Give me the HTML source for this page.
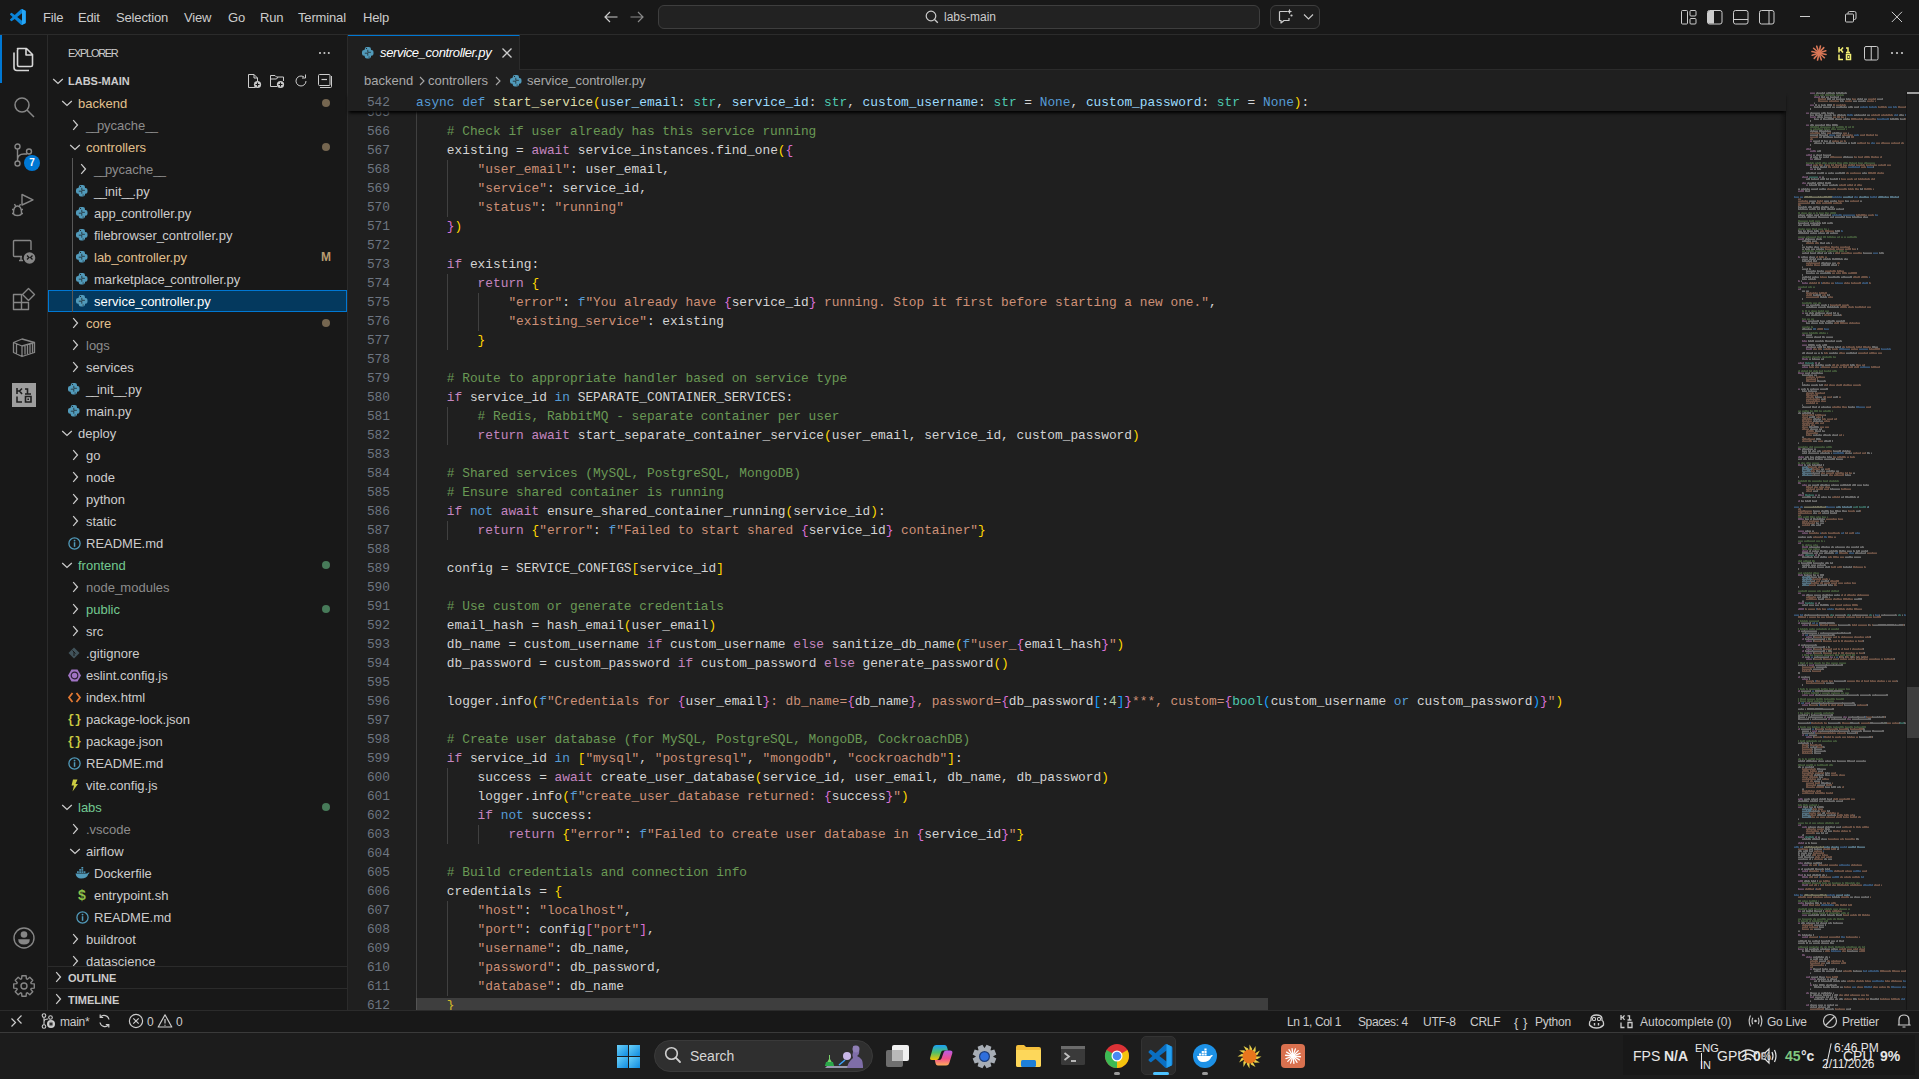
<!DOCTYPE html><html><head><meta charset="utf-8"><style>
*{margin:0;padding:0;box-sizing:border-box}
html,body{width:1919px;height:1079px;overflow:hidden;background:#181818}
body{position:relative;font-family:"Liberation Sans",sans-serif;font-size:13px;color:#cccccc}
.a{position:absolute}
.mono{font-family:"Liberation Mono",monospace}
svg{position:absolute;overflow:visible}
#code{position:absolute;left:416px;top:0;font-family:"Liberation Mono",monospace;font-size:12.83px;white-space:pre;color:#d4d4d4}
.ln{position:absolute;height:19px;line-height:19px}
.lnum{position:absolute;left:348px;width:42px;text-align:right;font-family:"Liberation Mono",monospace;font-size:12.83px;color:#6e7681;height:19px;line-height:19px}
i{font-style:normal}
b{font-weight:normal}
.kw{color:#c586c0}.st{color:#569cd6}.fn{color:#dcdcaa}.par{color:#9cdcfe}.ty{color:#4ec9b0}.s{color:#ce9178}.c{color:#6a9955}.n{color:#b5cea8}
.guide{position:absolute;width:1px;background:#404040}
.row{position:absolute;left:48px;width:299px;height:22px;line-height:22px;white-space:nowrap}
.row .t{position:absolute;top:0}
.us{letter-spacing:-1.8px}
</style></head><body>
<div class="a" style="left:0;top:0;width:1919px;height:34px;background:#181818"></div>
<div class="a" style="left:0;top:34px;width:1919px;height:1px;background:#2b2b2b"></div>
<div class="a" style="left:0;top:35px;width:47px;height:975px;background:#181818"></div>
<div class="a" style="left:47px;top:35px;width:1px;height:975px;background:#2b2b2b"></div>
<div class="a" style="left:0;top:35px;width:2px;height:48px;background:#0078d4"></div>
<div class="a" style="left:48px;top:35px;width:299px;height:975px;background:#181818"></div>
<div class="a" style="left:347px;top:35px;width:1px;height:975px;background:#2b2b2b"></div>
<div class="a" style="left:348px;top:35px;width:1571px;height:35px;background:#181818"></div>
<div class="a" style="left:348px;top:69px;width:1571px;height:1px;background:#2b2b2b"></div>
<div class="a" style="left:348px;top:70px;width:1571px;height:940px;background:#1f1f1f"></div>
<div class="a" style="left:348px;top:35px;width:172px;height:35px;background:#1f1f1f;border-top:1px solid #0078d4;border-right:1px solid #2b2b2b"></div>
<div class="a" style="left:380px;top:35px;height:35px;line-height:35px;font-style:italic;color:#ffffff;letter-spacing:-0.35px">service_controller.py</div>
<svg style="left:362px;top:47px" width="12" height="12" viewBox="0 0 12 12"><rect x="2.7" y="0" width="6.3" height="11.5" rx="2.2" fill="#519aba"/><rect x="0" y="2.9" width="11.5" height="5.8" rx="2" fill="#519aba"/><path d="M2.8 6.2H5.8V8.7M8.9 5.3H5.8V2.8" fill="none" stroke="#181818" stroke-width="0.7"/><circle cx="4.5" cy="1.5" r="0.6" fill="#181818"/><circle cx="7.1" cy="10" r="0.6" fill="#181818"/></svg>
<svg style="left:510px;top:75px" width="12" height="12" viewBox="0 0 12 12"><rect x="2.7" y="0" width="6.3" height="11.5" rx="2.2" fill="#519aba"/><rect x="0" y="2.9" width="11.5" height="5.8" rx="2" fill="#519aba"/><path d="M2.8 6.2H5.8V8.7M8.9 5.3H5.8V2.8" fill="none" stroke="#181818" stroke-width="0.7"/><circle cx="4.5" cy="1.5" r="0.6" fill="#181818"/><circle cx="7.1" cy="10" r="0.6" fill="#181818"/></svg>
<svg style="left:500px;top:46px" width="14" height="14" viewBox="0 0 14 14"><path d="M2.5 2.5L11.5 11.5M11.5 2.5L2.5 11.5" stroke="#cccccc" stroke-width="1.3"/></svg>
<div class="a" style="left:364px;top:70px;height:22px;line-height:22px;color:#a9a9a9;white-space:pre">backend</div>
<div class="a" style="left:428px;top:70px;height:22px;line-height:22px;color:#a9a9a9;white-space:pre">controllers</div>
<div class="a" style="left:527px;top:70px;height:22px;line-height:22px;color:#a9a9a9;white-space:pre">service_controller.py</div>
<svg style="left:417px;top:75px" width="10" height="12" viewBox="0 0 10 12"><path d="M3 2L7 6L3 10" fill="none" stroke="#a9a9a9" stroke-width="1.1"/></svg>
<svg style="left:493px;top:75px" width="10" height="12" viewBox="0 0 10 12"><path d="M3 2L7 6L3 10" fill="none" stroke="#a9a9a9" stroke-width="1.1"/></svg>
<div class="lnum" style="top:103px">565</div>
<div class="lnum" style="top:122px">566</div>
<div class="ln" style="left:416px;top:122px;font-family:'Liberation Mono',monospace;font-size:12.83px;white-space:pre;color:#d4d4d4">    <i class="c"># Check if user already has this service running</i></div>
<div class="lnum" style="top:141px">567</div>
<div class="ln" style="left:416px;top:141px;font-family:'Liberation Mono',monospace;font-size:12.83px;white-space:pre;color:#d4d4d4">    existing = <i class="kw">await</i> service_instances.find_one<b style="color:#ffd700">(</b><b style="color:#da70d6">{</b></div>
<div class="lnum" style="top:160px">568</div>
<div class="ln" style="left:416px;top:160px;font-family:'Liberation Mono',monospace;font-size:12.83px;white-space:pre;color:#d4d4d4">        <i class="s">&quot;user_email&quot;</i>: user_email,</div>
<div class="lnum" style="top:179px">569</div>
<div class="ln" style="left:416px;top:179px;font-family:'Liberation Mono',monospace;font-size:12.83px;white-space:pre;color:#d4d4d4">        <i class="s">&quot;service&quot;</i>: service_id,</div>
<div class="lnum" style="top:198px">570</div>
<div class="ln" style="left:416px;top:198px;font-family:'Liberation Mono',monospace;font-size:12.83px;white-space:pre;color:#d4d4d4">        <i class="s">&quot;status&quot;</i>: <i class="s">&quot;running&quot;</i></div>
<div class="lnum" style="top:217px">571</div>
<div class="ln" style="left:416px;top:217px;font-family:'Liberation Mono',monospace;font-size:12.83px;white-space:pre;color:#d4d4d4">    <b style="color:#da70d6">}</b><b style="color:#ffd700">)</b></div>
<div class="lnum" style="top:236px">572</div>
<div class="ln" style="left:416px;top:236px;font-family:'Liberation Mono',monospace;font-size:12.83px;white-space:pre;color:#d4d4d4"></div>
<div class="lnum" style="top:255px">573</div>
<div class="ln" style="left:416px;top:255px;font-family:'Liberation Mono',monospace;font-size:12.83px;white-space:pre;color:#d4d4d4">    <i class="kw">if</i> existing:</div>
<div class="lnum" style="top:274px">574</div>
<div class="ln" style="left:416px;top:274px;font-family:'Liberation Mono',monospace;font-size:12.83px;white-space:pre;color:#d4d4d4">        <i class="kw">return</i> <b style="color:#ffd700">{</b></div>
<div class="lnum" style="top:293px">575</div>
<div class="ln" style="left:416px;top:293px;font-family:'Liberation Mono',monospace;font-size:12.83px;white-space:pre;color:#d4d4d4">            <i class="s">&quot;error&quot;</i>: <i class="st">f</i><i class="s">&quot;You already have </i><b style="color:#da70d6">{</b>service_id<b style="color:#da70d6">}</b><i class="s"> running. Stop it first before starting a new one.&quot;</i>,</div>
<div class="lnum" style="top:312px">576</div>
<div class="ln" style="left:416px;top:312px;font-family:'Liberation Mono',monospace;font-size:12.83px;white-space:pre;color:#d4d4d4">            <i class="s">&quot;existing_service&quot;</i>: existing</div>
<div class="lnum" style="top:331px">577</div>
<div class="ln" style="left:416px;top:331px;font-family:'Liberation Mono',monospace;font-size:12.83px;white-space:pre;color:#d4d4d4">        <b style="color:#ffd700">}</b></div>
<div class="lnum" style="top:350px">578</div>
<div class="ln" style="left:416px;top:350px;font-family:'Liberation Mono',monospace;font-size:12.83px;white-space:pre;color:#d4d4d4"></div>
<div class="lnum" style="top:369px">579</div>
<div class="ln" style="left:416px;top:369px;font-family:'Liberation Mono',monospace;font-size:12.83px;white-space:pre;color:#d4d4d4">    <i class="c"># Route to appropriate handler based on service type</i></div>
<div class="lnum" style="top:388px">580</div>
<div class="ln" style="left:416px;top:388px;font-family:'Liberation Mono',monospace;font-size:12.83px;white-space:pre;color:#d4d4d4">    <i class="kw">if</i> service_id <i class="st">in</i> SEPARATE_CONTAINER_SERVICES:</div>
<div class="lnum" style="top:407px">581</div>
<div class="ln" style="left:416px;top:407px;font-family:'Liberation Mono',monospace;font-size:12.83px;white-space:pre;color:#d4d4d4">        <i class="c"># Redis, RabbitMQ - separate container per user</i></div>
<div class="lnum" style="top:426px">582</div>
<div class="ln" style="left:416px;top:426px;font-family:'Liberation Mono',monospace;font-size:12.83px;white-space:pre;color:#d4d4d4">        <i class="kw">return</i> <i class="kw">await</i> start_separate_container_service<b style="color:#ffd700">(</b>user_email, service_id, custom_password<b style="color:#ffd700">)</b></div>
<div class="lnum" style="top:445px">583</div>
<div class="ln" style="left:416px;top:445px;font-family:'Liberation Mono',monospace;font-size:12.83px;white-space:pre;color:#d4d4d4"></div>
<div class="lnum" style="top:464px">584</div>
<div class="ln" style="left:416px;top:464px;font-family:'Liberation Mono',monospace;font-size:12.83px;white-space:pre;color:#d4d4d4">    <i class="c"># Shared services (MySQL, PostgreSQL, MongoDB)</i></div>
<div class="lnum" style="top:483px">585</div>
<div class="ln" style="left:416px;top:483px;font-family:'Liberation Mono',monospace;font-size:12.83px;white-space:pre;color:#d4d4d4">    <i class="c"># Ensure shared container is running</i></div>
<div class="lnum" style="top:502px">586</div>
<div class="ln" style="left:416px;top:502px;font-family:'Liberation Mono',monospace;font-size:12.83px;white-space:pre;color:#d4d4d4">    <i class="kw">if</i> <i class="st">not</i> <i class="kw">await</i> ensure_shared_container_running<b style="color:#ffd700">(</b>service_id<b style="color:#ffd700">)</b>:</div>
<div class="lnum" style="top:521px">587</div>
<div class="ln" style="left:416px;top:521px;font-family:'Liberation Mono',monospace;font-size:12.83px;white-space:pre;color:#d4d4d4">        <i class="kw">return</i> <b style="color:#ffd700">{</b><i class="s">&quot;error&quot;</i>: <i class="st">f</i><i class="s">&quot;Failed to start shared </i><b style="color:#da70d6">{</b>service_id<b style="color:#da70d6">}</b><i class="s"> container&quot;</i><b style="color:#ffd700">}</b></div>
<div class="lnum" style="top:540px">588</div>
<div class="ln" style="left:416px;top:540px;font-family:'Liberation Mono',monospace;font-size:12.83px;white-space:pre;color:#d4d4d4"></div>
<div class="lnum" style="top:559px">589</div>
<div class="ln" style="left:416px;top:559px;font-family:'Liberation Mono',monospace;font-size:12.83px;white-space:pre;color:#d4d4d4">    config = SERVICE_CONFIGS<b style="color:#ffd700">[</b>service_id<b style="color:#ffd700">]</b></div>
<div class="lnum" style="top:578px">590</div>
<div class="ln" style="left:416px;top:578px;font-family:'Liberation Mono',monospace;font-size:12.83px;white-space:pre;color:#d4d4d4"></div>
<div class="lnum" style="top:597px">591</div>
<div class="ln" style="left:416px;top:597px;font-family:'Liberation Mono',monospace;font-size:12.83px;white-space:pre;color:#d4d4d4">    <i class="c"># Use custom or generate credentials</i></div>
<div class="lnum" style="top:616px">592</div>
<div class="ln" style="left:416px;top:616px;font-family:'Liberation Mono',monospace;font-size:12.83px;white-space:pre;color:#d4d4d4">    email_hash = hash_email<b style="color:#ffd700">(</b>user_email<b style="color:#ffd700">)</b></div>
<div class="lnum" style="top:635px">593</div>
<div class="ln" style="left:416px;top:635px;font-family:'Liberation Mono',monospace;font-size:12.83px;white-space:pre;color:#d4d4d4">    db_name = custom_username <i class="kw">if</i> custom_username <i class="kw">else</i> sanitize_db_name<b style="color:#ffd700">(</b><i class="st">f</i><i class="s">&quot;user_</i><b style="color:#da70d6">{</b>email_hash<b style="color:#da70d6">}</b><i class="s">&quot;</i><b style="color:#ffd700">)</b></div>
<div class="lnum" style="top:654px">594</div>
<div class="ln" style="left:416px;top:654px;font-family:'Liberation Mono',monospace;font-size:12.83px;white-space:pre;color:#d4d4d4">    db_password = custom_password <i class="kw">if</i> custom_password <i class="kw">else</i> generate_password<b style="color:#ffd700">(</b><b style="color:#ffd700">)</b></div>
<div class="lnum" style="top:673px">595</div>
<div class="ln" style="left:416px;top:673px;font-family:'Liberation Mono',monospace;font-size:12.83px;white-space:pre;color:#d4d4d4"></div>
<div class="lnum" style="top:692px">596</div>
<div class="ln" style="left:416px;top:692px;font-family:'Liberation Mono',monospace;font-size:12.83px;white-space:pre;color:#d4d4d4">    logger.info<b style="color:#ffd700">(</b><i class="st">f</i><i class="s">&quot;Credentials for </i><b style="color:#da70d6">{</b>user_email<b style="color:#da70d6">}</b><i class="s">: db_name=</i><b style="color:#da70d6">{</b>db_name<b style="color:#da70d6">}</b><i class="s">, password=</i><b style="color:#da70d6">{</b>db_password<b style="color:#179fff">[</b>:<i class="n">4</i><b style="color:#179fff">]</b><b style="color:#da70d6">}</b><i class="s">***, custom=</i><b style="color:#da70d6">{</b><i class="ty">bool</i><b style="color:#179fff">(</b>custom_username <i class="st">or</i> custom_password<b style="color:#179fff">)</b><b style="color:#da70d6">}</b><i class="s">&quot;</i><b style="color:#ffd700">)</b></div>
<div class="lnum" style="top:711px">597</div>
<div class="ln" style="left:416px;top:711px;font-family:'Liberation Mono',monospace;font-size:12.83px;white-space:pre;color:#d4d4d4"></div>
<div class="lnum" style="top:730px">598</div>
<div class="ln" style="left:416px;top:730px;font-family:'Liberation Mono',monospace;font-size:12.83px;white-space:pre;color:#d4d4d4">    <i class="c"># Create user database (for MySQL, PostgreSQL, MongoDB, CockroachDB)</i></div>
<div class="lnum" style="top:749px">599</div>
<div class="ln" style="left:416px;top:749px;font-family:'Liberation Mono',monospace;font-size:12.83px;white-space:pre;color:#d4d4d4">    <i class="kw">if</i> service_id <i class="st">in</i> <b style="color:#ffd700">[</b><i class="s">&quot;mysql&quot;</i>, <i class="s">&quot;postgresql&quot;</i>, <i class="s">&quot;mongodb&quot;</i>, <i class="s">&quot;cockroachdb&quot;</i><b style="color:#ffd700">]</b>:</div>
<div class="lnum" style="top:768px">600</div>
<div class="ln" style="left:416px;top:768px;font-family:'Liberation Mono',monospace;font-size:12.83px;white-space:pre;color:#d4d4d4">        success = <i class="kw">await</i> create_user_database<b style="color:#ffd700">(</b>service_id, user_email, db_name, db_password<b style="color:#ffd700">)</b></div>
<div class="lnum" style="top:787px">601</div>
<div class="ln" style="left:416px;top:787px;font-family:'Liberation Mono',monospace;font-size:12.83px;white-space:pre;color:#d4d4d4">        logger.info<b style="color:#ffd700">(</b><i class="st">f</i><i class="s">&quot;create_user_database returned: </i><b style="color:#da70d6">{</b>success<b style="color:#da70d6">}</b><i class="s">&quot;</i><b style="color:#ffd700">)</b></div>
<div class="lnum" style="top:806px">602</div>
<div class="ln" style="left:416px;top:806px;font-family:'Liberation Mono',monospace;font-size:12.83px;white-space:pre;color:#d4d4d4">        <i class="kw">if</i> <i class="st">not</i> success:</div>
<div class="lnum" style="top:825px">603</div>
<div class="ln" style="left:416px;top:825px;font-family:'Liberation Mono',monospace;font-size:12.83px;white-space:pre;color:#d4d4d4">            <i class="kw">return</i> <b style="color:#ffd700">{</b><i class="s">&quot;error&quot;</i>: <i class="st">f</i><i class="s">&quot;Failed to create user database in </i><b style="color:#da70d6">{</b>service_id<b style="color:#da70d6">}</b><i class="s">&quot;</i><b style="color:#ffd700">}</b></div>
<div class="lnum" style="top:844px">604</div>
<div class="ln" style="left:416px;top:844px;font-family:'Liberation Mono',monospace;font-size:12.83px;white-space:pre;color:#d4d4d4"></div>
<div class="lnum" style="top:863px">605</div>
<div class="ln" style="left:416px;top:863px;font-family:'Liberation Mono',monospace;font-size:12.83px;white-space:pre;color:#d4d4d4">    <i class="c"># Build credentials and connection info</i></div>
<div class="lnum" style="top:882px">606</div>
<div class="ln" style="left:416px;top:882px;font-family:'Liberation Mono',monospace;font-size:12.83px;white-space:pre;color:#d4d4d4">    credentials = <b style="color:#ffd700">{</b></div>
<div class="lnum" style="top:901px">607</div>
<div class="ln" style="left:416px;top:901px;font-family:'Liberation Mono',monospace;font-size:12.83px;white-space:pre;color:#d4d4d4">        <i class="s">&quot;host&quot;</i>: <i class="s">&quot;localhost&quot;</i>,</div>
<div class="lnum" style="top:920px">608</div>
<div class="ln" style="left:416px;top:920px;font-family:'Liberation Mono',monospace;font-size:12.83px;white-space:pre;color:#d4d4d4">        <i class="s">&quot;port&quot;</i>: config<b style="color:#da70d6">[</b><i class="s">&quot;port&quot;</i><b style="color:#da70d6">]</b>,</div>
<div class="lnum" style="top:939px">609</div>
<div class="ln" style="left:416px;top:939px;font-family:'Liberation Mono',monospace;font-size:12.83px;white-space:pre;color:#d4d4d4">        <i class="s">&quot;username&quot;</i>: db_name,</div>
<div class="lnum" style="top:958px">610</div>
<div class="ln" style="left:416px;top:958px;font-family:'Liberation Mono',monospace;font-size:12.83px;white-space:pre;color:#d4d4d4">        <i class="s">&quot;password&quot;</i>: db_password,</div>
<div class="lnum" style="top:977px">611</div>
<div class="ln" style="left:416px;top:977px;font-family:'Liberation Mono',monospace;font-size:12.83px;white-space:pre;color:#d4d4d4">        <i class="s">&quot;database&quot;</i>: db_name</div>
<div class="lnum" style="top:996px">612</div>
<div class="ln" style="left:416px;top:996px;font-family:'Liberation Mono',monospace;font-size:12.83px;white-space:pre;color:#d4d4d4">    <b style="color:#ffd700">}</b></div>
<div class="guide" style="left:416px;top:103px;height:912px"></div>
<div class="guide" style="left:447px;top:160px;height:57px"></div>
<div class="guide" style="left:447px;top:274px;height:76px"></div>
<div class="guide" style="left:447px;top:407px;height:38px"></div>
<div class="guide" style="left:447px;top:521px;height:19px"></div>
<div class="guide" style="left:447px;top:768px;height:76px"></div>
<div class="guide" style="left:447px;top:901px;height:95px"></div>
<div class="guide" style="left:478px;top:293px;height:38px"></div>
<div class="guide" style="left:478px;top:825px;height:19px"></div>
<div class="a" style="left:416px;top:998px;width:852px;height:12px;background:rgba(121,121,121,0.345)"></div>
<svg style="left:0;top:0" width="1919" height="1079" viewBox="0 0 1919 1079"><path fill="#b27aae" fill-opacity="0.3" d="M1810 93h5v1h-5zM1814 97h6v1h-6zM1815 96h1v1h-1zM1819 96h1v1h-1zM1810 105h4v1h-4zM1806 113h3v1h-3zM1810 117h6v1h-6zM1810 116h1v1h-1zM1814 116h1v1h-1zM1806 125h3v1h-3zM1810 141h2v1h-2zM1806 149h5v1h-5zM1807 148h2v1h-2zM1810 148h1v1h-1zM1810 151h6v1h-6zM1813 150h2v1h-2zM1806 155h6v1h-6zM1808 154h2v1h-2zM1811 154h1v1h-1zM1810 159h3v1h-3zM1810 158h1v1h-1zM1806 165h6v1h-6zM1806 164h3v1h-3zM1811 164h1v1h-1zM1810 169h3v1h-3zM1802 177h6v1h-6zM1803 176h1v1h-1zM1807 176h1v1h-1zM1819 177h2v1h-2zM1802 183h4v1h-4zM1803 182h1v1h-1zM1806 185h2v1h-2zM1798 191h6v1h-6zM1801 190h3v1h-3zM1798 239h6v1h-6zM1802 238h2v1h-2zM1798 257h2v1h-2zM1798 256h1v1h-1zM1798 281h2v1h-2zM1798 280h1v1h-1zM1802 283h6v1h-6zM1802 282h1v1h-1zM1805 282h1v1h-1zM1798 289h3v1h-3zM1800 288h1v1h-1zM1802 305h3v1h-3zM1802 313h2v1h-2zM1802 321h5v1h-5zM1802 320h2v1h-2zM1802 335h3v1h-3zM1803 334h1v1h-1zM1802 341h5v1h-5zM1802 340h1v1h-1zM1804 340h1v1h-1zM1802 345h5v1h-5zM1806 349h6v1h-6zM1806 348h1v1h-1zM1810 348h2v1h-2zM1802 359h6v1h-6zM1802 358h2v1h-2zM1806 358h1v1h-1zM1798 363h6v1h-6zM1800 362h1v1h-1zM1803 362h1v1h-1zM1815 363h2v1h-2zM1815 362h2v1h-2zM1802 367h6v1h-6zM1804 366h1v1h-1zM1798 373h6v1h-6zM1798 372h2v1h-2zM1798 389h2v1h-2zM1798 449h3v1h-3zM1798 448h2v1h-2zM1798 457h6v1h-6zM1799 456h1v1h-1zM1801 456h1v1h-1zM1798 465h5v1h-5zM1798 464h2v1h-2zM1802 464h1v1h-1zM1798 483h3v1h-3zM1798 482h2v1h-2zM1802 485h5v1h-5zM1804 484h1v1h-1zM1798 495h6v1h-6zM1799 494h2v1h-2zM1803 494h1v1h-1zM1815 495h2v1h-2zM1798 501h2v1h-2zM1799 500h1v1h-1zM1798 519h6v1h-6zM1798 518h4v1h-4zM1798 531h6v1h-6zM1802 533h6v1h-6zM1804 532h1v1h-1zM1798 543h3v1h-3zM1800 542h1v1h-1zM1802 547h6v1h-6zM1802 546h2v1h-2zM1806 546h2v1h-2zM1802 551h6v1h-6zM1803 550h1v1h-1zM1807 550h1v1h-1zM1798 555h6v1h-6zM1799 554h1v1h-1zM1801 554h2v1h-2zM1815 555h2v1h-2zM1816 554h1v1h-1zM1798 563h2v1h-2zM1798 575h5v1h-5zM1798 574h2v1h-2zM1801 574h1v1h-1zM1798 593h3v1h-3zM1802 595h3v1h-3zM1798 603h6v1h-6zM1799 602h1v1h-1zM1802 602h2v1h-2zM1815 603h2v1h-2zM1798 609h6v1h-6zM1799 608h5v1h-5zM1798 623h2v1h-2zM1799 622h1v1h-1zM1802 625h6v1h-6zM1804 624h1v1h-1zM1798 631h2v1h-2zM1799 630h1v1h-1zM1802 635h2v1h-2zM1803 634h1v1h-1zM1806 637h6v1h-6zM1808 636h1v1h-1zM1802 639h2v1h-2zM1803 638h1v1h-1zM1806 641h6v1h-6zM1808 640h1v1h-1zM1798 645h2v1h-2zM1799 644h1v1h-1zM1802 647h2v1h-2zM1803 646h1v1h-1zM1806 649h6v1h-6zM1808 648h1v1h-1zM1802 651h2v1h-2zM1803 650h1v1h-1zM1806 653h6v1h-6zM1808 652h1v1h-1zM1802 657h2v1h-2zM1803 656h1v1h-1zM1830 657h3v1h-3zM1830 656h1v1h-1zM1806 659h6v1h-6zM1808 658h1v1h-1zM1809 665h5v1h-5zM1813 664h1v1h-1zM1798 677h2v1h-2zM1799 676h1v1h-1zM1802 679h6v1h-6zM1804 678h1v1h-1zM1798 691h2v1h-2zM1799 690h1v1h-1zM1802 695h6v1h-6zM1804 694h1v1h-1zM1809 695h5v1h-5zM1813 694h1v1h-1zM1798 703h2v1h-2zM1799 702h1v1h-1zM1805 703h5v1h-5zM1809 702h1v1h-1zM1802 705h6v1h-6zM1804 704h1v1h-1zM1824 717h2v1h-2zM1825 716h1v1h-1zM1843 717h4v1h-4zM1844 716h1v1h-1zM1828 719h2v1h-2zM1829 718h1v1h-1zM1847 719h4v1h-4zM1848 718h1v1h-1zM1798 729h2v1h-2zM1799 728h1v1h-1zM1812 731h5v1h-5zM1816 730h1v1h-1zM1802 735h2v1h-2zM1803 734h1v1h-1zM1806 737h6v1h-6zM1808 736h1v1h-1zM1798 799h5v1h-5zM1800 798h2v1h-2zM1798 807h4v1h-4zM1801 806h1v1h-1zM1798 825h3v1h-3zM1800 824h1v1h-1zM1802 827h5v1h-5zM1805 826h1v1h-1zM1798 837h6v1h-6zM1798 836h1v1h-1zM1801 836h1v1h-1zM1815 837h2v1h-2zM1816 836h1v1h-1zM1798 843h6v1h-6zM1799 842h1v1h-1zM1801 842h1v1h-1zM1803 842h1v1h-1zM1798 863h5v1h-5zM1800 862h1v1h-1zM1802 865h6v1h-6zM1798 869h2v1h-2zM1802 871h6v1h-6zM1805 870h1v1h-1zM1807 870h1v1h-1zM1798 875h5v1h-5zM1798 874h2v1h-2zM1802 874h1v1h-1zM1802 877h6v1h-6zM1802 876h3v1h-3zM1806 876h1v1h-1zM1798 881h5v1h-5zM1800 880h3v1h-3zM1802 885h6v1h-6zM1802 884h2v1h-2zM1806 884h2v1h-2zM1798 889h6v1h-6zM1798 888h1v1h-1zM1798 903h6v1h-6zM1801 902h1v1h-1zM1802 905h6v1h-6zM1803 904h1v1h-1zM1805 904h1v1h-1zM1807 904h1v1h-1zM1798 911h3v1h-3zM1798 910h1v1h-1zM1802 915h5v1h-5zM1798 923h2v1h-2zM1798 935h3v1h-3zM1798 934h2v1h-2zM1802 937h6v1h-6zM1805 936h1v1h-1zM1807 936h1v1h-1zM1798 949h6v1h-6zM1798 948h1v1h-1zM1802 955h3v1h-3zM1802 954h2v1h-2zM1806 957h6v1h-6zM1807 956h1v1h-1zM1809 956h1v1h-1zM1810 969h2v1h-2zM1806 977h4v1h-4zM1809 976h1v1h-1zM1810 979h6v1h-6zM1812 978h1v1h-1zM1814 978h1v1h-1zM1810 985h2v1h-2zM1810 984h1v1h-1zM1806 993h3v1h-3zM1807 992h1v1h-1zM1810 997h4v1h-4zM1810 996h1v1h-1zM1813 996h1v1h-1zM1806 1005h3v1h-3zM1808 1004h1v1h-1z"/><path fill="#b27aae" fill-opacity="0.26" d="M1810 92h5v2h-5zM1814 96h6v2h-6zM1810 104h4v2h-4zM1806 112h3v2h-3zM1810 116h6v2h-6zM1806 124h3v2h-3zM1810 140h2v2h-2zM1806 148h5v2h-5zM1810 150h6v2h-6zM1806 154h6v2h-6zM1810 158h3v2h-3zM1806 164h6v2h-6zM1810 168h3v2h-3zM1802 176h6v2h-6zM1819 176h2v2h-2zM1802 182h4v2h-4zM1806 184h2v2h-2zM1798 190h6v2h-6zM1798 238h6v2h-6zM1798 256h2v2h-2zM1798 280h2v2h-2zM1802 282h6v2h-6zM1798 288h3v2h-3zM1802 304h3v2h-3zM1802 312h2v2h-2zM1802 320h5v2h-5zM1802 334h3v2h-3zM1802 340h5v2h-5zM1802 344h5v2h-5zM1806 348h6v2h-6zM1802 358h6v2h-6zM1798 362h6v2h-6zM1815 362h2v2h-2zM1802 366h6v2h-6zM1798 372h6v2h-6zM1798 388h2v2h-2zM1798 448h3v2h-3zM1798 456h6v2h-6zM1798 464h5v2h-5zM1798 482h3v2h-3zM1802 484h5v2h-5zM1798 494h6v2h-6zM1815 494h2v2h-2zM1798 500h2v2h-2zM1798 518h6v2h-6zM1798 530h6v2h-6zM1802 532h6v2h-6zM1798 542h3v2h-3zM1802 546h6v2h-6zM1802 550h6v2h-6zM1798 554h6v2h-6zM1815 554h2v2h-2zM1798 562h2v2h-2zM1798 574h5v2h-5zM1798 592h3v2h-3zM1802 594h3v2h-3zM1798 602h6v2h-6zM1815 602h2v2h-2zM1798 608h6v2h-6zM1798 622h2v2h-2zM1802 624h6v2h-6zM1798 630h2v2h-2zM1802 634h2v2h-2zM1806 636h6v2h-6zM1802 638h2v2h-2zM1806 640h6v2h-6zM1798 644h2v2h-2zM1802 646h2v2h-2zM1806 648h6v2h-6zM1802 650h2v2h-2zM1806 652h6v2h-6zM1802 656h2v2h-2zM1830 656h3v2h-3zM1806 658h6v2h-6zM1809 664h5v2h-5zM1798 676h2v2h-2zM1802 678h6v2h-6zM1798 690h2v2h-2zM1802 694h6v2h-6zM1809 694h5v2h-5zM1798 702h2v2h-2zM1805 702h5v2h-5zM1802 704h6v2h-6zM1824 716h2v2h-2zM1843 716h4v2h-4zM1828 718h2v2h-2zM1847 718h4v2h-4zM1798 728h2v2h-2zM1812 730h5v2h-5zM1802 734h2v2h-2zM1806 736h6v2h-6zM1798 798h5v2h-5zM1798 806h4v2h-4zM1798 824h3v2h-3zM1802 826h5v2h-5zM1798 836h6v2h-6zM1815 836h2v2h-2zM1798 842h6v2h-6zM1798 862h5v2h-5zM1802 864h6v2h-6zM1798 868h2v2h-2zM1802 870h6v2h-6zM1798 874h5v2h-5zM1802 876h6v2h-6zM1798 880h5v2h-5zM1802 884h6v2h-6zM1798 888h6v2h-6zM1798 902h6v2h-6zM1802 904h6v2h-6zM1798 910h3v2h-3zM1802 914h5v2h-5zM1798 922h2v2h-2zM1798 934h3v2h-3zM1802 936h6v2h-6zM1798 948h6v2h-6zM1802 954h3v2h-3zM1806 956h6v2h-6zM1810 968h2v2h-2zM1806 976h4v2h-4zM1810 978h6v2h-6zM1810 984h2v2h-2zM1806 992h3v2h-3zM1810 996h4v2h-4zM1806 1004h3v2h-3z"/><path fill="#b4b4b4" fill-opacity="0.3" d="M1816 93h9v1h-9zM1817 92h1v1h-1zM1822 92h1v1h-1zM1824 92h1v1h-1zM1826 93h9v1h-9zM1828 92h3v1h-3zM1833 92h1v1h-1zM1836 93h10v1h-10zM1836 92h1v1h-1zM1838 92h2v1h-2zM1841 92h2v1h-2zM1845 92h1v1h-1zM1846 93h1v1h-1zM1821 97h4v1h-4zM1821 96h2v1h-2zM1824 96h1v1h-1zM1826 97h3v1h-3zM1830 97h9v1h-9zM1830 96h1v1h-1zM1834 96h1v1h-1zM1838 96h1v1h-1zM1840 97h1v1h-1zM1827 99h4v1h-4zM1827 98h4v1h-4zM1832 99h3v1h-3zM1834 98h1v1h-1zM1836 99h9v1h-9zM1836 98h1v1h-1zM1840 98h1v1h-1zM1846 99h5v1h-5zM1846 98h1v1h-1zM1848 98h1v1h-1zM1857 99h6v1h-6zM1858 98h1v1h-1zM1860 98h1v1h-1zM1862 98h1v1h-1zM1864 99h3v1h-3zM1877 99h6v1h-6zM1882 98h1v1h-1zM1840 101h4v1h-4zM1840 100h1v1h-1zM1842 100h1v1h-1zM1853 101h4v1h-4zM1858 101h8v1h-8zM1863 100h1v1h-1zM1814 103h1v1h-1zM1815 105h2v1h-2zM1815 104h2v1h-2zM1818 105h2v1h-2zM1821 105h5v1h-5zM1821 104h1v1h-1zM1824 104h1v1h-1zM1827 105h5v1h-5zM1827 104h5v1h-5zM1814 107h8v1h-8zM1814 106h1v1h-1zM1817 106h1v1h-1zM1819 106h1v1h-1zM1821 106h1v1h-1zM1823 107h8v1h-8zM1830 106h1v1h-1zM1832 107h3v1h-3zM1836 107h11v1h-11zM1840 106h2v1h-2zM1844 106h1v1h-1zM1848 107h5v1h-5zM1850 106h2v1h-2zM1854 107h5v1h-5zM1858 106h1v1h-1zM1810 109h1v1h-1zM1810 108h1v1h-1zM1810 113h10v1h-10zM1811 112h1v1h-1zM1821 113h5v1h-5zM1823 112h2v1h-2zM1827 113h7v1h-7zM1827 112h1v1h-1zM1831 112h1v1h-1zM1810 115h4v1h-4zM1810 114h1v1h-1zM1815 115h8v1h-8zM1815 114h2v1h-2zM1819 114h2v1h-2zM1824 115h8v1h-8zM1825 114h1v1h-1zM1830 114h1v1h-1zM1833 115h3v1h-3zM1833 114h1v1h-1zM1837 115h8v1h-8zM1838 114h2v1h-2zM1841 114h1v1h-1zM1844 114h1v1h-1zM1845 115h1v1h-1zM1854 115h12v1h-12zM1856 114h1v1h-1zM1858 114h1v1h-1zM1863 114h1v1h-1zM1865 114h1v1h-1zM1867 115h3v1h-3zM1899 115h5v1h-5zM1900 114h2v1h-2zM1817 117h6v1h-6zM1818 116h2v1h-2zM1821 116h1v1h-1zM1824 117h8v1h-8zM1824 116h1v1h-1zM1814 119h5v1h-5zM1814 118h1v1h-1zM1820 119h2v1h-2zM1821 118h1v1h-1zM1823 119h11v1h-11zM1823 118h2v1h-2zM1828 118h6v1h-6zM1835 119h7v1h-7zM1836 118h1v1h-1zM1843 119h7v1h-7zM1845 118h1v1h-1zM1847 118h1v1h-1zM1890 119h9v1h-9zM1890 118h1v1h-1zM1892 118h2v1h-2zM1895 118h3v1h-3zM1900 119h5v1h-5zM1900 118h1v1h-1zM1904 118h1v1h-1zM1810 121h1v1h-1zM1810 120h1v1h-1zM1810 125h4v1h-4zM1811 124h2v1h-2zM1815 125h10v1h-10zM1821 124h1v1h-1zM1824 124h1v1h-1zM1826 125h5v1h-5zM1826 124h3v1h-3zM1832 125h6v1h-6zM1832 124h5v1h-5zM1810 131h8v1h-8zM1811 130h1v1h-1zM1813 130h1v1h-1zM1819 131h11v1h-11zM1819 130h3v1h-3zM1825 130h1v1h-1zM1827 130h1v1h-1zM1830 131h1v1h-1zM1821 133h5v1h-5zM1821 132h1v1h-1zM1823 132h1v1h-1zM1832 133h10v1h-10zM1834 132h1v1h-1zM1836 132h3v1h-3zM1848 133h1v1h-1zM1810 135h8v1h-8zM1817 134h1v1h-1zM1819 135h9v1h-9zM1819 134h2v1h-2zM1825 134h1v1h-1zM1827 134h1v1h-1zM1836 135h5v1h-5zM1840 134h1v1h-1zM1819 137h3v1h-3zM1821 136h1v1h-1zM1823 137h10v1h-10zM1823 136h2v1h-2zM1827 136h2v1h-2zM1834 137h7v1h-7zM1834 136h1v1h-1zM1838 136h1v1h-1zM1842 137h3v1h-3zM1843 136h1v1h-1zM1846 137h4v1h-4zM1848 136h2v1h-2zM1813 141h7v1h-7zM1819 140h1v1h-1zM1821 141h2v1h-2zM1821 140h2v1h-2zM1824 141h4v1h-4zM1824 140h1v1h-1zM1829 141h2v1h-2zM1830 140h1v1h-1zM1814 143h8v1h-8zM1815 142h2v1h-2zM1823 143h2v1h-2zM1823 142h1v1h-1zM1826 143h9v1h-9zM1829 142h2v1h-2zM1833 142h1v1h-1zM1836 143h11v1h-11zM1836 142h1v1h-1zM1838 142h3v1h-3zM1846 142h1v1h-1zM1848 143h2v1h-2zM1851 143h5v1h-5zM1851 142h1v1h-1zM1854 142h2v1h-2zM1810 145h1v1h-1zM1810 144h1v1h-1zM1817 151h3v1h-3zM1819 150h1v1h-1zM1820 151h1v1h-1zM1820 150h1v1h-1zM1813 155h2v1h-2zM1816 155h6v1h-6zM1817 154h1v1h-1zM1821 154h1v1h-1zM1823 155h8v1h-8zM1823 154h1v1h-1zM1830 154h1v1h-1zM1810 157h2v1h-2zM1811 156h1v1h-1zM1813 157h5v1h-5zM1815 156h1v1h-1zM1819 157h3v1h-3zM1819 156h1v1h-1zM1823 157h6v1h-6zM1826 156h1v1h-1zM1828 156h1v1h-1zM1843 157h10v1h-10zM1844 156h2v1h-2zM1847 156h1v1h-1zM1814 159h7v1h-7zM1815 158h3v1h-3zM1820 158h1v1h-1zM1810 167h2v1h-2zM1813 167h6v1h-6zM1813 166h1v1h-1zM1815 166h1v1h-1zM1820 167h7v1h-7zM1820 166h2v1h-2zM1824 166h1v1h-1zM1826 166h1v1h-1zM1873 167h1v1h-1zM1873 166h1v1h-1zM1814 169h2v1h-2zM1817 169h3v1h-3zM1817 168h1v1h-1zM1819 168h1v1h-1zM1820 169h1v1h-1zM1806 173h10v1h-10zM1808 172h1v1h-1zM1811 172h2v1h-2zM1815 172h1v1h-1zM1817 173h7v1h-7zM1821 172h3v1h-3zM1825 173h2v1h-2zM1828 173h6v1h-6zM1831 172h1v1h-1zM1835 173h10v1h-10zM1839 172h2v1h-2zM1842 172h3v1h-3zM1862 173h5v1h-5zM1864 172h1v1h-1zM1822 177h2v1h-2zM1806 179h4v1h-4zM1808 178h2v1h-2zM1811 179h8v1h-8zM1811 178h1v1h-1zM1814 178h1v1h-1zM1818 178h1v1h-1zM1820 179h5v1h-5zM1822 178h3v1h-3zM1826 179h3v1h-3zM1826 178h1v1h-1zM1828 178h1v1h-1zM1830 179h8v1h-8zM1830 178h1v1h-1zM1834 178h1v1h-1zM1836 178h2v1h-2zM1839 179h1v1h-1zM1839 178h1v1h-1zM1807 183h9v1h-9zM1808 182h1v1h-1zM1812 182h2v1h-2zM1815 182h1v1h-1zM1817 183h7v1h-7zM1818 182h4v1h-4zM1823 182h1v1h-1zM1825 183h5v1h-5zM1825 182h2v1h-2zM1828 182h2v1h-2zM1830 183h1v1h-1zM1830 182h1v1h-1zM1809 185h8v1h-8zM1809 184h1v1h-1zM1811 184h1v1h-1zM1815 184h2v1h-2zM1818 185h3v1h-3zM1818 184h2v1h-2zM1822 185h6v1h-6zM1823 184h1v1h-1zM1829 185h9v1h-9zM1833 184h1v1h-1zM1836 184h1v1h-1zM1798 189h2v1h-2zM1801 189h9v1h-9zM1803 188h1v1h-1zM1805 188h1v1h-1zM1807 188h1v1h-1zM1811 189h7v1h-7zM1817 188h1v1h-1zM1819 189h7v1h-7zM1822 188h2v1h-2zM1860 189h3v1h-3zM1860 188h1v1h-1zM1862 188h1v1h-1zM1805 191h5v1h-5zM1805 190h2v1h-2zM1809 190h1v1h-1zM1809 201h7v1h-7zM1824 201h5v1h-5zM1830 201h7v1h-7zM1834 200h1v1h-1zM1845 201h4v1h-4zM1845 200h1v1h-1zM1860 201h2v1h-2zM1811 203h4v1h-4zM1812 202h2v1h-2zM1798 207h9v1h-9zM1798 206h1v1h-1zM1803 206h1v1h-1zM1805 206h1v1h-1zM1808 207h4v1h-4zM1809 206h2v1h-2zM1813 207h7v1h-7zM1816 206h2v1h-2zM1821 207h8v1h-8zM1822 206h1v1h-1zM1825 206h2v1h-2zM1830 207h4v1h-4zM1831 206h1v1h-1zM1798 209h10v1h-10zM1798 208h1v1h-1zM1800 208h1v1h-1zM1802 208h2v1h-2zM1809 209h7v1h-7zM1812 208h3v1h-3zM1817 209h3v1h-3zM1817 208h1v1h-1zM1819 208h1v1h-1zM1821 209h5v1h-5zM1821 208h2v1h-2zM1824 208h1v1h-1zM1827 209h8v1h-8zM1828 208h2v1h-2zM1832 208h1v1h-1zM1834 208h1v1h-1zM1836 209h8v1h-8zM1839 208h1v1h-1zM1843 208h1v1h-1zM1798 215h7v1h-7zM1800 214h1v1h-1zM1806 215h7v1h-7zM1807 214h1v1h-1zM1809 214h2v1h-2zM1814 215h5v1h-5zM1818 214h1v1h-1zM1820 215h11v1h-11zM1820 214h3v1h-3zM1825 214h1v1h-1zM1827 214h1v1h-1zM1830 214h1v1h-1zM1798 217h8v1h-8zM1798 216h1v1h-1zM1802 216h1v1h-1zM1804 216h1v1h-1zM1807 217h10v1h-10zM1808 216h3v1h-3zM1816 216h1v1h-1zM1818 217h11v1h-11zM1818 216h2v1h-2zM1830 217h4v1h-4zM1833 216h1v1h-1zM1835 217h10v1h-10zM1841 216h2v1h-2zM1844 216h1v1h-1zM1846 217h5v1h-5zM1846 216h1v1h-1zM1852 217h10v1h-10zM1852 216h1v1h-1zM1854 216h1v1h-1zM1857 216h2v1h-2zM1863 217h5v1h-5zM1864 216h1v1h-1zM1798 223h11v1h-11zM1798 222h1v1h-1zM1804 222h1v1h-1zM1808 222h1v1h-1zM1810 223h11v1h-11zM1813 222h1v1h-1zM1817 222h1v1h-1zM1819 222h1v1h-1zM1822 223h4v1h-4zM1822 222h1v1h-1zM1824 222h2v1h-2zM1827 223h5v1h-5zM1830 222h2v1h-2zM1832 223h1v1h-1zM1798 225h4v1h-4zM1799 224h1v1h-1zM1803 225h7v1h-7zM1804 224h1v1h-1zM1808 224h1v1h-1zM1811 225h9v1h-9zM1813 224h2v1h-2zM1816 224h2v1h-2zM1819 224h1v1h-1zM1798 231h4v1h-4zM1798 230h1v1h-1zM1803 231h3v1h-3zM1803 230h1v1h-1zM1807 231h6v1h-6zM1807 230h2v1h-2zM1814 231h5v1h-5zM1814 230h1v1h-1zM1816 230h2v1h-2zM1835 231h5v1h-5zM1835 230h1v1h-1zM1837 230h3v1h-3zM1798 233h11v1h-11zM1799 232h4v1h-4zM1804 232h1v1h-1zM1806 232h1v1h-1zM1808 232h1v1h-1zM1810 233h7v1h-7zM1813 232h1v1h-1zM1818 233h7v1h-7zM1820 232h1v1h-1zM1826 233h3v1h-3zM1827 232h2v1h-2zM1830 233h8v1h-8zM1833 232h1v1h-1zM1805 239h10v1h-10zM1806 238h1v1h-1zM1808 238h1v1h-1zM1816 239h6v1h-6zM1817 238h1v1h-1zM1820 238h1v1h-1zM1802 241h9v1h-9zM1804 240h2v1h-2zM1808 240h1v1h-1zM1812 241h4v1h-4zM1816 241h1v1h-1zM1820 243h5v1h-5zM1820 242h2v1h-2zM1824 242h1v1h-1zM1826 243h4v1h-4zM1828 242h1v1h-1zM1831 243h1v1h-1zM1802 245h1v1h-1zM1802 247h3v1h-3zM1806 247h7v1h-7zM1806 246h1v1h-1zM1809 246h2v1h-2zM1814 247h5v1h-5zM1815 246h1v1h-1zM1802 249h2v1h-2zM1805 249h5v1h-5zM1805 248h1v1h-1zM1808 248h1v1h-1zM1811 249h4v1h-4zM1816 249h8v1h-8zM1818 248h1v1h-1zM1821 248h1v1h-1zM1857 249h1v1h-1zM1857 248h1v1h-1zM1802 253h7v1h-7zM1805 252h1v1h-1zM1808 252h1v1h-1zM1810 253h6v1h-6zM1810 252h1v1h-1zM1815 252h1v1h-1zM1817 253h6v1h-6zM1818 252h2v1h-2zM1822 252h1v1h-1zM1824 253h3v1h-3zM1826 252h1v1h-1zM1828 253h4v1h-4zM1830 252h1v1h-1zM1833 253h1v1h-1zM1863 253h9v1h-9zM1863 252h1v1h-1zM1879 253h5v1h-5zM1879 252h1v1h-1zM1881 252h2v1h-2zM1801 257h7v1h-7zM1803 256h2v1h-2zM1809 257h6v1h-6zM1810 256h1v1h-1zM1802 259h6v1h-6zM1809 259h7v1h-7zM1810 258h1v1h-1zM1813 258h1v1h-1zM1815 258h1v1h-1zM1817 259h5v1h-5zM1820 258h1v1h-1zM1823 259h8v1h-8zM1825 258h1v1h-1zM1827 258h1v1h-1zM1829 258h1v1h-1zM1832 259h11v1h-11zM1832 258h2v1h-2zM1835 258h5v1h-5zM1841 258h1v1h-1zM1844 259h4v1h-4zM1845 258h1v1h-1zM1802 261h10v1h-10zM1802 260h1v1h-1zM1804 260h2v1h-2zM1808 260h1v1h-1zM1811 260h1v1h-1zM1813 261h3v1h-3zM1813 260h2v1h-2zM1816 261h1v1h-1zM1816 260h1v1h-1zM1821 263h10v1h-10zM1822 262h2v1h-2zM1826 262h1v1h-1zM1832 263h4v1h-4zM1821 265h9v1h-9zM1823 264h3v1h-3zM1827 264h3v1h-3zM1831 265h6v1h-6zM1832 264h2v1h-2zM1836 264h1v1h-1zM1802 267h1v1h-1zM1802 269h6v1h-6zM1807 268h1v1h-1zM1809 269h2v1h-2zM1809 268h1v1h-1zM1806 271h10v1h-10zM1806 270h1v1h-1zM1813 270h1v1h-1zM1817 271h7v1h-7zM1817 270h1v1h-1zM1821 270h1v1h-1zM1806 273h9v1h-9zM1806 272h1v1h-1zM1811 272h1v1h-1zM1816 273h3v1h-3zM1820 273h10v1h-10zM1825 272h1v1h-1zM1827 272h3v1h-3zM1830 273h1v1h-1zM1802 275h1v1h-1zM1802 274h1v1h-1zM1802 277h9v1h-9zM1805 276h2v1h-2zM1808 276h1v1h-1zM1810 276h1v1h-1zM1812 277h7v1h-7zM1815 276h1v1h-1zM1828 277h12v1h-12zM1828 276h1v1h-1zM1833 276h2v1h-2zM1837 276h2v1h-2zM1841 277h11v1h-11zM1843 276h2v1h-2zM1850 276h2v1h-2zM1802 279h5v1h-5zM1802 278h1v1h-1zM1804 278h1v1h-1zM1808 279h8v1h-8zM1810 278h1v1h-1zM1812 278h1v1h-1zM1814 278h1v1h-1zM1801 281h1v1h-1zM1802 291h3v1h-3zM1806 291h2v1h-2zM1808 291h1v1h-1zM1813 295h8v1h-8zM1813 294h1v1h-1zM1816 294h2v1h-2zM1819 294h2v1h-2zM1827 295h3v1h-3zM1827 294h1v1h-1zM1829 294h1v1h-1zM1820 297h7v1h-7zM1820 296h2v1h-2zM1823 296h1v1h-1zM1825 296h1v1h-1zM1802 299h1v1h-1zM1802 298h1v1h-1zM1806 305h3v1h-3zM1810 305h10v1h-10zM1815 304h1v1h-1zM1817 304h2v1h-2zM1821 305h6v1h-6zM1825 304h1v1h-1zM1828 305h1v1h-1zM1828 304h1v1h-1zM1806 307h11v1h-11zM1809 306h1v1h-1zM1811 306h2v1h-2zM1818 307h8v1h-8zM1824 306h1v1h-1zM1827 307h12v1h-12zM1827 306h2v1h-2zM1830 306h1v1h-1zM1832 306h1v1h-1zM1834 306h1v1h-1zM1837 306h1v1h-1zM1805 313h3v1h-3zM1809 313h5v1h-5zM1810 312h1v1h-1zM1812 312h1v1h-1zM1815 313h10v1h-10zM1816 312h1v1h-1zM1818 312h2v1h-2zM1826 313h6v1h-6zM1827 312h1v1h-1zM1831 312h1v1h-1zM1833 313h3v1h-3zM1833 312h1v1h-1zM1835 312h1v1h-1zM1837 313h2v1h-2zM1806 315h4v1h-4zM1807 314h1v1h-1zM1811 315h10v1h-10zM1812 314h1v1h-1zM1815 314h2v1h-2zM1819 314h1v1h-1zM1822 315h1v1h-1zM1833 315h8v1h-8zM1838 314h1v1h-1zM1840 314h1v1h-1zM1808 321h11v1h-11zM1813 320h1v1h-1zM1817 320h2v1h-2zM1820 321h5v1h-5zM1820 320h1v1h-1zM1826 321h9v1h-9zM1828 320h2v1h-2zM1832 320h2v1h-2zM1836 321h8v1h-8zM1841 320h1v1h-1zM1843 320h1v1h-1zM1844 321h1v1h-1zM1844 320h1v1h-1zM1806 323h4v1h-4zM1806 322h1v1h-1zM1811 323h7v1h-7zM1812 322h1v1h-1zM1819 323h4v1h-4zM1819 322h1v1h-1zM1822 322h1v1h-1zM1823 323h1v1h-1zM1825 323h8v1h-8zM1825 322h1v1h-1zM1828 322h3v1h-3zM1802 329h9v1h-9zM1803 328h2v1h-2zM1808 328h1v1h-1zM1811 329h1v1h-1zM1806 335h5v1h-5zM1811 335h1v1h-1zM1811 334h1v1h-1zM1806 337h7v1h-7zM1814 337h7v1h-7zM1815 336h1v1h-1zM1820 336h1v1h-1zM1822 337h3v1h-3zM1822 336h2v1h-2zM1826 337h7v1h-7zM1808 341h6v1h-6zM1808 340h1v1h-1zM1810 340h1v1h-1zM1812 340h2v1h-2zM1815 341h9v1h-9zM1820 340h1v1h-1zM1822 340h1v1h-1zM1825 341h10v1h-10zM1825 340h2v1h-2zM1831 340h1v1h-1zM1834 340h1v1h-1zM1836 341h6v1h-6zM1840 340h1v1h-1zM1808 345h7v1h-7zM1808 344h6v1h-6zM1816 345h5v1h-5zM1819 344h1v1h-1zM1822 345h5v1h-5zM1824 344h3v1h-3zM1806 347h10v1h-10zM1807 346h1v1h-1zM1811 346h1v1h-1zM1817 347h5v1h-5zM1819 346h3v1h-3zM1823 347h3v1h-3zM1823 346h1v1h-1zM1827 347h7v1h-7zM1827 346h3v1h-3zM1835 347h6v1h-6zM1835 346h1v1h-1zM1837 346h1v1h-1zM1840 346h1v1h-1zM1872 347h6v1h-6zM1872 346h3v1h-3zM1802 353h3v1h-3zM1803 352h2v1h-2zM1806 353h7v1h-7zM1807 352h1v1h-1zM1812 352h1v1h-1zM1814 353h3v1h-3zM1818 353h2v1h-2zM1821 353h2v1h-2zM1821 352h1v1h-1zM1829 353h9v1h-9zM1833 352h1v1h-1zM1835 352h1v1h-1zM1846 353h11v1h-11zM1850 352h2v1h-2zM1853 352h1v1h-1zM1856 352h1v1h-1zM1809 359h2v1h-2zM1812 359h8v1h-8zM1812 358h1v1h-1zM1814 358h1v1h-1zM1821 359h3v1h-3zM1823 358h1v1h-1zM1818 363h2v1h-2zM1819 362h1v1h-1zM1802 365h8v1h-8zM1811 365h3v1h-3zM1812 364h1v1h-1zM1815 365h9v1h-9zM1816 364h1v1h-1zM1818 364h1v1h-1zM1820 364h2v1h-2zM1825 365h6v1h-6zM1829 364h1v1h-1zM1850 365h5v1h-5zM1850 364h1v1h-1zM1852 364h2v1h-2zM1805 373h5v1h-5zM1809 372h1v1h-1zM1811 373h11v1h-11zM1812 372h1v1h-1zM1816 372h2v1h-2zM1819 372h1v1h-1zM1822 373h1v1h-1zM1802 375h11v1h-11zM1802 374h1v1h-1zM1808 374h1v1h-1zM1814 375h3v1h-3zM1817 381h9v1h-9zM1817 380h2v1h-2zM1824 380h1v1h-1zM1802 383h1v1h-1zM1802 382h1v1h-1zM1802 385h8v1h-8zM1802 384h1v1h-1zM1804 384h1v1h-1zM1807 384h1v1h-1zM1811 385h7v1h-7zM1816 384h1v1h-1zM1819 385h4v1h-4zM1819 384h1v1h-1zM1821 384h2v1h-2zM1801 389h5v1h-5zM1804 388h1v1h-1zM1807 389h2v1h-2zM1807 388h1v1h-1zM1810 389h9v1h-9zM1813 388h1v1h-1zM1820 389h7v1h-7zM1826 388h1v1h-1zM1827 389h1v1h-1zM1827 388h1v1h-1zM1802 391h5v1h-5zM1802 390h1v1h-1zM1804 390h1v1h-1zM1808 391h8v1h-8zM1808 390h1v1h-1zM1811 390h1v1h-1zM1816 391h1v1h-1zM1815 397h7v1h-7zM1815 396h1v1h-1zM1817 396h1v1h-1zM1833 397h5v1h-5zM1836 396h2v1h-2zM1821 399h4v1h-4zM1824 398h1v1h-1zM1802 405h1v1h-1zM1802 407h9v1h-9zM1803 406h1v1h-1zM1810 406h1v1h-1zM1812 407h5v1h-5zM1812 406h2v1h-2zM1816 406h1v1h-1zM1818 407h2v1h-2zM1819 406h1v1h-1zM1821 407h10v1h-10zM1823 406h1v1h-1zM1827 406h1v1h-1zM1848 407h7v1h-7zM1848 406h1v1h-1zM1852 406h1v1h-1zM1798 413h3v1h-3zM1799 412h1v1h-1zM1802 413h9v1h-9zM1804 412h2v1h-2zM1807 412h4v1h-4zM1812 413h2v1h-2zM1825 415h1v1h-1zM1809 417h6v1h-6zM1812 416h3v1h-3zM1822 417h1v1h-1zM1822 416h1v1h-1zM1813 419h8v1h-8zM1814 418h2v1h-2zM1818 418h1v1h-1zM1813 421h10v1h-10zM1814 420h1v1h-1zM1816 420h1v1h-1zM1819 420h1v1h-1zM1809 427h10v1h-10zM1809 426h3v1h-3zM1814 426h4v1h-4zM1810 429h8v1h-8zM1811 428h1v1h-1zM1819 429h3v1h-3zM1821 428h1v1h-1zM1815 431h6v1h-6zM1815 430h2v1h-2zM1820 430h1v1h-1zM1822 431h3v1h-3zM1822 430h1v1h-1zM1813 435h9v1h-9zM1816 434h1v1h-1zM1819 434h1v1h-1zM1823 435h8v1h-8zM1824 434h2v1h-2zM1829 434h1v1h-1zM1832 435h6v1h-6zM1833 434h1v1h-1zM1837 434h1v1h-1zM1802 437h2v1h-2zM1816 439h4v1h-4zM1816 438h4v1h-4zM1820 439h1v1h-1zM1813 441h4v1h-4zM1824 441h7v1h-7zM1825 440h2v1h-2zM1829 440h2v1h-2zM1832 441h1v1h-1zM1832 440h1v1h-1zM1798 443h1v1h-1zM1802 449h11v1h-11zM1803 448h2v1h-2zM1808 448h1v1h-1zM1814 449h2v1h-2zM1802 451h5v1h-5zM1802 450h1v1h-1zM1808 451h3v1h-3zM1808 450h1v1h-1zM1810 450h1v1h-1zM1812 451h4v1h-4zM1813 450h1v1h-1zM1817 451h4v1h-4zM1819 450h1v1h-1zM1833 451h8v1h-8zM1833 450h1v1h-1zM1839 450h2v1h-2zM1842 451h8v1h-8zM1843 450h1v1h-1zM1845 450h1v1h-1zM1847 450h1v1h-1zM1802 453h5v1h-5zM1804 452h1v1h-1zM1806 452h1v1h-1zM1808 453h11v1h-11zM1809 452h1v1h-1zM1820 453h10v1h-10zM1822 452h1v1h-1zM1825 452h1v1h-1zM1828 452h1v1h-1zM1831 453h1v1h-1zM1845 453h7v1h-7zM1846 452h1v1h-1zM1849 452h1v1h-1zM1867 453h3v1h-3zM1867 452h2v1h-2zM1871 453h1v1h-1zM1805 457h4v1h-4zM1807 456h1v1h-1zM1810 457h4v1h-4zM1810 456h1v1h-1zM1815 457h11v1h-11zM1816 456h1v1h-1zM1818 456h2v1h-2zM1823 456h1v1h-1zM1827 457h5v1h-5zM1827 456h1v1h-1zM1829 456h1v1h-1zM1798 459h4v1h-4zM1801 458h1v1h-1zM1803 459h4v1h-4zM1804 458h2v1h-2zM1808 459h6v1h-6zM1808 458h1v1h-1zM1810 458h1v1h-1zM1813 458h1v1h-1zM1815 459h8v1h-8zM1815 458h1v1h-1zM1818 458h2v1h-2zM1824 459h11v1h-11zM1832 458h3v1h-3zM1836 459h7v1h-7zM1836 458h1v1h-1zM1804 465h2v1h-2zM1804 464h1v1h-1zM1807 465h4v1h-4zM1809 464h1v1h-1zM1812 465h10v1h-10zM1812 464h1v1h-1zM1814 464h1v1h-1zM1817 464h3v1h-3zM1821 464h1v1h-1zM1823 465h1v1h-1zM1823 464h1v1h-1zM1821 469h3v1h-3zM1816 471h9v1h-9zM1816 470h2v1h-2zM1822 470h1v1h-1zM1826 471h9v1h-9zM1829 470h1v1h-1zM1831 470h2v1h-2zM1836 471h3v1h-3zM1811 473h9v1h-9zM1813 472h1v1h-1zM1819 472h1v1h-1zM1853 473h2v1h-2zM1812 475h8v1h-8zM1814 474h1v1h-1zM1821 475h7v1h-7zM1821 474h1v1h-1zM1826 474h1v1h-1zM1845 475h6v1h-6zM1845 474h1v1h-1zM1847 474h1v1h-1zM1798 477h1v1h-1zM1798 476h1v1h-1zM1808 485h3v1h-3zM1812 485h7v1h-7zM1817 484h2v1h-2zM1820 485h10v1h-10zM1821 484h2v1h-2zM1825 484h2v1h-2zM1831 485h8v1h-8zM1833 484h1v1h-1zM1840 485h11v1h-11zM1843 484h3v1h-3zM1847 484h1v1h-1zM1849 484h2v1h-2zM1852 485h4v1h-4zM1853 484h3v1h-3zM1857 485h5v1h-5zM1863 485h6v1h-6zM1863 484h1v1h-1zM1866 484h1v1h-1zM1830 489h10v1h-10zM1830 488h1v1h-1zM1832 488h1v1h-1zM1813 491h5v1h-5zM1817 490h1v1h-1zM1802 493h2v1h-2zM1802 492h1v1h-1zM1818 495h2v1h-2zM1802 497h9v1h-9zM1807 496h3v1h-3zM1812 497h4v1h-4zM1817 497h3v1h-3zM1821 497h6v1h-6zM1823 496h1v1h-1zM1828 497h3v1h-3zM1828 496h1v1h-1zM1841 497h3v1h-3zM1843 496h1v1h-1zM1845 497h11v1h-11zM1845 496h3v1h-3zM1850 496h3v1h-3zM1854 496h1v1h-1zM1857 497h2v1h-2zM1858 496h1v1h-1zM1801 501h3v1h-3zM1801 500h1v1h-1zM1805 501h6v1h-6zM1805 500h1v1h-1zM1807 500h1v1h-1zM1809 500h2v1h-2zM1812 501h5v1h-5zM1812 500h1v1h-1zM1816 500h1v1h-1zM1813 511h7v1h-7zM1813 510h1v1h-1zM1821 511h8v1h-8zM1822 510h1v1h-1zM1825 510h3v1h-3zM1830 511h4v1h-4zM1830 510h1v1h-1zM1835 511h6v1h-6zM1835 510h3v1h-3zM1842 511h5v1h-5zM1842 510h2v1h-2zM1856 511h4v1h-4zM1859 510h1v1h-1zM1813 513h4v1h-4zM1814 512h1v1h-1zM1822 513h7v1h-7zM1824 512h1v1h-1zM1828 512h1v1h-1zM1830 513h7v1h-7zM1830 512h1v1h-1zM1834 512h1v1h-1zM1836 512h1v1h-1zM1805 519h4v1h-4zM1805 518h1v1h-1zM1810 519h2v1h-2zM1811 518h1v1h-1zM1813 519h11v1h-11zM1813 518h2v1h-2zM1817 518h1v1h-1zM1819 518h2v1h-2zM1822 518h1v1h-1zM1824 519h1v1h-1zM1820 521h4v1h-4zM1820 520h3v1h-3zM1816 523h3v1h-3zM1816 522h1v1h-1zM1820 523h4v1h-4zM1811 525h4v1h-4zM1812 524h2v1h-2zM1816 525h5v1h-5zM1818 524h1v1h-1zM1820 524h1v1h-1zM1798 527h2v1h-2zM1798 526h2v1h-2zM1805 531h6v1h-6zM1807 530h1v1h-1zM1812 531h2v1h-2zM1798 537h8v1h-8zM1802 536h1v1h-1zM1807 537h5v1h-5zM1810 536h1v1h-1zM1809 547h11v1h-11zM1811 546h1v1h-1zM1817 546h1v1h-1zM1821 547h9v1h-9zM1822 546h2v1h-2zM1826 546h1v1h-1zM1831 547h3v1h-3zM1832 546h1v1h-1zM1835 547h10v1h-10zM1837 546h1v1h-1zM1846 547h4v1h-4zM1847 546h1v1h-1zM1851 547h8v1h-8zM1856 546h1v1h-1zM1858 546h1v1h-1zM1860 547h4v1h-4zM1862 546h1v1h-1zM1809 551h2v1h-2zM1810 550h1v1h-1zM1812 551h7v1h-7zM1815 550h1v1h-1zM1820 551h8v1h-8zM1820 550h2v1h-2zM1824 550h2v1h-2zM1829 551h9v1h-9zM1831 550h1v1h-1zM1833 550h1v1h-1zM1835 550h2v1h-2zM1839 551h7v1h-7zM1839 550h2v1h-2zM1842 550h2v1h-2zM1847 551h5v1h-5zM1853 551h2v1h-2zM1853 550h1v1h-1zM1856 551h4v1h-4zM1856 550h1v1h-1zM1858 550h2v1h-2zM1861 551h7v1h-7zM1865 550h1v1h-1zM1867 550h1v1h-1zM1802 553h11v1h-11zM1802 552h6v1h-6zM1814 553h4v1h-4zM1816 552h2v1h-2zM1819 553h4v1h-4zM1824 553h9v1h-9zM1825 552h2v1h-2zM1829 552h1v1h-1zM1831 552h2v1h-2zM1833 553h1v1h-1zM1855 553h11v1h-11zM1856 552h2v1h-2zM1861 552h1v1h-1zM1865 552h1v1h-1zM1818 555h2v1h-2zM1818 554h1v1h-1zM1802 557h11v1h-11zM1802 556h2v1h-2zM1807 556h2v1h-2zM1811 556h1v1h-1zM1814 557h5v1h-5zM1814 556h1v1h-1zM1818 556h1v1h-1zM1820 557h6v1h-6zM1821 556h1v1h-1zM1823 556h2v1h-2zM1826 557h1v1h-1zM1845 557h8v1h-8zM1849 556h2v1h-2zM1854 557h7v1h-7zM1801 563h11v1h-11zM1801 562h1v1h-1zM1807 562h5v1h-5zM1813 563h11v1h-11zM1813 562h1v1h-1zM1821 562h1v1h-1zM1825 563h4v1h-4zM1826 562h2v1h-2zM1830 563h3v1h-3zM1830 562h1v1h-1zM1832 562h1v1h-1zM1802 565h8v1h-8zM1806 564h1v1h-1zM1808 564h1v1h-1zM1811 565h5v1h-5zM1817 565h8v1h-8zM1820 564h1v1h-1zM1824 564h1v1h-1zM1825 565h1v1h-1zM1802 567h5v1h-5zM1803 566h2v1h-2zM1806 566h1v1h-1zM1808 567h8v1h-8zM1808 566h1v1h-1zM1812 566h1v1h-1zM1814 566h1v1h-1zM1817 567h7v1h-7zM1817 566h1v1h-1zM1825 567h5v1h-5zM1826 566h1v1h-1zM1828 566h2v1h-2zM1843 567h9v1h-9zM1843 566h1v1h-1zM1846 566h1v1h-1zM1849 566h1v1h-1zM1851 566h1v1h-1zM1798 569h1v1h-1zM1798 568h1v1h-1zM1804 575h8v1h-8zM1804 574h1v1h-1zM1807 574h1v1h-1zM1813 575h3v1h-3zM1813 574h1v1h-1zM1817 575h2v1h-2zM1820 575h4v1h-4zM1820 574h4v1h-4zM1810 577h7v1h-7zM1811 576h1v1h-1zM1818 577h5v1h-5zM1818 576h1v1h-1zM1822 576h1v1h-1zM1810 581h5v1h-5zM1810 580h1v1h-1zM1814 580h1v1h-1zM1821 581h8v1h-8zM1825 580h2v1h-2zM1828 580h1v1h-1zM1817 585h10v1h-10zM1822 584h1v1h-1zM1824 584h3v1h-3zM1828 585h5v1h-5zM1828 584h1v1h-1zM1830 584h1v1h-1zM1798 587h1v1h-1zM1798 586h1v1h-1zM1806 595h7v1h-7zM1807 594h2v1h-2zM1814 595h7v1h-7zM1822 595h11v1h-11zM1823 594h1v1h-1zM1826 594h2v1h-2zM1829 594h1v1h-1zM1834 595h5v1h-5zM1837 594h1v1h-1zM1839 595h1v1h-1zM1817 597h4v1h-4zM1820 596h1v1h-1zM1822 597h6v1h-6zM1823 596h1v1h-1zM1825 596h2v1h-2zM1829 597h1v1h-1zM1818 599h6v1h-6zM1818 598h1v1h-1zM1822 598h2v1h-2zM1854 599h8v1h-8zM1858 598h4v1h-4zM1802 601h2v1h-2zM1818 603h2v1h-2zM1819 602h1v1h-1zM1802 605h6v1h-6zM1804 604h1v1h-1zM1807 604h1v1h-1zM1809 605h5v1h-5zM1815 605h4v1h-4zM1820 605h9v1h-9zM1820 604h2v1h-2zM1823 604h5v1h-5zM1804 615h13v1h-13zM1805 614h1v1h-1zM1808 614h1v1h-1zM1817 615h1v1h-1zM1817 614h1v1h-1zM1818 615h10v1h-10zM1827 614h1v1h-1zM1828 615h1v1h-1zM1833 615h1v1h-1zM1835 615h10v1h-10zM1844 614h1v1h-1zM1845 615h1v1h-1zM1850 615h1v1h-1zM1852 615h15v1h-15zM1855 614h1v1h-1zM1867 615h1v1h-1zM1873 615h1v1h-1zM1879 615h1v1h-1zM1881 615h15v1h-15zM1884 614h1v1h-1zM1895 614h1v1h-1zM1896 615h1v1h-1zM1902 615h1v1h-1zM1801 623h10v1h-10zM1810 622h1v1h-1zM1819 623h15v1h-15zM1819 622h7v1h-7zM1827 622h7v1h-7zM1834 623h1v1h-1zM1809 625h1v1h-1zM1809 624h1v1h-1zM1817 625h1v1h-1zM1838 625h1v1h-1zM1838 624h1v1h-1zM1839 625h10v1h-10zM1848 624h1v1h-1zM1849 625h1v1h-1zM1849 624h1v1h-1zM1868 625h1v1h-1zM1868 624h1v1h-1zM1873 625h1v1h-1zM1874 625h4v1h-4zM1878 625h1v1h-1zM1878 624h1v1h-1zM1879 625h15v1h-15zM1879 624h7v1h-7zM1887 624h7v1h-7zM1894 625h1v1h-1zM1895 625h4v1h-4zM1895 624h1v1h-1zM1899 625h1v1h-1zM1899 624h1v1h-1zM1900 625h1v1h-1zM1900 624h1v1h-1zM1901 625h1v1h-1zM1901 624h1v1h-1zM1902 625h1v1h-1zM1902 624h1v1h-1zM1904 625h1v1h-1zM1904 624h1v1h-1zM1801 631h15v1h-15zM1804 630h1v1h-1zM1816 631h1v1h-1zM1802 633h15v1h-15zM1805 632h1v1h-1zM1818 633h1v1h-1zM1820 633h15v1h-15zM1823 632h1v1h-1zM1835 633h1v1h-1zM1836 633h5v1h-5zM1837 632h1v1h-1zM1841 633h1v1h-1zM1841 632h1v1h-1zM1842 633h1v1h-1zM1842 632h1v1h-1zM1843 633h1v1h-1zM1844 633h5v1h-5zM1844 632h1v1h-1zM1849 633h1v1h-1zM1849 632h1v1h-1zM1850 633h1v1h-1zM1850 632h1v1h-1zM1809 635h15v1h-15zM1812 634h1v1h-1zM1824 635h1v1h-1zM1825 635h7v1h-7zM1828 634h1v1h-1zM1832 635h1v1h-1zM1832 634h1v1h-1zM1833 635h1v1h-1zM1833 634h1v1h-1zM1834 635h1v1h-1zM1813 637h1v1h-1zM1813 636h1v1h-1zM1821 637h1v1h-1zM1870 637h1v1h-1zM1870 636h1v1h-1zM1805 639h3v1h-3zM1805 638h1v1h-1zM1808 639h1v1h-1zM1808 638h1v1h-1zM1809 639h15v1h-15zM1812 638h1v1h-1zM1824 639h1v1h-1zM1824 638h1v1h-1zM1826 639h1v1h-1zM1830 639h1v1h-1zM1813 641h1v1h-1zM1813 640h1v1h-1zM1821 641h1v1h-1zM1863 641h1v1h-1zM1863 640h1v1h-1zM1801 645h15v1h-15zM1804 644h1v1h-1zM1815 644h1v1h-1zM1816 645h1v1h-1zM1805 647h3v1h-3zM1805 646h1v1h-1zM1808 647h1v1h-1zM1808 646h1v1h-1zM1809 647h15v1h-15zM1812 646h1v1h-1zM1823 646h1v1h-1zM1824 647h1v1h-1zM1824 646h1v1h-1zM1826 647h1v1h-1zM1829 647h1v1h-1zM1813 649h1v1h-1zM1813 648h1v1h-1zM1821 649h1v1h-1zM1863 649h1v1h-1zM1863 648h1v1h-1zM1805 651h3v1h-3zM1805 650h1v1h-1zM1808 651h1v1h-1zM1808 650h1v1h-1zM1809 651h15v1h-15zM1812 650h1v1h-1zM1823 650h1v1h-1zM1824 651h1v1h-1zM1824 650h1v1h-1zM1826 651h1v1h-1zM1831 651h1v1h-1zM1813 653h1v1h-1zM1813 652h1v1h-1zM1821 653h1v1h-1zM1864 653h1v1h-1zM1864 652h1v1h-1zM1805 657h3v1h-3zM1808 657h1v1h-1zM1808 656h1v1h-1zM1809 657h1v1h-1zM1814 657h15v1h-15zM1817 656h1v1h-1zM1828 656h1v1h-1zM1834 657h1v1h-1zM1839 657h1v1h-1zM1839 656h1v1h-1zM1843 657h1v1h-1zM1845 657h1v1h-1zM1845 656h1v1h-1zM1851 657h1v1h-1zM1851 656h1v1h-1zM1852 657h1v1h-1zM1852 656h1v1h-1zM1857 657h1v1h-1zM1862 657h1v1h-1zM1813 659h1v1h-1zM1813 658h1v1h-1zM1821 659h1v1h-1zM1894 659h1v1h-1zM1894 658h1v1h-1zM1798 665h8v1h-8zM1802 664h1v1h-1zM1807 665h1v1h-1zM1815 665h17v1h-17zM1826 664h1v1h-1zM1832 665h1v1h-1zM1833 665h8v1h-8zM1833 664h1v1h-1zM1836 664h1v1h-1zM1841 665h1v1h-1zM1841 664h1v1h-1zM1842 665h1v1h-1zM1842 664h1v1h-1zM1814 667h1v1h-1zM1816 667h10v1h-10zM1825 666h1v1h-1zM1826 667h1v1h-1zM1811 669h1v1h-1zM1813 669h10v1h-10zM1822 668h1v1h-1zM1823 669h1v1h-1zM1810 671h1v1h-1zM1798 673h1v1h-1zM1798 672h1v1h-1zM1799 673h1v1h-1zM1799 672h1v1h-1zM1801 677h8v1h-8zM1805 676h1v1h-1zM1809 677h1v1h-1zM1809 679h1v1h-1zM1809 678h1v1h-1zM1813 681h1v1h-1zM1834 681h1v1h-1zM1834 680h1v1h-1zM1835 681h10v1h-10zM1844 680h1v1h-1zM1845 681h1v1h-1zM1845 680h1v1h-1zM1897 681h1v1h-1zM1824 683h1v1h-1zM1826 683h8v1h-8zM1830 682h1v1h-1zM1802 685h1v1h-1zM1802 684h1v1h-1zM1801 691h10v1h-10zM1810 690h1v1h-1zM1815 691h27v1h-27zM1815 690h8v1h-8zM1824 690h9v1h-9zM1834 690h8v1h-8zM1842 691h1v1h-1zM1815 695h32v1h-32zM1816 694h1v1h-1zM1819 694h1v1h-1zM1827 694h1v1h-1zM1833 694h1v1h-1zM1847 695h1v1h-1zM1847 694h1v1h-1zM1848 695h10v1h-10zM1857 694h1v1h-1zM1858 695h1v1h-1zM1860 695h10v1h-10zM1869 694h1v1h-1zM1870 695h1v1h-1zM1872 695h15v1h-15zM1875 694h1v1h-1zM1886 694h1v1h-1zM1887 695h1v1h-1zM1887 694h1v1h-1zM1811 703h31v1h-31zM1819 702h1v1h-1zM1823 702h1v1h-1zM1828 702h1v1h-1zM1842 703h1v1h-1zM1842 702h1v1h-1zM1843 703h10v1h-10zM1852 702h1v1h-1zM1853 703h1v1h-1zM1853 702h1v1h-1zM1854 703h1v1h-1zM1809 705h1v1h-1zM1809 704h1v1h-1zM1817 705h1v1h-1zM1844 705h1v1h-1zM1844 704h1v1h-1zM1845 705h10v1h-10zM1854 704h1v1h-1zM1855 705h1v1h-1zM1855 704h1v1h-1zM1867 705h1v1h-1zM1867 704h1v1h-1zM1798 709h6v1h-6zM1801 708h1v1h-1zM1805 709h1v1h-1zM1807 709h15v1h-15zM1807 708h7v1h-7zM1815 708h7v1h-7zM1822 709h1v1h-1zM1822 708h1v1h-1zM1823 709h10v1h-10zM1832 708h1v1h-1zM1833 709h1v1h-1zM1833 708h1v1h-1zM1798 715h10v1h-10zM1802 714h1v1h-1zM1804 714h1v1h-1zM1807 714h1v1h-1zM1809 715h1v1h-1zM1811 715h10v1h-10zM1811 714h1v1h-1zM1814 714h1v1h-1zM1820 714h1v1h-1zM1821 715h1v1h-1zM1821 714h1v1h-1zM1822 715h10v1h-10zM1831 714h1v1h-1zM1832 715h1v1h-1zM1832 714h1v1h-1zM1798 717h7v1h-7zM1798 716h2v1h-2zM1806 717h1v1h-1zM1808 717h15v1h-15zM1811 716h1v1h-1zM1827 717h15v1h-15zM1830 716h1v1h-1zM1848 717h16v1h-16zM1852 716h1v1h-1zM1857 716h2v1h-2zM1864 717h1v1h-1zM1864 716h1v1h-1zM1872 717h1v1h-1zM1872 716h1v1h-1zM1873 717h10v1h-10zM1877 716h1v1h-1zM1879 716h1v1h-1zM1882 716h1v1h-1zM1883 717h1v1h-1zM1883 716h1v1h-1zM1885 717h1v1h-1zM1885 716h1v1h-1zM1798 719h11v1h-11zM1798 718h2v1h-2zM1808 718h1v1h-1zM1810 719h1v1h-1zM1812 719h15v1h-15zM1815 718h1v1h-1zM1826 718h1v1h-1zM1831 719h15v1h-15zM1834 718h1v1h-1zM1845 718h1v1h-1zM1852 719h17v1h-17zM1858 718h1v1h-1zM1868 718h1v1h-1zM1869 719h1v1h-1zM1869 718h1v1h-1zM1870 719h1v1h-1zM1870 718h1v1h-1zM1798 723h6v1h-6zM1798 722h1v1h-1zM1804 723h1v1h-1zM1805 723h4v1h-4zM1807 722h1v1h-1zM1809 723h1v1h-1zM1809 722h1v1h-1zM1828 723h1v1h-1zM1828 722h1v1h-1zM1829 723h10v1h-10zM1838 722h1v1h-1zM1839 723h1v1h-1zM1839 722h1v1h-1zM1850 723h1v1h-1zM1850 722h1v1h-1zM1851 723h7v1h-7zM1851 722h2v1h-2zM1858 723h1v1h-1zM1858 722h1v1h-1zM1870 723h1v1h-1zM1870 722h1v1h-1zM1871 723h11v1h-11zM1871 722h2v1h-2zM1881 722h1v1h-1zM1882 723h1v1h-1zM1882 722h1v1h-1zM1883 723h1v1h-1zM1885 723h1v1h-1zM1885 722h1v1h-1zM1886 723h1v1h-1zM1886 722h1v1h-1zM1899 723h1v1h-1zM1899 722h1v1h-1zM1904 723h1v1h-1zM1904 722h1v1h-1zM1905 723h1v1h-1zM1801 729h10v1h-10zM1810 728h1v1h-1zM1815 729h1v1h-1zM1815 728h1v1h-1zM1823 729h1v1h-1zM1837 729h1v1h-1zM1848 729h1v1h-1zM1863 729h1v1h-1zM1863 728h1v1h-1zM1864 729h1v1h-1zM1802 731h7v1h-7zM1810 731h1v1h-1zM1818 731h20v1h-20zM1822 730h1v1h-1zM1830 730h1v1h-1zM1832 730h1v1h-1zM1834 730h1v1h-1zM1838 731h1v1h-1zM1838 730h1v1h-1zM1839 731h10v1h-10zM1848 730h1v1h-1zM1849 731h1v1h-1zM1851 731h10v1h-10zM1860 730h1v1h-1zM1861 731h1v1h-1zM1863 731h7v1h-7zM1863 730h2v1h-2zM1870 731h1v1h-1zM1872 731h11v1h-11zM1872 730h2v1h-2zM1882 730h1v1h-1zM1883 731h1v1h-1zM1883 730h1v1h-1zM1802 733h6v1h-6zM1802 732h1v1h-1zM1808 733h1v1h-1zM1809 733h4v1h-4zM1811 732h1v1h-1zM1813 733h1v1h-1zM1813 732h1v1h-1zM1847 733h1v1h-1zM1847 732h1v1h-1zM1848 733h7v1h-7zM1855 733h1v1h-1zM1855 732h1v1h-1zM1857 733h1v1h-1zM1857 732h1v1h-1zM1809 735h7v1h-7zM1816 735h1v1h-1zM1813 737h1v1h-1zM1813 736h1v1h-1zM1821 737h1v1h-1zM1859 737h1v1h-1zM1859 736h1v1h-1zM1860 737h10v1h-10zM1869 736h1v1h-1zM1870 737h1v1h-1zM1870 736h1v1h-1zM1872 737h1v1h-1zM1872 736h1v1h-1zM1798 743h11v1h-11zM1801 742h1v1h-1zM1804 742h1v1h-1zM1807 742h1v1h-1zM1810 743h1v1h-1zM1812 743h1v1h-1zM1812 742h1v1h-1zM1808 745h1v1h-1zM1821 745h1v1h-1zM1808 747h1v1h-1zM1810 747h6v1h-6zM1813 746h1v1h-1zM1816 747h1v1h-1zM1816 746h1v1h-1zM1823 747h1v1h-1zM1823 746h1v1h-1zM1824 747h1v1h-1zM1812 749h1v1h-1zM1814 749h7v1h-7zM1814 748h2v1h-2zM1821 749h1v1h-1zM1812 751h1v1h-1zM1814 751h11v1h-11zM1814 750h2v1h-2zM1824 750h1v1h-1zM1825 751h1v1h-1zM1812 753h1v1h-1zM1814 753h7v1h-7zM1814 752h2v1h-2zM1798 755h1v1h-1zM1798 754h1v1h-1zM1798 761h7v1h-7zM1800 760h1v1h-1zM1802 760h1v1h-1zM1804 760h1v1h-1zM1806 761h11v1h-11zM1807 760h4v1h-4zM1813 760h1v1h-1zM1818 761h6v1h-6zM1819 760h1v1h-1zM1825 761h6v1h-6zM1827 760h1v1h-1zM1832 761h4v1h-4zM1832 760h1v1h-1zM1837 761h9v1h-9zM1837 760h1v1h-1zM1847 761h8v1h-8zM1847 760h3v1h-3zM1854 760h1v1h-1zM1856 761h10v1h-10zM1863 760h1v1h-1zM1798 767h3v1h-3zM1799 766h1v1h-1zM1802 767h2v1h-2zM1805 767h9v1h-9zM1809 766h1v1h-1zM1811 766h1v1h-1zM1813 766h1v1h-1zM1817 769h9v1h-9zM1817 768h3v1h-3zM1818 771h5v1h-5zM1822 770h1v1h-1zM1825 773h5v1h-5zM1825 772h1v1h-1zM1827 772h1v1h-1zM1814 775h10v1h-10zM1815 774h1v1h-1zM1817 774h3v1h-3zM1822 774h1v1h-1zM1825 775h5v1h-5zM1825 774h2v1h-2zM1819 777h4v1h-4zM1819 776h1v1h-1zM1817 779h4v1h-4zM1820 778h1v1h-1zM1814 781h6v1h-6zM1821 781h1v1h-1zM1821 783h10v1h-10zM1821 782h3v1h-3zM1826 782h2v1h-2zM1817 785h8v1h-8zM1824 784h1v1h-1zM1825 787h5v1h-5zM1825 786h1v1h-1zM1831 787h5v1h-5zM1831 786h1v1h-1zM1833 786h3v1h-3zM1837 787h4v1h-4zM1839 786h1v1h-1zM1802 789h2v1h-2zM1798 795h1v1h-1zM1798 794h1v1h-1zM1804 799h6v1h-6zM1808 798h1v1h-1zM1811 799h7v1h-7zM1813 798h1v1h-1zM1817 798h1v1h-1zM1819 799h7v1h-7zM1820 798h1v1h-1zM1822 798h1v1h-1zM1824 798h2v1h-2zM1827 799h4v1h-4zM1827 798h1v1h-1zM1831 799h1v1h-1zM1831 798h1v1h-1zM1798 801h11v1h-11zM1799 800h1v1h-1zM1802 800h1v1h-1zM1804 800h3v1h-3zM1810 801h8v1h-8zM1812 800h1v1h-1zM1814 800h2v1h-2zM1817 800h1v1h-1zM1819 801h4v1h-4zM1824 801h11v1h-11zM1829 800h1v1h-1zM1833 800h1v1h-1zM1836 801h6v1h-6zM1842 801h1v1h-1zM1842 800h1v1h-1zM1803 807h5v1h-5zM1803 806h2v1h-2zM1807 806h1v1h-1zM1809 807h4v1h-4zM1809 806h1v1h-1zM1814 807h2v1h-2zM1814 806h2v1h-2zM1817 807h7v1h-7zM1817 806h1v1h-1zM1819 806h4v1h-4zM1811 811h9v1h-9zM1813 810h1v1h-1zM1815 810h1v1h-1zM1818 810h1v1h-1zM1827 811h3v1h-3zM1827 810h1v1h-1zM1829 810h1v1h-1zM1822 813h3v1h-3zM1823 812h2v1h-2zM1817 815h9v1h-9zM1818 814h4v1h-4zM1825 814h1v1h-1zM1827 815h9v1h-9zM1831 814h1v1h-1zM1834 814h1v1h-1zM1854 815h1v1h-1zM1798 819h1v1h-1zM1808 827h8v1h-8zM1810 826h1v1h-1zM1817 827h7v1h-7zM1818 826h1v1h-1zM1823 826h1v1h-1zM1825 827h10v1h-10zM1826 826h1v1h-1zM1828 826h1v1h-1zM1830 826h2v1h-2zM1834 826h1v1h-1zM1836 827h5v1h-5zM1840 826h1v1h-1zM1825 829h5v1h-5zM1825 828h2v1h-2zM1828 828h1v1h-1zM1824 831h3v1h-3zM1824 830h1v1h-1zM1826 830h1v1h-1zM1828 831h4v1h-4zM1828 830h1v1h-1zM1816 833h4v1h-4zM1821 833h3v1h-3zM1821 832h1v1h-1zM1823 832h1v1h-1zM1825 833h3v1h-3zM1827 832h1v1h-1zM1802 835h2v1h-2zM1803 834h1v1h-1zM1818 837h2v1h-2zM1802 839h9v1h-9zM1804 838h1v1h-1zM1806 838h1v1h-1zM1808 838h2v1h-2zM1812 839h8v1h-8zM1813 838h2v1h-2zM1816 838h1v1h-1zM1819 838h1v1h-1zM1821 839h6v1h-6zM1822 838h1v1h-1zM1856 839h3v1h-3zM1856 838h2v1h-2zM1805 843h2v1h-2zM1808 843h2v1h-2zM1808 842h1v1h-1zM1811 843h6v1h-6zM1811 842h1v1h-1zM1809 849h4v1h-4zM1812 848h1v1h-1zM1814 849h8v1h-8zM1814 848h1v1h-1zM1817 848h1v1h-1zM1837 849h2v1h-2zM1838 848h1v1h-1zM1798 851h4v1h-4zM1799 850h2v1h-2zM1803 851h5v1h-5zM1805 850h3v1h-3zM1809 851h4v1h-4zM1809 850h1v1h-1zM1812 850h1v1h-1zM1798 853h2v1h-2zM1798 852h1v1h-1zM1801 853h6v1h-6zM1805 852h1v1h-1zM1808 853h4v1h-4zM1798 855h2v1h-2zM1798 854h1v1h-1zM1801 855h4v1h-4zM1801 854h1v1h-1zM1803 854h2v1h-2zM1806 855h5v1h-5zM1808 854h1v1h-1zM1810 854h1v1h-1zM1798 857h5v1h-5zM1801 856h2v1h-2zM1804 857h9v1h-9zM1804 856h2v1h-2zM1809 856h1v1h-1zM1813 857h1v1h-1zM1798 859h10v1h-10zM1803 858h1v1h-1zM1809 859h2v1h-2zM1810 858h1v1h-1zM1812 859h1v1h-1zM1824 859h3v1h-3zM1825 858h1v1h-1zM1828 859h4v1h-4zM1804 863h8v1h-8zM1805 862h1v1h-1zM1807 862h2v1h-2zM1813 863h9v1h-9zM1816 862h4v1h-4zM1821 862h1v1h-1zM1801 869h2v1h-2zM1802 868h1v1h-1zM1804 869h10v1h-10zM1808 868h1v1h-1zM1811 868h3v1h-3zM1815 869h9v1h-9zM1815 868h2v1h-2zM1822 868h1v1h-1zM1825 869h5v1h-5zM1825 868h1v1h-1zM1827 868h1v1h-1zM1829 868h1v1h-1zM1804 875h2v1h-2zM1804 874h1v1h-1zM1807 875h4v1h-4zM1807 874h1v1h-1zM1810 874h1v1h-1zM1812 875h9v1h-9zM1813 874h2v1h-2zM1816 874h2v1h-2zM1819 874h2v1h-2zM1822 875h3v1h-3zM1823 874h1v1h-1zM1826 875h1v1h-1zM1804 881h6v1h-6zM1805 880h2v1h-2zM1808 880h1v1h-1zM1811 881h5v1h-5zM1811 880h1v1h-1zM1813 880h1v1h-1zM1815 880h1v1h-1zM1817 881h1v1h-1zM1817 880h1v1h-1zM1832 897h8v1h-8zM1832 896h1v1h-1zM1834 896h1v1h-1zM1836 896h1v1h-1zM1838 896h1v1h-1zM1850 897h3v1h-3zM1854 897h6v1h-6zM1855 896h1v1h-1zM1861 897h8v1h-8zM1865 896h1v1h-1zM1868 896h1v1h-1zM1805 903h9v1h-9zM1805 902h1v1h-1zM1810 902h1v1h-1zM1815 903h4v1h-4zM1815 902h3v1h-3zM1820 903h2v1h-2zM1820 902h1v1h-1zM1802 911h3v1h-3zM1804 910h1v1h-1zM1806 911h7v1h-7zM1806 910h1v1h-1zM1809 910h2v1h-2zM1812 910h1v1h-1zM1814 911h8v1h-8zM1814 910h2v1h-2zM1821 910h1v1h-1zM1823 911h1v1h-1zM1823 910h1v1h-1zM1808 915h11v1h-11zM1812 914h1v1h-1zM1814 914h1v1h-1zM1816 914h3v1h-3zM1820 915h6v1h-6zM1821 914h1v1h-1zM1823 914h1v1h-1zM1825 914h1v1h-1zM1827 915h8v1h-8zM1827 914h1v1h-1zM1829 914h1v1h-1zM1833 914h1v1h-1zM1836 915h6v1h-6zM1836 914h2v1h-2zM1840 914h2v1h-2zM1801 923h4v1h-4zM1802 922h2v1h-2zM1806 923h9v1h-9zM1808 922h1v1h-1zM1816 923h3v1h-3zM1816 922h1v1h-1zM1818 922h1v1h-1zM1820 923h7v1h-7zM1821 922h1v1h-1zM1826 922h1v1h-1zM1828 923h4v1h-4zM1830 922h1v1h-1zM1833 923h9v1h-9zM1833 922h1v1h-1zM1836 922h1v1h-1zM1842 923h1v1h-1zM1814 925h10v1h-10zM1825 925h1v1h-1zM1825 924h1v1h-1zM1819 927h5v1h-5zM1819 926h1v1h-1zM1814 929h7v1h-7zM1798 931h2v1h-2zM1802 935h10v1h-10zM1802 934h1v1h-1zM1804 934h1v1h-1zM1806 934h1v1h-1zM1809 934h1v1h-1zM1813 935h1v1h-1zM1813 934h1v1h-1zM1798 941h9v1h-9zM1800 940h3v1h-3zM1805 940h2v1h-2zM1808 941h3v1h-3zM1808 940h1v1h-1zM1812 941h8v1h-8zM1815 940h2v1h-2zM1819 940h1v1h-1zM1821 941h9v1h-9zM1821 940h1v1h-1zM1826 940h1v1h-1zM1828 940h2v1h-2zM1831 941h4v1h-4zM1836 941h2v1h-2zM1837 940h1v1h-1zM1839 941h5v1h-5zM1839 940h2v1h-2zM1843 940h1v1h-1zM1798 943h7v1h-7zM1803 942h1v1h-1zM1806 943h2v1h-2zM1806 942h2v1h-2zM1809 943h3v1h-3zM1813 943h7v1h-7zM1818 942h1v1h-1zM1821 943h8v1h-8zM1822 942h1v1h-1zM1830 943h4v1h-4zM1830 942h2v1h-2zM1805 949h3v1h-3zM1805 948h1v1h-1zM1807 948h1v1h-1zM1809 949h10v1h-10zM1813 948h2v1h-2zM1817 948h1v1h-1zM1820 949h10v1h-10zM1822 948h1v1h-1zM1825 948h1v1h-1zM1831 949h6v1h-6zM1833 948h2v1h-2zM1837 949h1v1h-1zM1802 951h2v1h-2zM1802 950h1v1h-1zM1805 951h5v1h-5zM1805 950h3v1h-3zM1811 951h11v1h-11zM1811 950h1v1h-1zM1813 950h2v1h-2zM1816 950h1v1h-1zM1823 951h1v1h-1zM1847 951h11v1h-11zM1847 950h1v1h-1zM1852 950h1v1h-1zM1813 957h11v1h-11zM1816 956h1v1h-1zM1818 956h2v1h-2zM1821 956h1v1h-1zM1825 957h3v1h-3zM1826 956h1v1h-1zM1829 957h1v1h-1zM1810 959h2v1h-2zM1813 959h5v1h-5zM1816 958h2v1h-2zM1819 959h4v1h-4zM1824 959h3v1h-3zM1825 958h1v1h-1zM1827 959h1v1h-1zM1827 958h1v1h-1zM1819 961h7v1h-7zM1825 960h1v1h-1zM1826 963h4v1h-4zM1828 962h2v1h-2zM1825 965h1v1h-1zM1813 969h8v1h-8zM1813 968h2v1h-2zM1820 968h1v1h-1zM1822 969h6v1h-6zM1822 968h1v1h-1zM1825 968h1v1h-1zM1829 969h6v1h-6zM1833 968h1v1h-1zM1836 969h1v1h-1zM1836 968h1v1h-1zM1814 971h7v1h-7zM1816 970h2v1h-2zM1822 971h3v1h-3zM1822 970h2v1h-2zM1826 971h8v1h-8zM1832 970h2v1h-2zM1835 971h7v1h-7zM1836 970h1v1h-1zM1839 970h1v1h-1zM1841 970h1v1h-1zM1853 971h9v1h-9zM1853 970h1v1h-1zM1856 970h1v1h-1zM1810 973h1v1h-1zM1811 977h7v1h-7zM1817 976h1v1h-1zM1819 977h6v1h-6zM1819 976h2v1h-2zM1817 979h9v1h-9zM1818 978h1v1h-1zM1821 978h1v1h-1zM1823 978h1v1h-1zM1827 979h2v1h-2zM1830 979h7v1h-7zM1831 978h2v1h-2zM1836 978h1v1h-1zM1814 981h3v1h-3zM1816 980h1v1h-1zM1818 981h2v1h-2zM1819 980h1v1h-1zM1821 981h11v1h-11zM1821 980h1v1h-1zM1823 980h1v1h-1zM1828 980h1v1h-1zM1830 980h2v1h-2zM1833 981h7v1h-7zM1834 980h1v1h-1zM1836 980h1v1h-1zM1838 980h1v1h-1zM1841 981h5v1h-5zM1843 980h1v1h-1zM1810 983h1v1h-1zM1813 985h5v1h-5zM1813 984h1v1h-1zM1815 984h1v1h-1zM1819 985h6v1h-6zM1819 984h5v1h-5zM1826 985h11v1h-11zM1827 984h1v1h-1zM1830 984h2v1h-2zM1835 984h1v1h-1zM1814 987h8v1h-8zM1814 986h3v1h-3zM1818 986h1v1h-1zM1823 987h7v1h-7zM1823 986h1v1h-1zM1827 986h2v1h-2zM1831 987h8v1h-8zM1831 986h1v1h-1zM1833 986h1v1h-1zM1837 986h2v1h-2zM1840 987h3v1h-3zM1810 989h1v1h-1zM1810 993h7v1h-7zM1810 992h2v1h-2zM1818 993h2v1h-2zM1821 993h11v1h-11zM1824 992h2v1h-2zM1827 992h1v1h-1zM1829 992h1v1h-1zM1833 993h1v1h-1zM1810 995h2v1h-2zM1810 994h1v1h-1zM1813 995h9v1h-9zM1814 994h2v1h-2zM1818 994h1v1h-1zM1823 995h8v1h-8zM1823 994h1v1h-1zM1825 994h1v1h-1zM1827 994h1v1h-1zM1830 994h1v1h-1zM1832 995h1v1h-1zM1832 994h1v1h-1zM1834 995h4v1h-4zM1835 994h3v1h-3zM1815 997h10v1h-10zM1822 996h1v1h-1zM1826 997h3v1h-3zM1826 996h1v1h-1zM1828 996h1v1h-1zM1830 997h3v1h-3zM1832 996h1v1h-1zM1834 997h3v1h-3zM1836 996h1v1h-1zM1814 999h10v1h-10zM1817 998h2v1h-2zM1821 998h1v1h-1zM1825 999h3v1h-3zM1829 999h5v1h-5zM1830 998h2v1h-2zM1835 999h3v1h-3zM1836 998h1v1h-1zM1839 999h4v1h-4zM1840 998h2v1h-2zM1853 999h4v1h-4zM1853 998h3v1h-3zM1870 999h9v1h-9zM1870 998h2v1h-2zM1875 998h2v1h-2zM1878 998h1v1h-1zM1810 1001h1v1h-1zM1810 1005h7v1h-7zM1811 1004h1v1h-1zM1818 1005h5v1h-5zM1824 1005h2v1h-2zM1827 1005h7v1h-7zM1830 1004h1v1h-1zM1833 1004h1v1h-1zM1835 1005h3v1h-3zM1810 1007h7v1h-7zM1811 1006h1v1h-1zM1813 1006h1v1h-1zM1816 1006h1v1h-1zM1818 1007h8v1h-8zM1819 1006h1v1h-1zM1821 1006h1v1h-1zM1827 1007h3v1h-3zM1828 1006h2v1h-2zM1825 1009h9v1h-9zM1825 1008h3v1h-3zM1832 1008h1v1h-1zM1846 1009h5v1h-5zM1850 1008h1v1h-1z"/><path fill="#b4b4b4" fill-opacity="0.26" d="M1816 92h9v2h-9zM1826 92h9v2h-9zM1836 92h10v2h-10zM1846 92h1v2h-1zM1821 96h4v2h-4zM1826 96h3v2h-3zM1830 96h9v2h-9zM1840 96h1v2h-1zM1827 98h4v2h-4zM1832 98h3v2h-3zM1836 98h9v2h-9zM1846 98h5v2h-5zM1857 98h6v2h-6zM1864 98h3v2h-3zM1877 98h6v2h-6zM1840 100h4v2h-4zM1853 100h4v2h-4zM1858 100h8v2h-8zM1814 102h1v2h-1zM1815 104h2v2h-2zM1818 104h2v2h-2zM1821 104h5v2h-5zM1827 104h5v2h-5zM1814 106h8v2h-8zM1823 106h8v2h-8zM1832 106h3v2h-3zM1836 106h11v2h-11zM1848 106h5v2h-5zM1854 106h5v2h-5zM1810 108h1v2h-1zM1810 112h10v2h-10zM1821 112h5v2h-5zM1827 112h7v2h-7zM1810 114h4v2h-4zM1815 114h8v2h-8zM1824 114h8v2h-8zM1833 114h3v2h-3zM1837 114h8v2h-8zM1845 114h1v2h-1zM1854 114h12v2h-12zM1867 114h3v2h-3zM1899 114h5v2h-5zM1817 116h6v2h-6zM1824 116h8v2h-8zM1814 118h5v2h-5zM1820 118h2v2h-2zM1823 118h11v2h-11zM1835 118h7v2h-7zM1843 118h7v2h-7zM1890 118h9v2h-9zM1900 118h5v2h-5zM1810 120h1v2h-1zM1810 124h4v2h-4zM1815 124h10v2h-10zM1826 124h5v2h-5zM1832 124h6v2h-6zM1810 130h8v2h-8zM1819 130h11v2h-11zM1830 130h1v2h-1zM1821 132h5v2h-5zM1832 132h10v2h-10zM1848 132h1v2h-1zM1810 134h8v2h-8zM1819 134h9v2h-9zM1836 134h5v2h-5zM1819 136h3v2h-3zM1823 136h10v2h-10zM1834 136h7v2h-7zM1842 136h3v2h-3zM1846 136h4v2h-4zM1813 140h7v2h-7zM1821 140h2v2h-2zM1824 140h4v2h-4zM1829 140h2v2h-2zM1814 142h8v2h-8zM1823 142h2v2h-2zM1826 142h9v2h-9zM1836 142h11v2h-11zM1848 142h2v2h-2zM1851 142h5v2h-5zM1810 144h1v2h-1zM1817 150h3v2h-3zM1820 150h1v2h-1zM1813 154h2v2h-2zM1816 154h6v2h-6zM1823 154h8v2h-8zM1810 156h2v2h-2zM1813 156h5v2h-5zM1819 156h3v2h-3zM1823 156h6v2h-6zM1843 156h10v2h-10zM1814 158h7v2h-7zM1810 166h2v2h-2zM1813 166h6v2h-6zM1820 166h7v2h-7zM1873 166h1v2h-1zM1814 168h2v2h-2zM1817 168h3v2h-3zM1820 168h1v2h-1zM1806 172h10v2h-10zM1817 172h7v2h-7zM1825 172h2v2h-2zM1828 172h6v2h-6zM1835 172h10v2h-10zM1862 172h5v2h-5zM1822 176h2v2h-2zM1806 178h4v2h-4zM1811 178h8v2h-8zM1820 178h5v2h-5zM1826 178h3v2h-3zM1830 178h8v2h-8zM1839 178h1v2h-1zM1807 182h9v2h-9zM1817 182h7v2h-7zM1825 182h5v2h-5zM1830 182h1v2h-1zM1809 184h8v2h-8zM1818 184h3v2h-3zM1822 184h6v2h-6zM1829 184h9v2h-9zM1798 188h2v2h-2zM1801 188h9v2h-9zM1811 188h7v2h-7zM1819 188h7v2h-7zM1860 188h3v2h-3zM1805 190h5v2h-5zM1809 200h7v2h-7zM1824 200h5v2h-5zM1830 200h7v2h-7zM1845 200h4v2h-4zM1860 200h2v2h-2zM1811 202h4v2h-4zM1798 206h9v2h-9zM1808 206h4v2h-4zM1813 206h7v2h-7zM1821 206h8v2h-8zM1830 206h4v2h-4zM1798 208h10v2h-10zM1809 208h7v2h-7zM1817 208h3v2h-3zM1821 208h5v2h-5zM1827 208h8v2h-8zM1836 208h8v2h-8zM1798 214h7v2h-7zM1806 214h7v2h-7zM1814 214h5v2h-5zM1820 214h11v2h-11zM1798 216h8v2h-8zM1807 216h10v2h-10zM1818 216h11v2h-11zM1830 216h4v2h-4zM1835 216h10v2h-10zM1846 216h5v2h-5zM1852 216h10v2h-10zM1863 216h5v2h-5zM1798 222h11v2h-11zM1810 222h11v2h-11zM1822 222h4v2h-4zM1827 222h5v2h-5zM1832 222h1v2h-1zM1798 224h4v2h-4zM1803 224h7v2h-7zM1811 224h9v2h-9zM1798 230h4v2h-4zM1803 230h3v2h-3zM1807 230h6v2h-6zM1814 230h5v2h-5zM1835 230h5v2h-5zM1798 232h11v2h-11zM1810 232h7v2h-7zM1818 232h7v2h-7zM1826 232h3v2h-3zM1830 232h8v2h-8zM1805 238h10v2h-10zM1816 238h6v2h-6zM1802 240h9v2h-9zM1812 240h4v2h-4zM1816 240h1v2h-1zM1820 242h5v2h-5zM1826 242h4v2h-4zM1831 242h1v2h-1zM1802 244h1v2h-1zM1802 246h3v2h-3zM1806 246h7v2h-7zM1814 246h5v2h-5zM1802 248h2v2h-2zM1805 248h5v2h-5zM1811 248h4v2h-4zM1816 248h8v2h-8zM1857 248h1v2h-1zM1802 252h7v2h-7zM1810 252h6v2h-6zM1817 252h6v2h-6zM1824 252h3v2h-3zM1828 252h4v2h-4zM1833 252h1v2h-1zM1863 252h9v2h-9zM1879 252h5v2h-5zM1801 256h7v2h-7zM1809 256h6v2h-6zM1802 258h6v2h-6zM1809 258h7v2h-7zM1817 258h5v2h-5zM1823 258h8v2h-8zM1832 258h11v2h-11zM1844 258h4v2h-4zM1802 260h10v2h-10zM1813 260h3v2h-3zM1816 260h1v2h-1zM1821 262h10v2h-10zM1832 262h4v2h-4zM1821 264h9v2h-9zM1831 264h6v2h-6zM1802 266h1v2h-1zM1802 268h6v2h-6zM1809 268h2v2h-2zM1806 270h10v2h-10zM1817 270h7v2h-7zM1806 272h9v2h-9zM1816 272h3v2h-3zM1820 272h10v2h-10zM1830 272h1v2h-1zM1802 274h1v2h-1zM1802 276h9v2h-9zM1812 276h7v2h-7zM1828 276h12v2h-12zM1841 276h11v2h-11zM1802 278h5v2h-5zM1808 278h8v2h-8zM1801 280h1v2h-1zM1802 290h3v2h-3zM1806 290h2v2h-2zM1808 290h1v2h-1zM1813 294h8v2h-8zM1827 294h3v2h-3zM1820 296h7v2h-7zM1802 298h1v2h-1zM1806 304h3v2h-3zM1810 304h10v2h-10zM1821 304h6v2h-6zM1828 304h1v2h-1zM1806 306h11v2h-11zM1818 306h8v2h-8zM1827 306h12v2h-12zM1805 312h3v2h-3zM1809 312h5v2h-5zM1815 312h10v2h-10zM1826 312h6v2h-6zM1833 312h3v2h-3zM1837 312h2v2h-2zM1806 314h4v2h-4zM1811 314h10v2h-10zM1822 314h1v2h-1zM1833 314h8v2h-8zM1808 320h11v2h-11zM1820 320h5v2h-5zM1826 320h9v2h-9zM1836 320h8v2h-8zM1844 320h1v2h-1zM1806 322h4v2h-4zM1811 322h7v2h-7zM1819 322h4v2h-4zM1823 322h1v2h-1zM1825 322h8v2h-8zM1802 328h9v2h-9zM1811 328h1v2h-1zM1806 334h5v2h-5zM1811 334h1v2h-1zM1806 336h7v2h-7zM1814 336h7v2h-7zM1822 336h3v2h-3zM1826 336h7v2h-7zM1808 340h6v2h-6zM1815 340h9v2h-9zM1825 340h10v2h-10zM1836 340h6v2h-6zM1808 344h7v2h-7zM1816 344h5v2h-5zM1822 344h5v2h-5zM1806 346h10v2h-10zM1817 346h5v2h-5zM1823 346h3v2h-3zM1827 346h7v2h-7zM1835 346h6v2h-6zM1872 346h6v2h-6zM1802 352h3v2h-3zM1806 352h7v2h-7zM1814 352h3v2h-3zM1818 352h2v2h-2zM1821 352h2v2h-2zM1829 352h9v2h-9zM1846 352h11v2h-11zM1809 358h2v2h-2zM1812 358h8v2h-8zM1821 358h3v2h-3zM1818 362h2v2h-2zM1802 364h8v2h-8zM1811 364h3v2h-3zM1815 364h9v2h-9zM1825 364h6v2h-6zM1850 364h5v2h-5zM1805 372h5v2h-5zM1811 372h11v2h-11zM1822 372h1v2h-1zM1802 374h11v2h-11zM1814 374h3v2h-3zM1817 380h9v2h-9zM1802 382h1v2h-1zM1802 384h8v2h-8zM1811 384h7v2h-7zM1819 384h4v2h-4zM1801 388h5v2h-5zM1807 388h2v2h-2zM1810 388h9v2h-9zM1820 388h7v2h-7zM1827 388h1v2h-1zM1802 390h5v2h-5zM1808 390h8v2h-8zM1816 390h1v2h-1zM1815 396h7v2h-7zM1833 396h5v2h-5zM1821 398h4v2h-4zM1802 404h1v2h-1zM1802 406h9v2h-9zM1812 406h5v2h-5zM1818 406h2v2h-2zM1821 406h10v2h-10zM1848 406h7v2h-7zM1798 412h3v2h-3zM1802 412h9v2h-9zM1812 412h2v2h-2zM1825 414h1v2h-1zM1809 416h6v2h-6zM1822 416h1v2h-1zM1813 418h8v2h-8zM1813 420h10v2h-10zM1809 426h10v2h-10zM1810 428h8v2h-8zM1819 428h3v2h-3zM1815 430h6v2h-6zM1822 430h3v2h-3zM1813 434h9v2h-9zM1823 434h8v2h-8zM1832 434h6v2h-6zM1802 436h2v2h-2zM1816 438h4v2h-4zM1820 438h1v2h-1zM1813 440h4v2h-4zM1824 440h7v2h-7zM1832 440h1v2h-1zM1798 442h1v2h-1zM1802 448h11v2h-11zM1814 448h2v2h-2zM1802 450h5v2h-5zM1808 450h3v2h-3zM1812 450h4v2h-4zM1817 450h4v2h-4zM1833 450h8v2h-8zM1842 450h8v2h-8zM1802 452h5v2h-5zM1808 452h11v2h-11zM1820 452h10v2h-10zM1831 452h1v2h-1zM1845 452h7v2h-7zM1867 452h3v2h-3zM1871 452h1v2h-1zM1805 456h4v2h-4zM1810 456h4v2h-4zM1815 456h11v2h-11zM1827 456h5v2h-5zM1798 458h4v2h-4zM1803 458h4v2h-4zM1808 458h6v2h-6zM1815 458h8v2h-8zM1824 458h11v2h-11zM1836 458h7v2h-7zM1804 464h2v2h-2zM1807 464h4v2h-4zM1812 464h10v2h-10zM1823 464h1v2h-1zM1821 468h3v2h-3zM1816 470h9v2h-9zM1826 470h9v2h-9zM1836 470h3v2h-3zM1811 472h9v2h-9zM1853 472h2v2h-2zM1812 474h8v2h-8zM1821 474h7v2h-7zM1845 474h6v2h-6zM1798 476h1v2h-1zM1808 484h3v2h-3zM1812 484h7v2h-7zM1820 484h10v2h-10zM1831 484h8v2h-8zM1840 484h11v2h-11zM1852 484h4v2h-4zM1857 484h5v2h-5zM1863 484h6v2h-6zM1830 488h10v2h-10zM1813 490h5v2h-5zM1802 492h2v2h-2zM1818 494h2v2h-2zM1802 496h9v2h-9zM1812 496h4v2h-4zM1817 496h3v2h-3zM1821 496h6v2h-6zM1828 496h3v2h-3zM1841 496h3v2h-3zM1845 496h11v2h-11zM1857 496h2v2h-2zM1801 500h3v2h-3zM1805 500h6v2h-6zM1812 500h5v2h-5zM1813 510h7v2h-7zM1821 510h8v2h-8zM1830 510h4v2h-4zM1835 510h6v2h-6zM1842 510h5v2h-5zM1856 510h4v2h-4zM1813 512h4v2h-4zM1822 512h7v2h-7zM1830 512h7v2h-7zM1805 518h4v2h-4zM1810 518h2v2h-2zM1813 518h11v2h-11zM1824 518h1v2h-1zM1820 520h4v2h-4zM1816 522h3v2h-3zM1820 522h4v2h-4zM1811 524h4v2h-4zM1816 524h5v2h-5zM1798 526h2v2h-2zM1805 530h6v2h-6zM1812 530h2v2h-2zM1798 536h8v2h-8zM1807 536h5v2h-5zM1809 546h11v2h-11zM1821 546h9v2h-9zM1831 546h3v2h-3zM1835 546h10v2h-10zM1846 546h4v2h-4zM1851 546h8v2h-8zM1860 546h4v2h-4zM1809 550h2v2h-2zM1812 550h7v2h-7zM1820 550h8v2h-8zM1829 550h9v2h-9zM1839 550h7v2h-7zM1847 550h5v2h-5zM1853 550h2v2h-2zM1856 550h4v2h-4zM1861 550h7v2h-7zM1802 552h11v2h-11zM1814 552h4v2h-4zM1819 552h4v2h-4zM1824 552h9v2h-9zM1833 552h1v2h-1zM1855 552h11v2h-11zM1818 554h2v2h-2zM1802 556h11v2h-11zM1814 556h5v2h-5zM1820 556h6v2h-6zM1826 556h1v2h-1zM1845 556h8v2h-8zM1854 556h7v2h-7zM1801 562h11v2h-11zM1813 562h11v2h-11zM1825 562h4v2h-4zM1830 562h3v2h-3zM1802 564h8v2h-8zM1811 564h5v2h-5zM1817 564h8v2h-8zM1825 564h1v2h-1zM1802 566h5v2h-5zM1808 566h8v2h-8zM1817 566h7v2h-7zM1825 566h5v2h-5zM1843 566h9v2h-9zM1798 568h1v2h-1zM1804 574h8v2h-8zM1813 574h3v2h-3zM1817 574h2v2h-2zM1820 574h4v2h-4zM1810 576h7v2h-7zM1818 576h5v2h-5zM1810 580h5v2h-5zM1821 580h8v2h-8zM1817 584h10v2h-10zM1828 584h5v2h-5zM1798 586h1v2h-1zM1806 594h7v2h-7zM1814 594h7v2h-7zM1822 594h11v2h-11zM1834 594h5v2h-5zM1839 594h1v2h-1zM1817 596h4v2h-4zM1822 596h6v2h-6zM1829 596h1v2h-1zM1818 598h6v2h-6zM1854 598h8v2h-8zM1802 600h2v2h-2zM1818 602h2v2h-2zM1802 604h6v2h-6zM1809 604h5v2h-5zM1815 604h4v2h-4zM1820 604h9v2h-9zM1804 614h13v2h-13zM1817 614h1v2h-1zM1818 614h10v2h-10zM1828 614h1v2h-1zM1833 614h1v2h-1zM1835 614h10v2h-10zM1845 614h1v2h-1zM1850 614h1v2h-1zM1852 614h15v2h-15zM1867 614h1v2h-1zM1873 614h1v2h-1zM1879 614h1v2h-1zM1881 614h15v2h-15zM1896 614h1v2h-1zM1902 614h1v2h-1zM1801 622h10v2h-10zM1819 622h15v2h-15zM1834 622h1v2h-1zM1809 624h1v2h-1zM1817 624h1v2h-1zM1838 624h1v2h-1zM1839 624h10v2h-10zM1849 624h1v2h-1zM1868 624h1v2h-1zM1873 624h1v2h-1zM1874 624h4v2h-4zM1878 624h1v2h-1zM1879 624h15v2h-15zM1894 624h1v2h-1zM1895 624h4v2h-4zM1899 624h1v2h-1zM1900 624h1v2h-1zM1901 624h1v2h-1zM1902 624h1v2h-1zM1904 624h1v2h-1zM1801 630h15v2h-15zM1816 630h1v2h-1zM1802 632h15v2h-15zM1818 632h1v2h-1zM1820 632h15v2h-15zM1835 632h1v2h-1zM1836 632h5v2h-5zM1841 632h1v2h-1zM1842 632h1v2h-1zM1843 632h1v2h-1zM1844 632h5v2h-5zM1849 632h1v2h-1zM1850 632h1v2h-1zM1809 634h15v2h-15zM1824 634h1v2h-1zM1825 634h7v2h-7zM1832 634h1v2h-1zM1833 634h1v2h-1zM1834 634h1v2h-1zM1813 636h1v2h-1zM1821 636h1v2h-1zM1870 636h1v2h-1zM1805 638h3v2h-3zM1808 638h1v2h-1zM1809 638h15v2h-15zM1824 638h1v2h-1zM1826 638h1v2h-1zM1830 638h1v2h-1zM1813 640h1v2h-1zM1821 640h1v2h-1zM1863 640h1v2h-1zM1801 644h15v2h-15zM1816 644h1v2h-1zM1805 646h3v2h-3zM1808 646h1v2h-1zM1809 646h15v2h-15zM1824 646h1v2h-1zM1826 646h1v2h-1zM1829 646h1v2h-1zM1813 648h1v2h-1zM1821 648h1v2h-1zM1863 648h1v2h-1zM1805 650h3v2h-3zM1808 650h1v2h-1zM1809 650h15v2h-15zM1824 650h1v2h-1zM1826 650h1v2h-1zM1831 650h1v2h-1zM1813 652h1v2h-1zM1821 652h1v2h-1zM1864 652h1v2h-1zM1805 656h3v2h-3zM1808 656h1v2h-1zM1809 656h1v2h-1zM1814 656h15v2h-15zM1834 656h1v2h-1zM1839 656h1v2h-1zM1843 656h1v2h-1zM1845 656h1v2h-1zM1851 656h1v2h-1zM1852 656h1v2h-1zM1857 656h1v2h-1zM1862 656h1v2h-1zM1813 658h1v2h-1zM1821 658h1v2h-1zM1894 658h1v2h-1zM1798 664h8v2h-8zM1807 664h1v2h-1zM1815 664h17v2h-17zM1832 664h1v2h-1zM1833 664h8v2h-8zM1841 664h1v2h-1zM1842 664h1v2h-1zM1814 666h1v2h-1zM1816 666h10v2h-10zM1826 666h1v2h-1zM1811 668h1v2h-1zM1813 668h10v2h-10zM1823 668h1v2h-1zM1810 670h1v2h-1zM1798 672h1v2h-1zM1799 672h1v2h-1zM1801 676h8v2h-8zM1809 676h1v2h-1zM1809 678h1v2h-1zM1813 680h1v2h-1zM1834 680h1v2h-1zM1835 680h10v2h-10zM1845 680h1v2h-1zM1897 680h1v2h-1zM1824 682h1v2h-1zM1826 682h8v2h-8zM1802 684h1v2h-1zM1801 690h10v2h-10zM1815 690h27v2h-27zM1842 690h1v2h-1zM1815 694h32v2h-32zM1847 694h1v2h-1zM1848 694h10v2h-10zM1858 694h1v2h-1zM1860 694h10v2h-10zM1870 694h1v2h-1zM1872 694h15v2h-15zM1887 694h1v2h-1zM1811 702h31v2h-31zM1842 702h1v2h-1zM1843 702h10v2h-10zM1853 702h1v2h-1zM1854 702h1v2h-1zM1809 704h1v2h-1zM1817 704h1v2h-1zM1844 704h1v2h-1zM1845 704h10v2h-10zM1855 704h1v2h-1zM1867 704h1v2h-1zM1798 708h6v2h-6zM1805 708h1v2h-1zM1807 708h15v2h-15zM1822 708h1v2h-1zM1823 708h10v2h-10zM1833 708h1v2h-1zM1798 714h10v2h-10zM1809 714h1v2h-1zM1811 714h10v2h-10zM1821 714h1v2h-1zM1822 714h10v2h-10zM1832 714h1v2h-1zM1798 716h7v2h-7zM1806 716h1v2h-1zM1808 716h15v2h-15zM1827 716h15v2h-15zM1848 716h16v2h-16zM1864 716h1v2h-1zM1872 716h1v2h-1zM1873 716h10v2h-10zM1883 716h1v2h-1zM1885 716h1v2h-1zM1798 718h11v2h-11zM1810 718h1v2h-1zM1812 718h15v2h-15zM1831 718h15v2h-15zM1852 718h17v2h-17zM1869 718h1v2h-1zM1870 718h1v2h-1zM1798 722h6v2h-6zM1804 722h1v2h-1zM1805 722h4v2h-4zM1809 722h1v2h-1zM1828 722h1v2h-1zM1829 722h10v2h-10zM1839 722h1v2h-1zM1850 722h1v2h-1zM1851 722h7v2h-7zM1858 722h1v2h-1zM1870 722h1v2h-1zM1871 722h11v2h-11zM1882 722h1v2h-1zM1883 722h1v2h-1zM1885 722h1v2h-1zM1886 722h1v2h-1zM1899 722h1v2h-1zM1904 722h1v2h-1zM1905 722h1v2h-1zM1801 728h10v2h-10zM1815 728h1v2h-1zM1823 728h1v2h-1zM1837 728h1v2h-1zM1848 728h1v2h-1zM1863 728h1v2h-1zM1864 728h1v2h-1zM1802 730h7v2h-7zM1810 730h1v2h-1zM1818 730h20v2h-20zM1838 730h1v2h-1zM1839 730h10v2h-10zM1849 730h1v2h-1zM1851 730h10v2h-10zM1861 730h1v2h-1zM1863 730h7v2h-7zM1870 730h1v2h-1zM1872 730h11v2h-11zM1883 730h1v2h-1zM1802 732h6v2h-6zM1808 732h1v2h-1zM1809 732h4v2h-4zM1813 732h1v2h-1zM1847 732h1v2h-1zM1848 732h7v2h-7zM1855 732h1v2h-1zM1857 732h1v2h-1zM1809 734h7v2h-7zM1816 734h1v2h-1zM1813 736h1v2h-1zM1821 736h1v2h-1zM1859 736h1v2h-1zM1860 736h10v2h-10zM1870 736h1v2h-1zM1872 736h1v2h-1zM1798 742h11v2h-11zM1810 742h1v2h-1zM1812 742h1v2h-1zM1808 744h1v2h-1zM1821 744h1v2h-1zM1808 746h1v2h-1zM1810 746h6v2h-6zM1816 746h1v2h-1zM1823 746h1v2h-1zM1824 746h1v2h-1zM1812 748h1v2h-1zM1814 748h7v2h-7zM1821 748h1v2h-1zM1812 750h1v2h-1zM1814 750h11v2h-11zM1825 750h1v2h-1zM1812 752h1v2h-1zM1814 752h7v2h-7zM1798 754h1v2h-1zM1798 760h7v2h-7zM1806 760h11v2h-11zM1818 760h6v2h-6zM1825 760h6v2h-6zM1832 760h4v2h-4zM1837 760h9v2h-9zM1847 760h8v2h-8zM1856 760h10v2h-10zM1798 766h3v2h-3zM1802 766h2v2h-2zM1805 766h9v2h-9zM1817 768h9v2h-9zM1818 770h5v2h-5zM1825 772h5v2h-5zM1814 774h10v2h-10zM1825 774h5v2h-5zM1819 776h4v2h-4zM1817 778h4v2h-4zM1814 780h6v2h-6zM1821 780h1v2h-1zM1821 782h10v2h-10zM1817 784h8v2h-8zM1825 786h5v2h-5zM1831 786h5v2h-5zM1837 786h4v2h-4zM1802 788h2v2h-2zM1798 794h1v2h-1zM1804 798h6v2h-6zM1811 798h7v2h-7zM1819 798h7v2h-7zM1827 798h4v2h-4zM1831 798h1v2h-1zM1798 800h11v2h-11zM1810 800h8v2h-8zM1819 800h4v2h-4zM1824 800h11v2h-11zM1836 800h6v2h-6zM1842 800h1v2h-1zM1803 806h5v2h-5zM1809 806h4v2h-4zM1814 806h2v2h-2zM1817 806h7v2h-7zM1811 810h9v2h-9zM1827 810h3v2h-3zM1822 812h3v2h-3zM1817 814h9v2h-9zM1827 814h9v2h-9zM1854 814h1v2h-1zM1798 818h1v2h-1zM1808 826h8v2h-8zM1817 826h7v2h-7zM1825 826h10v2h-10zM1836 826h5v2h-5zM1825 828h5v2h-5zM1824 830h3v2h-3zM1828 830h4v2h-4zM1816 832h4v2h-4zM1821 832h3v2h-3zM1825 832h3v2h-3zM1802 834h2v2h-2zM1818 836h2v2h-2zM1802 838h9v2h-9zM1812 838h8v2h-8zM1821 838h6v2h-6zM1856 838h3v2h-3zM1805 842h2v2h-2zM1808 842h2v2h-2zM1811 842h6v2h-6zM1809 848h4v2h-4zM1814 848h8v2h-8zM1837 848h2v2h-2zM1798 850h4v2h-4zM1803 850h5v2h-5zM1809 850h4v2h-4zM1798 852h2v2h-2zM1801 852h6v2h-6zM1808 852h4v2h-4zM1798 854h2v2h-2zM1801 854h4v2h-4zM1806 854h5v2h-5zM1798 856h5v2h-5zM1804 856h9v2h-9zM1813 856h1v2h-1zM1798 858h10v2h-10zM1809 858h2v2h-2zM1812 858h1v2h-1zM1824 858h3v2h-3zM1828 858h4v2h-4zM1804 862h8v2h-8zM1813 862h9v2h-9zM1801 868h2v2h-2zM1804 868h10v2h-10zM1815 868h9v2h-9zM1825 868h5v2h-5zM1804 874h2v2h-2zM1807 874h4v2h-4zM1812 874h9v2h-9zM1822 874h3v2h-3zM1826 874h1v2h-1zM1804 880h6v2h-6zM1811 880h5v2h-5zM1817 880h1v2h-1zM1832 896h8v2h-8zM1850 896h3v2h-3zM1854 896h6v2h-6zM1861 896h8v2h-8zM1805 902h9v2h-9zM1815 902h4v2h-4zM1820 902h2v2h-2zM1802 910h3v2h-3zM1806 910h7v2h-7zM1814 910h8v2h-8zM1823 910h1v2h-1zM1808 914h11v2h-11zM1820 914h6v2h-6zM1827 914h8v2h-8zM1836 914h6v2h-6zM1801 922h4v2h-4zM1806 922h9v2h-9zM1816 922h3v2h-3zM1820 922h7v2h-7zM1828 922h4v2h-4zM1833 922h9v2h-9zM1842 922h1v2h-1zM1814 924h10v2h-10zM1825 924h1v2h-1zM1819 926h5v2h-5zM1814 928h7v2h-7zM1798 930h2v2h-2zM1802 934h10v2h-10zM1813 934h1v2h-1zM1798 940h9v2h-9zM1808 940h3v2h-3zM1812 940h8v2h-8zM1821 940h9v2h-9zM1831 940h4v2h-4zM1836 940h2v2h-2zM1839 940h5v2h-5zM1798 942h7v2h-7zM1806 942h2v2h-2zM1809 942h3v2h-3zM1813 942h7v2h-7zM1821 942h8v2h-8zM1830 942h4v2h-4zM1805 948h3v2h-3zM1809 948h10v2h-10zM1820 948h10v2h-10zM1831 948h6v2h-6zM1837 948h1v2h-1zM1802 950h2v2h-2zM1805 950h5v2h-5zM1811 950h11v2h-11zM1823 950h1v2h-1zM1847 950h11v2h-11zM1813 956h11v2h-11zM1825 956h3v2h-3zM1829 956h1v2h-1zM1810 958h2v2h-2zM1813 958h5v2h-5zM1819 958h4v2h-4zM1824 958h3v2h-3zM1827 958h1v2h-1zM1819 960h7v2h-7zM1826 962h4v2h-4zM1825 964h1v2h-1zM1813 968h8v2h-8zM1822 968h6v2h-6zM1829 968h6v2h-6zM1836 968h1v2h-1zM1814 970h7v2h-7zM1822 970h3v2h-3zM1826 970h8v2h-8zM1835 970h7v2h-7zM1853 970h9v2h-9zM1810 972h1v2h-1zM1811 976h7v2h-7zM1819 976h6v2h-6zM1817 978h9v2h-9zM1827 978h2v2h-2zM1830 978h7v2h-7zM1814 980h3v2h-3zM1818 980h2v2h-2zM1821 980h11v2h-11zM1833 980h7v2h-7zM1841 980h5v2h-5zM1810 982h1v2h-1zM1813 984h5v2h-5zM1819 984h6v2h-6zM1826 984h11v2h-11zM1814 986h8v2h-8zM1823 986h7v2h-7zM1831 986h8v2h-8zM1840 986h3v2h-3zM1810 988h1v2h-1zM1810 992h7v2h-7zM1818 992h2v2h-2zM1821 992h11v2h-11zM1833 992h1v2h-1zM1810 994h2v2h-2zM1813 994h9v2h-9zM1823 994h8v2h-8zM1832 994h1v2h-1zM1834 994h4v2h-4zM1815 996h10v2h-10zM1826 996h3v2h-3zM1830 996h3v2h-3zM1834 996h3v2h-3zM1814 998h10v2h-10zM1825 998h3v2h-3zM1829 998h5v2h-5zM1835 998h3v2h-3zM1839 998h4v2h-4zM1853 998h4v2h-4zM1870 998h9v2h-9zM1810 1000h1v2h-1zM1810 1004h7v2h-7zM1818 1004h5v2h-5zM1824 1004h2v2h-2zM1827 1004h7v2h-7zM1835 1004h3v2h-3zM1810 1006h7v2h-7zM1818 1006h8v2h-8zM1827 1006h3v2h-3zM1825 1008h9v2h-9zM1846 1008h5v2h-5z"/><path fill="#5f8c50" fill-opacity="0.3" d="M1814 95h5v1h-5zM1816 94h1v1h-1zM1820 95h4v1h-4zM1822 94h1v1h-1zM1825 95h10v1h-10zM1825 94h4v1h-4zM1830 94h1v1h-1zM1832 94h2v1h-2zM1836 95h8v1h-8zM1837 94h1v1h-1zM1840 94h1v1h-1zM1842 94h1v1h-1zM1810 127h9v1h-9zM1811 126h2v1h-2zM1814 126h3v1h-3zM1818 126h1v1h-1zM1820 127h11v1h-11zM1821 126h1v1h-1zM1832 127h3v1h-3zM1836 127h8v1h-8zM1836 126h1v1h-1zM1839 126h4v1h-4zM1845 127h2v1h-2zM1845 126h2v1h-2zM1848 127h3v1h-3zM1850 126h1v1h-1zM1852 127h2v1h-2zM1852 126h2v1h-2zM1810 129h2v1h-2zM1813 129h10v1h-10zM1815 128h1v1h-1zM1818 128h2v1h-2zM1824 129h6v1h-6zM1824 128h1v1h-1zM1826 128h1v1h-1zM1831 129h5v1h-5zM1832 128h2v1h-2zM1837 129h8v1h-8zM1844 128h1v1h-1zM1846 129h1v1h-1zM1806 163h8v1h-8zM1806 162h1v1h-1zM1810 162h1v1h-1zM1812 162h1v1h-1zM1815 163h6v1h-6zM1817 162h1v1h-1zM1819 162h2v1h-2zM1822 163h5v1h-5zM1823 162h2v1h-2zM1828 163h8v1h-8zM1830 162h1v1h-1zM1833 162h1v1h-1zM1835 162h1v1h-1zM1837 163h5v1h-5zM1837 162h2v1h-2zM1843 163h5v1h-5zM1844 162h3v1h-3zM1849 163h8v1h-8zM1849 162h2v1h-2zM1852 162h1v1h-1zM1856 162h1v1h-1zM1858 163h5v1h-5zM1858 162h1v1h-1zM1864 163h11v1h-11zM1865 162h2v1h-2zM1798 213h2v1h-2zM1798 212h2v1h-2zM1801 213h6v1h-6zM1802 212h1v1h-1zM1808 213h4v1h-4zM1809 212h1v1h-1zM1813 213h2v1h-2zM1816 213h2v1h-2zM1816 212h1v1h-1zM1819 213h5v1h-5zM1819 212h1v1h-1zM1825 213h4v1h-4zM1825 212h2v1h-2zM1830 213h5v1h-5zM1831 212h4v1h-4zM1835 213h1v1h-1zM1835 212h1v1h-1zM1798 221h10v1h-10zM1798 220h2v1h-2zM1809 221h5v1h-5zM1809 220h1v1h-1zM1812 220h2v1h-2zM1815 221h5v1h-5zM1798 229h7v1h-7zM1799 228h1v1h-1zM1802 228h1v1h-1zM1806 229h5v1h-5zM1812 229h5v1h-5zM1812 228h2v1h-2zM1816 228h1v1h-1zM1818 229h5v1h-5zM1824 229h3v1h-3zM1824 228h1v1h-1zM1828 229h1v1h-1zM1798 237h7v1h-7zM1806 237h10v1h-10zM1808 236h1v1h-1zM1815 236h1v1h-1zM1817 237h5v1h-5zM1817 236h2v1h-2zM1821 236h1v1h-1zM1823 237h3v1h-3zM1823 236h3v1h-3zM1827 237h9v1h-9zM1827 236h1v1h-1zM1829 236h2v1h-2zM1832 236h1v1h-1zM1837 237h3v1h-3zM1839 236h1v1h-1zM1841 237h2v1h-2zM1844 237h2v1h-2zM1847 237h10v1h-10zM1850 236h2v1h-2zM1854 236h2v1h-2zM1802 251h3v1h-3zM1804 250h1v1h-1zM1806 251h8v1h-8zM1806 250h1v1h-1zM1808 250h2v1h-2zM1811 250h2v1h-2zM1815 251h11v1h-11zM1815 250h1v1h-1zM1819 250h1v1h-1zM1821 250h1v1h-1zM1827 251h11v1h-11zM1829 250h2v1h-2zM1833 250h3v1h-3zM1839 251h5v1h-5zM1839 250h4v1h-4zM1845 251h2v1h-2zM1798 287h9v1h-9zM1803 286h1v1h-1zM1806 286h1v1h-1zM1808 287h4v1h-4zM1810 286h1v1h-1zM1813 287h2v1h-2zM1802 303h10v1h-10zM1802 302h1v1h-1zM1806 302h2v1h-2zM1809 302h2v1h-2zM1813 303h4v1h-4zM1818 303h3v1h-3zM1819 302h1v1h-1zM1802 311h2v1h-2zM1802 310h1v1h-1zM1805 311h2v1h-2zM1805 310h2v1h-2zM1808 311h2v1h-2zM1811 311h6v1h-6zM1812 310h1v1h-1zM1818 311h6v1h-6zM1818 310h1v1h-1zM1821 310h1v1h-1zM1823 310h1v1h-1zM1825 311h4v1h-4zM1802 319h4v1h-4zM1802 318h1v1h-1zM1807 319h3v1h-3zM1811 319h3v1h-3zM1802 327h8v1h-8zM1807 326h1v1h-1zM1811 327h2v1h-2zM1811 326h1v1h-1zM1802 333h6v1h-6zM1809 333h9v1h-9zM1809 332h1v1h-1zM1811 332h1v1h-1zM1813 332h1v1h-1zM1815 332h2v1h-2zM1819 333h7v1h-7zM1820 332h2v1h-2zM1823 332h1v1h-1zM1827 333h1v1h-1zM1802 357h9v1h-9zM1803 356h1v1h-1zM1806 356h1v1h-1zM1808 356h1v1h-1zM1812 357h9v1h-9zM1813 356h1v1h-1zM1818 356h1v1h-1zM1822 357h10v1h-10zM1823 356h1v1h-1zM1826 356h1v1h-1zM1829 356h2v1h-2zM1833 357h3v1h-3zM1833 356h1v1h-1zM1798 371h2v1h-2zM1799 370h1v1h-1zM1801 371h7v1h-7zM1802 370h1v1h-1zM1804 370h1v1h-1zM1807 370h1v1h-1zM1809 371h3v1h-3zM1809 370h1v1h-1zM1811 370h1v1h-1zM1813 371h5v1h-5zM1814 370h1v1h-1zM1816 370h1v1h-1zM1819 371h4v1h-4zM1819 370h1v1h-1zM1822 370h1v1h-1zM1824 371h7v1h-7zM1824 370h1v1h-1zM1828 370h1v1h-1zM1830 370h1v1h-1zM1832 371h5v1h-5zM1834 370h2v1h-2zM1798 411h3v1h-3zM1802 411h7v1h-7zM1805 410h2v1h-2zM1810 411h3v1h-3zM1810 410h1v1h-1zM1814 411h4v1h-4zM1814 410h4v1h-4zM1819 411h3v1h-3zM1819 410h1v1h-1zM1823 411h8v1h-8zM1825 410h1v1h-1zM1828 410h2v1h-2zM1832 411h1v1h-1zM1798 447h10v1h-10zM1803 446h1v1h-1zM1805 446h1v1h-1zM1809 447h4v1h-4zM1810 446h1v1h-1zM1812 446h1v1h-1zM1814 447h11v1h-11zM1822 446h1v1h-1zM1826 447h5v1h-5zM1828 446h3v1h-3zM1831 447h1v1h-1zM1798 463h2v1h-2zM1798 462h1v1h-1zM1801 463h4v1h-4zM1802 462h1v1h-1zM1806 463h5v1h-5zM1807 462h2v1h-2zM1812 463h7v1h-7zM1798 481h9v1h-9zM1798 480h1v1h-1zM1801 480h1v1h-1zM1803 480h1v1h-1zM1805 480h2v1h-2zM1808 481h3v1h-3zM1808 480h2v1h-2zM1812 481h10v1h-10zM1819 480h1v1h-1zM1823 481h5v1h-5zM1823 480h1v1h-1zM1827 480h1v1h-1zM1829 481h10v1h-10zM1830 480h1v1h-1zM1833 480h1v1h-1zM1835 480h1v1h-1zM1837 480h1v1h-1zM1798 517h4v1h-4zM1798 516h2v1h-2zM1801 516h1v1h-1zM1803 517h6v1h-6zM1806 516h3v1h-3zM1810 517h5v1h-5zM1810 516h3v1h-3zM1816 517h5v1h-5zM1818 516h1v1h-1zM1822 517h4v1h-4zM1822 516h1v1h-1zM1827 517h1v1h-1zM1798 541h5v1h-5zM1804 541h11v1h-11zM1807 540h2v1h-2zM1814 540h1v1h-1zM1816 541h4v1h-4zM1821 541h2v1h-2zM1821 540h1v1h-1zM1824 541h1v1h-1zM1802 545h2v1h-2zM1802 544h1v1h-1zM1805 545h7v1h-7zM1806 544h1v1h-1zM1808 544h1v1h-1zM1813 545h5v1h-5zM1815 544h1v1h-1zM1802 549h5v1h-5zM1802 548h1v1h-1zM1808 549h4v1h-4zM1808 548h1v1h-1zM1813 549h7v1h-7zM1815 548h2v1h-2zM1798 561h4v1h-4zM1799 560h1v1h-1zM1801 560h1v1h-1zM1803 561h8v1h-8zM1805 560h2v1h-2zM1810 560h1v1h-1zM1812 561h3v1h-3zM1812 560h2v1h-2zM1798 573h4v1h-4zM1801 572h1v1h-1zM1803 573h9v1h-9zM1805 572h1v1h-1zM1807 572h1v1h-1zM1809 572h1v1h-1zM1811 572h1v1h-1zM1813 573h5v1h-5zM1814 572h2v1h-2zM1818 573h1v1h-1zM1798 591h9v1h-9zM1802 590h1v1h-1zM1805 590h2v1h-2zM1808 591h8v1h-8zM1817 591h4v1h-4zM1819 590h1v1h-1zM1822 591h8v1h-8zM1827 590h1v1h-1zM1829 590h1v1h-1zM1831 591h8v1h-8zM1832 590h1v1h-1zM1834 590h2v1h-2zM1838 590h1v1h-1zM1798 621h1v1h-1zM1798 620h1v1h-1zM1800 621h8v1h-8zM1800 620h1v1h-1zM1802 620h1v1h-1zM1804 620h1v1h-1zM1806 620h1v1h-1zM1809 621h10v1h-10zM1818 620h1v1h-1zM1798 629h1v1h-1zM1798 628h1v1h-1zM1800 629h8v1h-8zM1800 628h1v1h-1zM1802 628h1v1h-1zM1804 628h1v1h-1zM1806 628h1v1h-1zM1809 629h6v1h-6zM1812 628h1v1h-1zM1816 629h11v1h-11zM1819 628h1v1h-1zM1822 628h1v1h-1zM1825 628h1v1h-1zM1828 629h2v1h-2zM1829 628h1v1h-1zM1831 629h8v1h-8zM1836 628h1v1h-1zM1838 628h1v1h-1zM1802 655h1v1h-1zM1802 654h1v1h-1zM1804 655h5v1h-5zM1804 654h2v1h-2zM1808 654h1v1h-1zM1810 655h3v1h-3zM1810 654h1v1h-1zM1814 655h9v1h-9zM1814 654h1v1h-1zM1824 655h10v1h-10zM1825 654h1v1h-1zM1830 654h1v1h-1zM1835 655h4v1h-4zM1835 654h2v1h-2zM1838 654h1v1h-1zM1840 655h5v1h-5zM1843 654h2v1h-2zM1846 655h5v1h-5zM1846 654h1v1h-1zM1850 654h1v1h-1zM1852 655h3v1h-3zM1852 654h3v1h-3zM1798 663h1v1h-1zM1798 662h1v1h-1zM1800 663h5v1h-5zM1800 662h2v1h-2zM1804 662h1v1h-1zM1806 663h2v1h-2zM1807 662h1v1h-1zM1809 663h4v1h-4zM1814 663h7v1h-7zM1815 662h1v1h-1zM1819 662h1v1h-1zM1822 663h3v1h-3zM1822 662h1v1h-1zM1826 663h4v1h-4zM1826 662h2v1h-2zM1831 663h7v1h-7zM1839 663h7v1h-7zM1798 689h1v1h-1zM1798 688h1v1h-1zM1800 689h5v1h-5zM1800 688h1v1h-1zM1803 688h1v1h-1zM1806 689h2v1h-2zM1806 688h1v1h-1zM1809 689h11v1h-11zM1818 688h1v1h-1zM1821 689h7v1h-7zM1821 688h1v1h-1zM1824 688h2v1h-2zM1829 689h5v1h-5zM1829 688h1v1h-1zM1833 688h1v1h-1zM1835 689h2v1h-2zM1838 689h7v1h-7zM1846 689h4v1h-4zM1846 688h1v1h-1zM1802 693h1v1h-1zM1802 692h1v1h-1zM1804 693h6v1h-6zM1804 692h1v1h-1zM1806 692h1v1h-1zM1811 693h8v1h-8zM1811 692h1v1h-1zM1813 692h2v1h-2zM1816 692h3v1h-3zM1820 693h1v1h-1zM1822 693h8v1h-8zM1828 692h1v1h-1zM1831 693h9v1h-9zM1834 692h1v1h-1zM1841 693h3v1h-3zM1845 693h4v1h-4zM1798 699h1v1h-1zM1798 698h1v1h-1zM1800 699h6v1h-6zM1800 698h2v1h-2zM1805 698h1v1h-1zM1807 699h8v1h-8zM1816 699h7v1h-7zM1816 698h2v1h-2zM1819 698h3v1h-3zM1824 699h11v1h-11zM1824 698h1v1h-1zM1827 698h1v1h-1zM1831 698h3v1h-3zM1836 699h8v1h-8zM1836 698h1v1h-1zM1841 698h3v1h-3zM1798 701h1v1h-1zM1798 700h1v1h-1zM1800 701h6v1h-6zM1800 700h1v1h-1zM1807 701h6v1h-6zM1808 700h1v1h-1zM1812 700h1v1h-1zM1814 701h9v1h-9zM1817 700h1v1h-1zM1824 701h2v1h-2zM1827 701h7v1h-7zM1798 713h1v1h-1zM1798 712h1v1h-1zM1800 713h3v1h-3zM1800 712h1v1h-1zM1804 713h6v1h-6zM1807 712h1v1h-1zM1811 713h2v1h-2zM1814 713h8v1h-8zM1820 712h1v1h-1zM1823 713h11v1h-11zM1826 712h1v1h-1zM1829 712h1v1h-1zM1832 712h1v1h-1zM1798 727h1v1h-1zM1798 726h1v1h-1zM1800 727h6v1h-6zM1800 726h1v1h-1zM1804 726h1v1h-1zM1807 727h4v1h-4zM1812 727h8v1h-8zM1812 726h1v1h-1zM1814 726h1v1h-1zM1816 726h1v1h-1zM1821 727h4v1h-4zM1821 726h2v1h-2zM1826 727h6v1h-6zM1826 726h1v1h-1zM1828 726h3v1h-3zM1833 727h11v1h-11zM1833 726h1v1h-1zM1836 726h1v1h-1zM1840 726h3v1h-3zM1845 727h8v1h-8zM1845 726h1v1h-1zM1850 726h2v1h-2zM1854 727h12v1h-12zM1854 726h1v1h-1zM1857 726h1v1h-1zM1862 726h4v1h-4zM1798 741h1v1h-1zM1798 740h1v1h-1zM1800 741h5v1h-5zM1800 740h1v1h-1zM1803 740h2v1h-2zM1806 741h11v1h-11zM1809 740h1v1h-1zM1812 740h1v1h-1zM1815 740h1v1h-1zM1818 741h3v1h-3zM1820 740h1v1h-1zM1822 741h10v1h-10zM1828 740h1v1h-1zM1833 741h4v1h-4zM1835 740h1v1h-1zM1798 759h3v1h-3zM1799 758h1v1h-1zM1802 759h2v1h-2zM1802 758h1v1h-1zM1805 759h2v1h-2zM1805 758h1v1h-1zM1808 759h7v1h-7zM1811 758h4v1h-4zM1816 759h7v1h-7zM1816 758h1v1h-1zM1819 758h1v1h-1zM1821 758h1v1h-1zM1798 765h7v1h-7zM1798 764h3v1h-3zM1804 764h1v1h-1zM1806 765h7v1h-7zM1810 764h3v1h-3zM1814 765h2v1h-2zM1817 765h11v1h-11zM1817 764h1v1h-1zM1820 764h3v1h-3zM1826 764h2v1h-2zM1829 765h4v1h-4zM1830 764h2v1h-2zM1798 805h4v1h-4zM1798 804h1v1h-1zM1800 804h1v1h-1zM1803 805h5v1h-5zM1803 804h2v1h-2zM1806 804h1v1h-1zM1809 805h8v1h-8zM1812 804h1v1h-1zM1816 804h1v1h-1zM1818 805h1v1h-1zM1798 823h6v1h-6zM1805 823h3v1h-3zM1805 822h1v1h-1zM1809 823h2v1h-2zM1810 822h1v1h-1zM1812 823h4v1h-4zM1817 823h7v1h-7zM1819 822h1v1h-1zM1825 823h9v1h-9zM1826 822h2v1h-2zM1829 822h2v1h-2zM1832 822h1v1h-1zM1835 823h4v1h-4zM1838 822h1v1h-1zM1802 883h9v1h-9zM1802 882h2v1h-2zM1805 882h1v1h-1zM1808 882h1v1h-1zM1810 882h1v1h-1zM1812 883h9v1h-9zM1812 882h2v1h-2zM1819 882h2v1h-2zM1822 883h5v1h-5zM1822 882h1v1h-1zM1825 882h1v1h-1zM1828 883h3v1h-3zM1832 883h9v1h-9zM1832 882h1v1h-1zM1836 882h1v1h-1zM1842 883h2v1h-2zM1842 882h1v1h-1zM1845 883h10v1h-10zM1845 882h3v1h-3zM1851 882h1v1h-1zM1853 882h1v1h-1zM1856 883h3v1h-3zM1857 882h1v1h-1zM1859 883h1v1h-1zM1798 901h3v1h-3zM1798 900h3v1h-3zM1802 901h6v1h-6zM1804 900h1v1h-1zM1809 901h8v1h-8zM1809 900h1v1h-1zM1812 900h3v1h-3zM1816 900h1v1h-1zM1818 901h1v1h-1zM1798 909h9v1h-9zM1799 908h1v1h-1zM1802 908h2v1h-2zM1805 908h2v1h-2zM1808 909h5v1h-5zM1811 908h2v1h-2zM1814 909h9v1h-9zM1814 908h2v1h-2zM1819 908h1v1h-1zM1824 909h8v1h-8zM1826 908h1v1h-1zM1828 908h1v1h-1zM1830 908h1v1h-1zM1833 909h5v1h-5zM1839 909h8v1h-8zM1840 908h1v1h-1zM1848 909h2v1h-2zM1802 913h9v1h-9zM1809 912h1v1h-1zM1812 913h6v1h-6zM1819 913h6v1h-6zM1819 912h1v1h-1zM1823 912h2v1h-2zM1826 913h2v1h-2zM1827 912h1v1h-1zM1829 913h11v1h-11zM1830 912h1v1h-1zM1833 912h1v1h-1zM1836 912h2v1h-2zM1841 913h5v1h-5zM1843 912h2v1h-2zM1847 913h2v1h-2zM1848 912h1v1h-1zM1798 919h3v1h-3zM1802 919h10v1h-10zM1802 918h1v1h-1zM1810 918h1v1h-1zM1813 919h3v1h-3zM1814 918h1v1h-1zM1817 919h9v1h-9zM1822 918h3v1h-3zM1827 919h5v1h-5zM1830 918h1v1h-1zM1833 919h3v1h-3zM1834 918h1v1h-1zM1837 919h7v1h-7zM1837 918h2v1h-2zM1840 918h1v1h-1zM1842 918h1v1h-1zM1798 921h2v1h-2zM1798 920h1v1h-1zM1801 921h7v1h-7zM1801 920h1v1h-1zM1803 920h1v1h-1zM1806 920h2v1h-2zM1809 921h2v1h-2zM1810 920h1v1h-1zM1812 921h11v1h-11zM1812 920h1v1h-1zM1814 920h2v1h-2zM1817 920h2v1h-2zM1824 921h4v1h-4zM1826 920h2v1h-2zM1798 947h10v1h-10zM1800 946h2v1h-2zM1807 946h1v1h-1zM1809 947h10v1h-10zM1813 946h1v1h-1zM1816 946h1v1h-1zM1820 947h3v1h-3zM1821 946h1v1h-1zM1824 947h3v1h-3zM1825 946h1v1h-1zM1828 947h6v1h-6zM1828 946h2v1h-2zM1832 946h1v1h-1zM1835 947h10v1h-10zM1835 946h2v1h-2zM1838 946h2v1h-2zM1843 946h1v1h-1zM1846 947h11v1h-11zM1848 946h1v1h-1zM1851 946h2v1h-2zM1858 947h3v1h-3zM1859 946h1v1h-1zM1862 947h3v1h-3zM1862 946h1v1h-1zM1864 946h1v1h-1z"/><path fill="#5f8c50" fill-opacity="0.26" d="M1814 94h5v2h-5zM1820 94h4v2h-4zM1825 94h10v2h-10zM1836 94h8v2h-8zM1810 126h9v2h-9zM1820 126h11v2h-11zM1832 126h3v2h-3zM1836 126h8v2h-8zM1845 126h2v2h-2zM1848 126h3v2h-3zM1852 126h2v2h-2zM1810 128h2v2h-2zM1813 128h10v2h-10zM1824 128h6v2h-6zM1831 128h5v2h-5zM1837 128h8v2h-8zM1846 128h1v2h-1zM1806 162h8v2h-8zM1815 162h6v2h-6zM1822 162h5v2h-5zM1828 162h8v2h-8zM1837 162h5v2h-5zM1843 162h5v2h-5zM1849 162h8v2h-8zM1858 162h5v2h-5zM1864 162h11v2h-11zM1798 212h2v2h-2zM1801 212h6v2h-6zM1808 212h4v2h-4zM1813 212h2v2h-2zM1816 212h2v2h-2zM1819 212h5v2h-5zM1825 212h4v2h-4zM1830 212h5v2h-5zM1835 212h1v2h-1zM1798 220h10v2h-10zM1809 220h5v2h-5zM1815 220h5v2h-5zM1798 228h7v2h-7zM1806 228h5v2h-5zM1812 228h5v2h-5zM1818 228h5v2h-5zM1824 228h3v2h-3zM1828 228h1v2h-1zM1798 236h7v2h-7zM1806 236h10v2h-10zM1817 236h5v2h-5zM1823 236h3v2h-3zM1827 236h9v2h-9zM1837 236h3v2h-3zM1841 236h2v2h-2zM1844 236h2v2h-2zM1847 236h10v2h-10zM1802 250h3v2h-3zM1806 250h8v2h-8zM1815 250h11v2h-11zM1827 250h11v2h-11zM1839 250h5v2h-5zM1845 250h2v2h-2zM1798 286h9v2h-9zM1808 286h4v2h-4zM1813 286h2v2h-2zM1802 302h10v2h-10zM1813 302h4v2h-4zM1818 302h3v2h-3zM1802 310h2v2h-2zM1805 310h2v2h-2zM1808 310h2v2h-2zM1811 310h6v2h-6zM1818 310h6v2h-6zM1825 310h4v2h-4zM1802 318h4v2h-4zM1807 318h3v2h-3zM1811 318h3v2h-3zM1802 326h8v2h-8zM1811 326h2v2h-2zM1802 332h6v2h-6zM1809 332h9v2h-9zM1819 332h7v2h-7zM1827 332h1v2h-1zM1802 356h9v2h-9zM1812 356h9v2h-9zM1822 356h10v2h-10zM1833 356h3v2h-3zM1798 370h2v2h-2zM1801 370h7v2h-7zM1809 370h3v2h-3zM1813 370h5v2h-5zM1819 370h4v2h-4zM1824 370h7v2h-7zM1832 370h5v2h-5zM1798 410h3v2h-3zM1802 410h7v2h-7zM1810 410h3v2h-3zM1814 410h4v2h-4zM1819 410h3v2h-3zM1823 410h8v2h-8zM1832 410h1v2h-1zM1798 446h10v2h-10zM1809 446h4v2h-4zM1814 446h11v2h-11zM1826 446h5v2h-5zM1831 446h1v2h-1zM1798 462h2v2h-2zM1801 462h4v2h-4zM1806 462h5v2h-5zM1812 462h7v2h-7zM1798 480h9v2h-9zM1808 480h3v2h-3zM1812 480h10v2h-10zM1823 480h5v2h-5zM1829 480h10v2h-10zM1798 516h4v2h-4zM1803 516h6v2h-6zM1810 516h5v2h-5zM1816 516h5v2h-5zM1822 516h4v2h-4zM1827 516h1v2h-1zM1798 540h5v2h-5zM1804 540h11v2h-11zM1816 540h4v2h-4zM1821 540h2v2h-2zM1824 540h1v2h-1zM1802 544h2v2h-2zM1805 544h7v2h-7zM1813 544h5v2h-5zM1802 548h5v2h-5zM1808 548h4v2h-4zM1813 548h7v2h-7zM1798 560h4v2h-4zM1803 560h8v2h-8zM1812 560h3v2h-3zM1798 572h4v2h-4zM1803 572h9v2h-9zM1813 572h5v2h-5zM1818 572h1v2h-1zM1798 590h9v2h-9zM1808 590h8v2h-8zM1817 590h4v2h-4zM1822 590h8v2h-8zM1831 590h8v2h-8zM1798 620h1v2h-1zM1800 620h8v2h-8zM1809 620h10v2h-10zM1798 628h1v2h-1zM1800 628h8v2h-8zM1809 628h6v2h-6zM1816 628h11v2h-11zM1828 628h2v2h-2zM1831 628h8v2h-8zM1802 654h1v2h-1zM1804 654h5v2h-5zM1810 654h3v2h-3zM1814 654h9v2h-9zM1824 654h10v2h-10zM1835 654h4v2h-4zM1840 654h5v2h-5zM1846 654h5v2h-5zM1852 654h3v2h-3zM1798 662h1v2h-1zM1800 662h5v2h-5zM1806 662h2v2h-2zM1809 662h4v2h-4zM1814 662h7v2h-7zM1822 662h3v2h-3zM1826 662h4v2h-4zM1831 662h7v2h-7zM1839 662h7v2h-7zM1798 688h1v2h-1zM1800 688h5v2h-5zM1806 688h2v2h-2zM1809 688h11v2h-11zM1821 688h7v2h-7zM1829 688h5v2h-5zM1835 688h2v2h-2zM1838 688h7v2h-7zM1846 688h4v2h-4zM1802 692h1v2h-1zM1804 692h6v2h-6zM1811 692h8v2h-8zM1820 692h1v2h-1zM1822 692h8v2h-8zM1831 692h9v2h-9zM1841 692h3v2h-3zM1845 692h4v2h-4zM1798 698h1v2h-1zM1800 698h6v2h-6zM1807 698h8v2h-8zM1816 698h7v2h-7zM1824 698h11v2h-11zM1836 698h8v2h-8zM1798 700h1v2h-1zM1800 700h6v2h-6zM1807 700h6v2h-6zM1814 700h9v2h-9zM1824 700h2v2h-2zM1827 700h7v2h-7zM1798 712h1v2h-1zM1800 712h3v2h-3zM1804 712h6v2h-6zM1811 712h2v2h-2zM1814 712h8v2h-8zM1823 712h11v2h-11zM1798 726h1v2h-1zM1800 726h6v2h-6zM1807 726h4v2h-4zM1812 726h8v2h-8zM1821 726h4v2h-4zM1826 726h6v2h-6zM1833 726h11v2h-11zM1845 726h8v2h-8zM1854 726h12v2h-12zM1798 740h1v2h-1zM1800 740h5v2h-5zM1806 740h11v2h-11zM1818 740h3v2h-3zM1822 740h10v2h-10zM1833 740h4v2h-4zM1798 758h3v2h-3zM1802 758h2v2h-2zM1805 758h2v2h-2zM1808 758h7v2h-7zM1816 758h7v2h-7zM1798 764h7v2h-7zM1806 764h7v2h-7zM1814 764h2v2h-2zM1817 764h11v2h-11zM1829 764h4v2h-4zM1798 804h4v2h-4zM1803 804h5v2h-5zM1809 804h8v2h-8zM1818 804h1v2h-1zM1798 822h6v2h-6zM1805 822h3v2h-3zM1809 822h2v2h-2zM1812 822h4v2h-4zM1817 822h7v2h-7zM1825 822h9v2h-9zM1835 822h4v2h-4zM1802 882h9v2h-9zM1812 882h9v2h-9zM1822 882h5v2h-5zM1828 882h3v2h-3zM1832 882h9v2h-9zM1842 882h2v2h-2zM1845 882h10v2h-10zM1856 882h3v2h-3zM1859 882h1v2h-1zM1798 900h3v2h-3zM1802 900h6v2h-6zM1809 900h8v2h-8zM1818 900h1v2h-1zM1798 908h9v2h-9zM1808 908h5v2h-5zM1814 908h9v2h-9zM1824 908h8v2h-8zM1833 908h5v2h-5zM1839 908h8v2h-8zM1848 908h2v2h-2zM1802 912h9v2h-9zM1812 912h6v2h-6zM1819 912h6v2h-6zM1826 912h2v2h-2zM1829 912h11v2h-11zM1841 912h5v2h-5zM1847 912h2v2h-2zM1798 918h3v2h-3zM1802 918h10v2h-10zM1813 918h3v2h-3zM1817 918h9v2h-9zM1827 918h5v2h-5zM1833 918h3v2h-3zM1837 918h7v2h-7zM1798 920h2v2h-2zM1801 920h7v2h-7zM1809 920h2v2h-2zM1812 920h11v2h-11zM1824 920h4v2h-4zM1798 946h10v2h-10zM1809 946h10v2h-10zM1820 946h3v2h-3zM1824 946h3v2h-3zM1828 946h6v2h-6zM1835 946h10v2h-10zM1846 946h11v2h-11zM1858 946h3v2h-3zM1862 946h3v2h-3z"/><path fill="#b8846a" fill-opacity="0.3" d="M1818 99h8v1h-8zM1818 98h2v1h-2zM1822 98h1v1h-1zM1825 98h1v1h-1zM1852 99h4v1h-4zM1852 98h1v1h-1zM1868 99h8v1h-8zM1873 98h1v1h-1zM1875 98h1v1h-1zM1818 101h10v1h-10zM1818 100h2v1h-2zM1829 101h10v1h-10zM1831 100h1v1h-1zM1835 100h1v1h-1zM1845 101h7v1h-7zM1849 100h1v1h-1zM1867 101h7v1h-7zM1871 100h1v1h-1zM1875 101h1v1h-1zM1833 105h2v1h-2zM1833 104h2v1h-2zM1836 105h9v1h-9zM1840 104h1v1h-1zM1842 104h1v1h-1zM1844 104h1v1h-1zM1845 105h1v1h-1zM1878 107h9v1h-9zM1878 106h1v1h-1zM1881 106h3v1h-3zM1885 106h1v1h-1zM1898 107h8v1h-8zM1898 106h2v1h-2zM1905 106h1v1h-1zM1871 115h9v1h-9zM1873 114h1v1h-1zM1875 114h1v1h-1zM1878 114h2v1h-2zM1881 115h12v1h-12zM1883 114h1v1h-1zM1886 114h1v1h-1zM1888 114h2v1h-2zM1891 114h1v1h-1zM1833 117h3v1h-3zM1837 117h3v1h-3zM1837 116h3v1h-3zM1841 117h3v1h-3zM1841 116h1v1h-1zM1845 117h1v1h-1zM1851 119h12v1h-12zM1851 118h5v1h-5zM1859 118h1v1h-1zM1861 118h1v1h-1zM1864 119h12v1h-12zM1865 118h2v1h-2zM1872 118h2v1h-2zM1905 119h1v1h-1zM1905 118h1v1h-1zM1810 133h10v1h-10zM1812 132h1v1h-1zM1815 132h3v1h-3zM1827 133h4v1h-4zM1830 132h1v1h-1zM1843 133h4v1h-4zM1842 135h11v1h-11zM1844 134h1v1h-1zM1848 134h1v1h-1zM1850 134h1v1h-1zM1860 135h5v1h-5zM1864 134h1v1h-1zM1866 135h8v1h-8zM1866 134h2v1h-2zM1870 134h1v1h-1zM1873 134h1v1h-1zM1875 135h3v1h-3zM1875 134h1v1h-1zM1810 137h8v1h-8zM1816 136h2v1h-2zM1851 137h3v1h-3zM1851 136h3v1h-3zM1810 139h3v1h-3zM1811 138h1v1h-1zM1832 141h7v1h-7zM1835 140h1v1h-1zM1840 141h3v1h-3zM1844 141h2v1h-2zM1844 140h1v1h-1zM1857 143h9v1h-9zM1860 142h2v1h-2zM1865 142h1v1h-1zM1867 143h3v1h-3zM1867 142h1v1h-1zM1876 143h4v1h-4zM1881 143h9v1h-9zM1882 142h2v1h-2zM1891 143h9v1h-9zM1894 142h1v1h-1zM1899 142h1v1h-1zM1901 143h3v1h-3zM1902 142h1v1h-1zM1830 157h12v1h-12zM1831 156h3v1h-3zM1854 157h3v1h-3zM1854 156h1v1h-1zM1858 157h5v1h-5zM1858 156h1v1h-1zM1862 156h1v1h-1zM1864 157h6v1h-6zM1865 156h4v1h-4zM1871 157h8v1h-8zM1871 156h2v1h-2zM1875 156h1v1h-1zM1880 157h2v1h-2zM1881 156h1v1h-1zM1813 165h5v1h-5zM1816 164h1v1h-1zM1819 165h4v1h-4zM1819 164h2v1h-2zM1825 165h5v1h-5zM1825 164h1v1h-1zM1831 165h3v1h-3zM1831 164h1v1h-1zM1833 164h1v1h-1zM1835 165h7v1h-7zM1835 164h2v1h-2zM1840 164h2v1h-2zM1843 165h4v1h-4zM1843 164h1v1h-1zM1848 165h7v1h-7zM1849 164h1v1h-1zM1851 164h2v1h-2zM1854 164h1v1h-1zM1856 165h9v1h-9zM1856 164h1v1h-1zM1861 164h1v1h-1zM1863 164h1v1h-1zM1866 165h11v1h-11zM1866 164h1v1h-1zM1870 164h1v1h-1zM1874 164h1v1h-1zM1878 165h8v1h-8zM1881 164h1v1h-1zM1884 164h2v1h-2zM1887 165h4v1h-4zM1828 167h3v1h-3zM1828 166h2v1h-2zM1832 167h7v1h-7zM1834 166h1v1h-1zM1836 166h1v1h-1zM1838 166h1v1h-1zM1840 167h7v1h-7zM1841 166h1v1h-1zM1843 166h1v1h-1zM1845 166h1v1h-1zM1861 167h5v1h-5zM1864 166h1v1h-1zM1846 173h3v1h-3zM1847 172h1v1h-1zM1850 173h11v1h-11zM1854 172h1v1h-1zM1868 173h8v1h-8zM1868 172h4v1h-4zM1873 172h3v1h-3zM1877 173h7v1h-7zM1878 172h1v1h-1zM1881 172h1v1h-1zM1841 179h5v1h-5zM1841 178h1v1h-1zM1847 179h6v1h-6zM1851 178h1v1h-1zM1854 179h3v1h-3zM1856 178h1v1h-1zM1858 179h12v1h-12zM1858 178h1v1h-1zM1860 178h1v1h-1zM1862 178h1v1h-1zM1865 178h1v1h-1zM1868 178h1v1h-1zM1871 179h4v1h-4zM1872 178h1v1h-1zM1874 178h1v1h-1zM1839 185h7v1h-7zM1841 184h1v1h-1zM1844 184h2v1h-2zM1847 185h6v1h-6zM1849 184h2v1h-2zM1852 184h1v1h-1zM1854 185h2v1h-2zM1855 184h1v1h-1zM1857 185h5v1h-5zM1858 184h2v1h-2zM1827 189h9v1h-9zM1828 188h1v1h-1zM1833 188h2v1h-2zM1837 189h10v1h-10zM1838 188h1v1h-1zM1844 188h2v1h-2zM1848 189h6v1h-6zM1848 188h1v1h-1zM1850 188h1v1h-1zM1852 188h1v1h-1zM1855 189h4v1h-4zM1855 188h2v1h-2zM1864 189h8v1h-8zM1864 188h2v1h-2zM1867 188h4v1h-4zM1873 189h1v1h-1zM1798 199h3v1h-3zM1798 201h10v1h-10zM1802 200h1v1h-1zM1805 200h1v1h-1zM1817 201h6v1h-6zM1817 200h1v1h-1zM1820 200h1v1h-1zM1822 200h1v1h-1zM1838 201h6v1h-6zM1838 200h1v1h-1zM1850 201h9v1h-9zM1853 200h1v1h-1zM1858 200h1v1h-1zM1798 203h12v1h-12zM1807 202h1v1h-1zM1809 202h1v1h-1zM1816 203h5v1h-5zM1816 202h2v1h-2zM1819 202h1v1h-1zM1822 203h10v1h-10zM1825 202h2v1h-2zM1828 202h4v1h-4zM1833 203h9v1h-9zM1836 202h2v1h-2zM1840 202h1v1h-1zM1798 205h3v1h-3zM1798 204h2v1h-2zM1856 215h11v1h-11zM1856 214h1v1h-1zM1858 214h2v1h-2zM1861 214h4v1h-4zM1868 215h6v1h-6zM1872 214h1v1h-1zM1820 231h4v1h-4zM1822 230h1v1h-1zM1825 231h9v1h-9zM1825 230h4v1h-4zM1806 243h8v1h-8zM1807 242h2v1h-2zM1810 242h1v1h-1zM1812 242h1v1h-1zM1815 243h4v1h-4zM1816 242h2v1h-2zM1820 247h10v1h-10zM1825 246h2v1h-2zM1831 247h8v1h-8zM1831 246h2v1h-2zM1836 246h1v1h-1zM1840 247h10v1h-10zM1845 246h1v1h-1zM1849 246h1v1h-1zM1825 249h10v1h-10zM1825 248h1v1h-1zM1830 248h1v1h-1zM1833 248h1v1h-1zM1836 249h8v1h-8zM1838 248h1v1h-1zM1845 249h6v1h-6zM1848 248h3v1h-3zM1852 249h4v1h-4zM1852 248h1v1h-1zM1835 253h5v1h-5zM1836 252h2v1h-2zM1839 252h1v1h-1zM1841 253h11v1h-11zM1847 252h2v1h-2zM1853 253h9v1h-9zM1858 252h2v1h-2zM1816 257h2v1h-2zM1817 256h1v1h-1zM1819 257h5v1h-5zM1819 256h1v1h-1zM1821 256h2v1h-2zM1825 257h2v1h-2zM1806 263h14v1h-14zM1809 262h1v1h-1zM1811 262h1v1h-1zM1819 262h1v1h-1zM1837 263h3v1h-3zM1838 262h1v1h-1zM1806 265h7v1h-7zM1808 264h1v1h-1zM1810 264h1v1h-1zM1814 265h6v1h-6zM1814 264h2v1h-2zM1838 265h1v1h-1zM1825 271h11v1h-11zM1830 270h1v1h-1zM1833 270h2v1h-2zM1837 271h7v1h-7zM1837 270h1v1h-1zM1839 270h2v1h-2zM1832 273h3v1h-3zM1836 273h5v1h-5zM1838 272h1v1h-1zM1842 273h5v1h-5zM1842 272h4v1h-4zM1848 273h9v1h-9zM1851 272h6v1h-6zM1820 277h7v1h-7zM1820 276h1v1h-1zM1822 276h1v1h-1zM1853 277h7v1h-7zM1854 276h2v1h-2zM1858 276h2v1h-2zM1861 277h7v1h-7zM1862 276h5v1h-5zM1809 283h8v1h-8zM1810 282h1v1h-1zM1812 282h1v1h-1zM1814 282h1v1h-1zM1816 282h1v1h-1zM1818 283h2v1h-2zM1818 282h2v1h-2zM1822 283h8v1h-8zM1823 282h2v1h-2zM1826 282h2v1h-2zM1831 283h3v1h-3zM1844 283h6v1h-6zM1845 282h1v1h-1zM1847 282h1v1h-1zM1851 283h10v1h-10zM1851 282h1v1h-1zM1854 282h1v1h-1zM1859 282h2v1h-2zM1869 283h2v1h-2zM1869 282h1v1h-1zM1806 293h12v1h-12zM1806 292h2v1h-2zM1810 292h1v1h-1zM1813 292h1v1h-1zM1815 292h1v1h-1zM1819 293h8v1h-8zM1819 292h1v1h-1zM1821 292h3v1h-3zM1825 292h2v1h-2zM1806 295h6v1h-6zM1807 294h1v1h-1zM1809 294h3v1h-3zM1822 295h4v1h-4zM1824 294h1v1h-1zM1806 297h13v1h-13zM1817 296h2v1h-2zM1828 297h5v1h-5zM1830 296h1v1h-1zM1830 305h11v1h-11zM1830 304h1v1h-1zM1836 304h1v1h-1zM1839 304h2v1h-2zM1842 305h7v1h-7zM1847 304h1v1h-1zM1840 307h7v1h-7zM1841 306h5v1h-5zM1848 307h6v1h-6zM1849 306h1v1h-1zM1852 306h1v1h-1zM1855 307h11v1h-11zM1855 306h1v1h-1zM1859 306h2v1h-2zM1862 306h1v1h-1zM1865 306h1v1h-1zM1867 307h4v1h-4zM1824 315h8v1h-8zM1825 314h1v1h-1zM1828 314h1v1h-1zM1831 314h1v1h-1zM1841 315h1v1h-1zM1834 323h5v1h-5zM1835 322h1v1h-1zM1837 322h2v1h-2zM1840 323h8v1h-8zM1840 322h4v1h-4zM1849 323h10v1h-10zM1850 322h1v1h-1zM1852 322h1v1h-1zM1856 322h1v1h-1zM1859 323h1v1h-1zM1817 329h6v1h-6zM1818 328h5v1h-5zM1842 347h3v1h-3zM1843 346h1v1h-1zM1846 347h9v1h-9zM1846 346h1v1h-1zM1848 346h2v1h-2zM1853 346h1v1h-1zM1856 347h6v1h-6zM1856 346h1v1h-1zM1858 346h2v1h-2zM1861 346h1v1h-1zM1863 347h8v1h-8zM1863 346h3v1h-3zM1868 346h1v1h-1zM1813 349h4v1h-4zM1814 348h1v1h-1zM1818 349h3v1h-3zM1818 348h3v1h-3zM1821 349h1v1h-1zM1824 349h7v1h-7zM1826 348h1v1h-1zM1828 348h2v1h-2zM1832 349h6v1h-6zM1832 348h1v1h-1zM1836 348h1v1h-1zM1851 349h7v1h-7zM1854 348h1v1h-1zM1869 349h11v1h-11zM1869 348h1v1h-1zM1871 348h1v1h-1zM1875 348h5v1h-5zM1824 353h4v1h-4zM1824 352h1v1h-1zM1826 352h1v1h-1zM1839 353h6v1h-6zM1840 352h2v1h-2zM1858 353h10v1h-10zM1864 352h1v1h-1zM1867 352h1v1h-1zM1869 353h8v1h-8zM1871 352h3v1h-3zM1878 353h4v1h-4zM1832 365h3v1h-3zM1833 364h2v1h-2zM1836 365h3v1h-3zM1837 364h1v1h-1zM1840 365h9v1h-9zM1843 364h2v1h-2zM1847 364h2v1h-2zM1856 365h5v1h-5zM1856 364h2v1h-2zM1862 365h3v1h-3zM1864 364h1v1h-1zM1809 367h5v1h-5zM1809 366h1v1h-1zM1812 366h1v1h-1zM1815 367h4v1h-4zM1816 366h1v1h-1zM1821 367h9v1h-9zM1822 366h2v1h-2zM1831 367h7v1h-7zM1836 366h1v1h-1zM1839 367h3v1h-3zM1843 367h4v1h-4zM1843 366h2v1h-2zM1846 366h1v1h-1zM1848 367h5v1h-5zM1851 366h2v1h-2zM1854 367h5v1h-5zM1855 366h1v1h-1zM1857 366h2v1h-2zM1871 367h9v1h-9zM1871 366h1v1h-1zM1873 366h3v1h-3zM1879 366h1v1h-1zM1806 377h9v1h-9zM1809 376h2v1h-2zM1812 376h1v1h-1zM1816 377h9v1h-9zM1816 376h1v1h-1zM1819 376h2v1h-2zM1806 379h10v1h-10zM1806 378h1v1h-1zM1811 378h1v1h-1zM1815 378h1v1h-1zM1817 379h1v1h-1zM1817 378h1v1h-1zM1806 381h10v1h-10zM1806 380h3v1h-3zM1815 380h1v1h-1zM1824 385h4v1h-4zM1825 384h1v1h-1zM1827 384h1v1h-1zM1829 385h6v1h-6zM1830 384h1v1h-1zM1836 385h6v1h-6zM1837 384h1v1h-1zM1840 384h2v1h-2zM1843 385h9v1h-9zM1844 384h1v1h-1zM1847 384h2v1h-2zM1853 385h8v1h-8zM1859 384h1v1h-1zM1806 393h8v1h-8zM1807 392h1v1h-1zM1812 392h1v1h-1zM1815 393h9v1h-9zM1815 392h1v1h-1zM1820 392h1v1h-1zM1824 393h1v1h-1zM1824 392h1v1h-1zM1806 395h12v1h-12zM1806 394h3v1h-3zM1811 394h1v1h-1zM1816 394h2v1h-2zM1806 397h8v1h-8zM1807 396h2v1h-2zM1811 396h2v1h-2zM1823 397h3v1h-3zM1824 396h2v1h-2zM1827 397h5v1h-5zM1831 396h1v1h-1zM1839 397h2v1h-2zM1806 399h14v1h-14zM1810 398h1v1h-1zM1813 398h1v1h-1zM1816 398h2v1h-2zM1825 399h1v1h-1zM1825 398h1v1h-1zM1806 401h14v1h-14zM1806 400h1v1h-1zM1808 400h1v1h-1zM1813 400h1v1h-1zM1815 400h2v1h-2zM1821 401h5v1h-5zM1822 400h1v1h-1zM1806 403h9v1h-9zM1810 402h1v1h-1zM1812 402h1v1h-1zM1814 402h1v1h-1zM1816 403h2v1h-2zM1832 407h9v1h-9zM1834 406h1v1h-1zM1837 406h2v1h-2zM1842 407h5v1h-5zM1842 406h2v1h-2zM1866 407h5v1h-5zM1870 406h1v1h-1zM1802 415h12v1h-12zM1802 414h2v1h-2zM1805 414h1v1h-1zM1807 414h1v1h-1zM1810 414h2v1h-2zM1813 414h1v1h-1zM1815 415h10v1h-10zM1815 414h1v1h-1zM1817 414h4v1h-4zM1802 417h6v1h-6zM1803 416h1v1h-1zM1807 416h1v1h-1zM1816 417h5v1h-5zM1818 416h1v1h-1zM1802 419h10v1h-10zM1803 418h3v1h-3zM1807 418h3v1h-3zM1822 419h4v1h-4zM1822 418h1v1h-1zM1824 418h1v1h-1zM1827 419h6v1h-6zM1832 418h1v1h-1zM1834 419h3v1h-3zM1836 418h1v1h-1zM1802 421h10v1h-10zM1802 420h2v1h-2zM1806 420h1v1h-1zM1808 420h1v1h-1zM1824 421h6v1h-6zM1826 420h1v1h-1zM1802 423h12v1h-12zM1803 422h1v1h-1zM1807 422h2v1h-2zM1812 422h2v1h-2zM1815 423h4v1h-4zM1816 422h2v1h-2zM1820 423h4v1h-4zM1823 422h1v1h-1zM1802 425h8v1h-8zM1803 424h2v1h-2zM1806 424h2v1h-2zM1809 424h1v1h-1zM1811 425h4v1h-4zM1812 424h1v1h-1zM1802 427h6v1h-6zM1803 426h1v1h-1zM1820 427h4v1h-4zM1825 427h3v1h-3zM1828 427h1v1h-1zM1802 429h7v1h-7zM1803 428h2v1h-2zM1806 431h8v1h-8zM1807 430h1v1h-1zM1809 430h4v1h-4zM1806 433h12v1h-12zM1806 432h2v1h-2zM1814 432h2v1h-2zM1806 435h6v1h-6zM1806 434h1v1h-1zM1808 434h2v1h-2zM1839 435h3v1h-3zM1841 434h1v1h-1zM1843 435h1v1h-1zM1802 439h13v1h-13zM1803 438h3v1h-3zM1808 438h2v1h-2zM1814 438h1v1h-1zM1802 441h10v1h-10zM1803 440h1v1h-1zM1809 440h2v1h-2zM1818 441h5v1h-5zM1822 451h10v1h-10zM1824 450h2v1h-2zM1827 450h3v1h-3zM1850 451h1v1h-1zM1853 453h8v1h-8zM1856 452h1v1h-1zM1860 452h1v1h-1zM1862 453h4v1h-4zM1865 452h1v1h-1zM1833 457h3v1h-3zM1833 456h1v1h-1zM1837 457h9v1h-9zM1839 456h2v1h-2zM1842 456h3v1h-3zM1847 457h2v1h-2zM1850 457h5v1h-5zM1850 456h1v1h-1zM1853 456h1v1h-1zM1808 467h9v1h-9zM1808 466h1v1h-1zM1811 466h1v1h-1zM1815 466h1v1h-1zM1818 467h5v1h-5zM1819 466h1v1h-1zM1812 469h8v1h-8zM1812 468h2v1h-2zM1816 468h2v1h-2zM1825 469h5v1h-5zM1828 468h2v1h-2zM1811 471h4v1h-4zM1811 470h1v1h-1zM1813 470h1v1h-1zM1821 473h4v1h-4zM1822 472h1v1h-1zM1826 473h8v1h-8zM1832 472h2v1h-2zM1835 473h9v1h-9zM1837 472h2v1h-2zM1840 472h2v1h-2zM1845 473h3v1h-3zM1845 472h1v1h-1zM1847 472h1v1h-1zM1849 473h3v1h-3zM1849 472h1v1h-1zM1829 475h4v1h-4zM1830 474h1v1h-1zM1834 475h10v1h-10zM1836 474h2v1h-2zM1842 474h2v1h-2zM1806 487h7v1h-7zM1806 486h3v1h-3zM1812 486h1v1h-1zM1814 487h4v1h-4zM1815 486h1v1h-1zM1819 487h5v1h-5zM1821 486h1v1h-1zM1825 487h5v1h-5zM1826 486h1v1h-1zM1806 489h9v1h-9zM1808 488h1v1h-1zM1810 488h1v1h-1zM1814 488h1v1h-1zM1816 489h7v1h-7zM1820 488h3v1h-3zM1824 489h5v1h-5zM1828 488h1v1h-1zM1841 489h9v1h-9zM1841 488h1v1h-1zM1844 488h2v1h-2zM1850 489h1v1h-1zM1806 491h6v1h-6zM1807 490h2v1h-2zM1811 490h1v1h-1zM1832 497h8v1h-8zM1834 496h2v1h-2zM1837 496h1v1h-1zM1839 496h1v1h-1zM1798 509h3v1h-3zM1799 508h1v1h-1zM1798 511h14v1h-14zM1800 510h1v1h-1zM1803 510h2v1h-2zM1848 511h7v1h-7zM1848 510h1v1h-1zM1853 510h1v1h-1zM1860 511h1v1h-1zM1860 510h1v1h-1zM1798 513h14v1h-14zM1800 512h2v1h-2zM1805 512h1v1h-1zM1807 512h1v1h-1zM1818 513h3v1h-3zM1820 512h1v1h-1zM1798 515h3v1h-3zM1826 519h11v1h-11zM1833 518h1v1h-1zM1838 519h5v1h-5zM1838 518h1v1h-1zM1802 521h6v1h-6zM1804 520h1v1h-1zM1809 521h10v1h-10zM1813 520h1v1h-1zM1825 521h1v1h-1zM1802 523h13v1h-13zM1802 522h3v1h-3zM1806 522h1v1h-1zM1808 522h1v1h-1zM1812 522h1v1h-1zM1814 522h1v1h-1zM1802 525h8v1h-8zM1805 524h1v1h-1zM1807 524h1v1h-1zM1809 524h1v1h-1zM1809 533h9v1h-9zM1809 532h1v1h-1zM1814 532h1v1h-1zM1816 532h1v1h-1zM1818 533h1v1h-1zM1821 533h6v1h-6zM1822 532h1v1h-1zM1825 532h1v1h-1zM1828 533h12v1h-12zM1828 532h1v1h-1zM1833 532h2v1h-2zM1838 532h1v1h-1zM1845 533h3v1h-3zM1845 532h1v1h-1zM1847 532h1v1h-1zM1849 533h5v1h-5zM1852 532h2v1h-2zM1813 537h10v1h-10zM1815 536h1v1h-1zM1820 536h1v1h-1zM1822 536h1v1h-1zM1828 537h5v1h-5zM1828 536h3v1h-3zM1834 537h2v1h-2zM1839 553h9v1h-9zM1839 552h3v1h-3zM1845 552h2v1h-2zM1867 553h9v1h-9zM1872 552h1v1h-1zM1876 553h1v1h-1zM1828 557h4v1h-4zM1830 556h1v1h-1zM1833 557h6v1h-6zM1833 556h4v1h-4zM1840 557h4v1h-4zM1831 567h5v1h-5zM1831 566h1v1h-1zM1834 566h2v1h-2zM1837 567h5v1h-5zM1839 566h3v1h-3zM1853 567h10v1h-10zM1853 566h2v1h-2zM1856 566h1v1h-1zM1864 567h2v1h-2zM1864 566h1v1h-1zM1812 579h9v1h-9zM1813 578h1v1h-1zM1817 578h1v1h-1zM1819 578h2v1h-2zM1822 579h6v1h-6zM1826 578h1v1h-1zM1829 579h1v1h-1zM1816 581h4v1h-4zM1819 580h1v1h-1zM1830 581h9v1h-9zM1831 580h2v1h-2zM1836 580h3v1h-3zM1811 583h8v1h-8zM1811 582h1v1h-1zM1814 582h3v1h-3zM1820 583h3v1h-3zM1821 582h2v1h-2zM1824 583h6v1h-6zM1828 582h2v1h-2zM1831 583h6v1h-6zM1836 582h1v1h-1zM1838 583h5v1h-5zM1844 583h7v1h-7zM1847 582h1v1h-1zM1852 583h4v1h-4zM1852 582h1v1h-1zM1809 585h7v1h-7zM1809 584h1v1h-1zM1814 584h1v1h-1zM1834 585h3v1h-3zM1834 584h2v1h-2zM1841 595h2v1h-2zM1842 594h1v1h-1zM1844 595h2v1h-2zM1845 594h1v1h-1zM1847 595h9v1h-9zM1848 594h2v1h-2zM1853 594h1v1h-1zM1857 595h11v1h-11zM1858 594h1v1h-1zM1860 594h1v1h-1zM1868 595h1v1h-1zM1806 597h10v1h-10zM1808 596h2v1h-2zM1813 596h1v1h-1zM1806 599h11v1h-11zM1809 598h4v1h-4zM1825 599h7v1h-7zM1833 599h9v1h-9zM1834 598h1v1h-1zM1837 598h2v1h-2zM1843 599h10v1h-10zM1843 598h4v1h-4zM1848 598h2v1h-2zM1830 605h5v1h-5zM1834 604h1v1h-1zM1836 605h6v1h-6zM1841 604h1v1h-1zM1843 605h8v1h-8zM1846 604h1v1h-1zM1852 605h5v1h-5zM1852 604h5v1h-5zM1857 605h1v1h-1zM1805 609h2v1h-2zM1805 608h1v1h-1zM1808 609h7v1h-7zM1817 609h4v1h-4zM1817 608h1v1h-1zM1819 608h1v1h-1zM1822 609h4v1h-4zM1822 608h1v1h-1zM1835 609h10v1h-10zM1835 608h2v1h-2zM1839 608h3v1h-3zM1843 608h1v1h-1zM1846 609h7v1h-7zM1847 608h1v1h-1zM1849 608h2v1h-2zM1854 609h8v1h-8zM1854 608h3v1h-3zM1798 617h2v1h-2zM1798 616h2v1h-2zM1800 617h6v1h-6zM1800 616h3v1h-3zM1805 616h1v1h-1zM1807 617h1v1h-1zM1809 617h7v1h-7zM1817 617h3v1h-3zM1817 616h1v1h-1zM1821 617h4v1h-4zM1826 617h7v1h-7zM1826 616h1v1h-1zM1828 616h1v1h-1zM1832 616h1v1h-1zM1834 617h2v1h-2zM1837 617h8v1h-8zM1843 616h1v1h-1zM1846 617h9v1h-9zM1849 616h1v1h-1zM1856 617h5v1h-5zM1856 616h1v1h-1zM1860 616h1v1h-1zM1862 617h2v1h-2zM1865 617h7v1h-7zM1873 617h6v1h-6zM1873 616h1v1h-1zM1877 616h2v1h-2zM1879 617h2v1h-2zM1879 616h2v1h-2zM1810 625h7v1h-7zM1810 624h1v1h-1zM1816 624h1v1h-1zM1820 625h8v1h-8zM1820 624h2v1h-2zM1825 624h1v1h-1zM1827 624h1v1h-1zM1829 625h8v1h-8zM1850 625h1v1h-1zM1852 625h5v1h-5zM1852 624h1v1h-1zM1854 624h1v1h-1zM1856 624h1v1h-1zM1858 625h9v1h-9zM1869 625h2v1h-2zM1869 624h1v1h-1zM1872 625h1v1h-1zM1872 624h1v1h-1zM1903 625h1v1h-1zM1903 624h1v1h-1zM1814 637h7v1h-7zM1814 636h1v1h-1zM1820 636h1v1h-1zM1823 637h9v1h-9zM1823 636h2v1h-2zM1833 637h4v1h-4zM1836 636h1v1h-1zM1838 637h2v1h-2zM1838 636h1v1h-1zM1841 637h12v1h-12zM1842 636h1v1h-1zM1844 636h1v1h-1zM1854 637h10v1h-10zM1855 636h1v1h-1zM1860 636h1v1h-1zM1865 637h5v1h-5zM1867 636h1v1h-1zM1869 636h1v1h-1zM1814 641h7v1h-7zM1814 640h1v1h-1zM1820 640h1v1h-1zM1823 641h9v1h-9zM1823 640h2v1h-2zM1833 641h4v1h-4zM1836 640h1v1h-1zM1838 641h2v1h-2zM1838 640h1v1h-1zM1841 641h2v1h-2zM1841 640h2v1h-2zM1844 641h10v1h-10zM1845 640h1v1h-1zM1850 640h1v1h-1zM1855 641h2v1h-2zM1858 641h5v1h-5zM1858 640h1v1h-1zM1862 640h1v1h-1zM1814 649h7v1h-7zM1814 648h1v1h-1zM1820 648h1v1h-1zM1823 649h9v1h-9zM1823 648h2v1h-2zM1831 648h1v1h-1zM1833 649h4v1h-4zM1836 648h1v1h-1zM1838 649h2v1h-2zM1838 648h1v1h-1zM1841 649h2v1h-2zM1842 648h1v1h-1zM1844 649h5v1h-5zM1844 648h1v1h-1zM1848 648h1v1h-1zM1850 649h1v1h-1zM1850 648h1v1h-1zM1852 649h11v1h-11zM1853 648h1v1h-1zM1858 648h1v1h-1zM1862 648h1v1h-1zM1814 653h7v1h-7zM1814 652h1v1h-1zM1820 652h1v1h-1zM1823 653h9v1h-9zM1823 652h2v1h-2zM1831 652h1v1h-1zM1833 653h4v1h-4zM1836 652h1v1h-1zM1838 653h2v1h-2zM1838 652h1v1h-1zM1841 653h3v1h-3zM1841 652h3v1h-3zM1845 653h10v1h-10zM1846 652h1v1h-1zM1851 652h1v1h-1zM1856 653h2v1h-2zM1859 653h5v1h-5zM1859 652h1v1h-1zM1863 652h1v1h-1zM1840 657h3v1h-3zM1840 656h3v1h-3zM1846 657h3v1h-3zM1846 656h2v1h-2zM1850 657h1v1h-1zM1850 656h1v1h-1zM1853 657h2v1h-2zM1853 656h1v1h-1zM1856 657h1v1h-1zM1856 656h1v1h-1zM1858 657h2v1h-2zM1858 656h1v1h-1zM1861 657h1v1h-1zM1861 656h1v1h-1zM1863 657h5v1h-5zM1863 656h3v1h-3zM1867 656h1v1h-1zM1814 659h7v1h-7zM1814 658h1v1h-1zM1820 658h1v1h-1zM1823 659h9v1h-9zM1823 658h2v1h-2zM1831 658h1v1h-1zM1833 659h6v1h-6zM1838 658h1v1h-1zM1840 659h7v1h-7zM1843 658h1v1h-1zM1848 659h7v1h-7zM1851 658h1v1h-1zM1856 659h12v1h-12zM1856 658h1v1h-1zM1859 658h1v1h-1zM1861 658h1v1h-1zM1864 658h1v1h-1zM1869 659h11v1h-11zM1875 658h1v1h-1zM1881 659h2v1h-2zM1884 659h10v1h-10zM1884 658h1v1h-1zM1887 658h2v1h-2zM1891 658h1v1h-1zM1893 658h1v1h-1zM1802 667h12v1h-12zM1802 666h1v1h-1zM1812 666h2v1h-2zM1802 669h9v1h-9zM1802 668h1v1h-1zM1810 668h1v1h-1zM1802 671h8v1h-8zM1802 670h1v1h-1zM1804 670h1v1h-1zM1806 670h1v1h-1zM1809 670h1v1h-1zM1812 671h9v1h-9zM1812 670h1v1h-1zM1820 670h1v1h-1zM1806 681h7v1h-7zM1806 680h1v1h-1zM1812 680h1v1h-1zM1816 681h4v1h-4zM1816 680h2v1h-2zM1821 681h7v1h-7zM1822 680h1v1h-1zM1826 680h1v1h-1zM1829 681h4v1h-4zM1829 680h1v1h-1zM1847 681h8v1h-8zM1856 681h4v1h-4zM1856 680h2v1h-2zM1861 681h2v1h-2zM1862 680h1v1h-1zM1864 681h5v1h-5zM1864 680h1v1h-1zM1868 680h1v1h-1zM1870 681h6v1h-6zM1870 680h1v1h-1zM1872 680h1v1h-1zM1877 681h8v1h-8zM1878 680h1v1h-1zM1881 680h1v1h-1zM1886 681h1v1h-1zM1888 681h3v1h-3zM1892 681h5v1h-5zM1896 680h1v1h-1zM1806 683h18v1h-18zM1806 682h1v1h-1zM1811 682h1v1h-1zM1823 682h1v1h-1zM1810 705h7v1h-7zM1810 704h1v1h-1zM1816 704h1v1h-1zM1820 705h7v1h-7zM1820 704h2v1h-2zM1824 704h1v1h-1zM1826 704h1v1h-1zM1828 705h2v1h-2zM1828 704h1v1h-1zM1831 705h5v1h-5zM1832 704h1v1h-1zM1835 704h1v1h-1zM1837 705h6v1h-6zM1838 704h1v1h-1zM1842 704h1v1h-1zM1857 705h10v1h-10zM1860 704h1v1h-1zM1866 704h1v1h-1zM1866 717h6v1h-6zM1866 716h1v1h-1zM1884 717h1v1h-1zM1884 716h1v1h-1zM1811 723h12v1h-12zM1811 722h2v1h-2zM1815 722h1v1h-1zM1818 722h1v1h-1zM1821 722h1v1h-1zM1824 723h3v1h-3zM1824 722h1v1h-1zM1840 723h1v1h-1zM1842 723h8v1h-8zM1842 722h2v1h-2zM1859 723h1v1h-1zM1861 723h9v1h-9zM1868 722h1v1h-1zM1887 723h4v1h-4zM1892 723h7v1h-7zM1895 722h1v1h-1zM1816 729h7v1h-7zM1816 728h1v1h-1zM1821 728h2v1h-2zM1825 729h12v1h-12zM1825 728h1v1h-1zM1829 728h1v1h-1zM1835 728h2v1h-2zM1839 729h9v1h-9zM1839 728h1v1h-1zM1845 728h3v1h-3zM1850 729h13v1h-13zM1850 728h1v1h-1zM1854 728h1v1h-1zM1859 728h4v1h-4zM1815 733h21v1h-21zM1815 732h1v1h-1zM1820 732h1v1h-1zM1828 732h1v1h-1zM1830 732h1v1h-1zM1832 732h1v1h-1zM1837 733h9v1h-9zM1839 732h1v1h-1zM1844 732h1v1h-1zM1856 733h1v1h-1zM1856 732h1v1h-1zM1814 737h7v1h-7zM1814 736h1v1h-1zM1820 736h1v1h-1zM1824 737h7v1h-7zM1824 736h2v1h-2zM1828 736h1v1h-1zM1830 736h1v1h-1zM1832 737h2v1h-2zM1832 736h1v1h-1zM1835 737h6v1h-6zM1839 736h1v1h-1zM1842 737h4v1h-4zM1847 737h8v1h-8zM1847 736h1v1h-1zM1849 736h1v1h-1zM1851 736h1v1h-1zM1856 737h2v1h-2zM1871 737h1v1h-1zM1871 736h1v1h-1zM1802 745h6v1h-6zM1802 744h2v1h-2zM1806 744h2v1h-2zM1810 745h11v1h-11zM1810 744h2v1h-2zM1815 744h2v1h-2zM1819 744h2v1h-2zM1802 747h6v1h-6zM1802 746h1v1h-1zM1806 746h2v1h-2zM1817 747h6v1h-6zM1817 746h1v1h-1zM1821 746h2v1h-2zM1802 749h10v1h-10zM1802 748h1v1h-1zM1811 748h1v1h-1zM1802 751h10v1h-10zM1802 750h1v1h-1zM1810 750h2v1h-2zM1802 753h10v1h-10zM1802 752h2v1h-2zM1805 752h1v1h-1zM1807 752h1v1h-1zM1811 752h1v1h-1zM1802 769h14v1h-14zM1802 768h1v1h-1zM1805 768h2v1h-2zM1811 768h1v1h-1zM1814 768h1v1h-1zM1802 771h7v1h-7zM1803 770h5v1h-5zM1810 771h7v1h-7zM1810 770h1v1h-1zM1812 770h3v1h-3zM1802 773h12v1h-12zM1802 772h1v1h-1zM1808 772h3v1h-3zM1812 772h1v1h-1zM1815 773h9v1h-9zM1818 772h1v1h-1zM1821 772h1v1h-1zM1823 772h1v1h-1zM1831 773h5v1h-5zM1835 772h1v1h-1zM1802 775h11v1h-11zM1804 774h1v1h-1zM1807 774h2v1h-2zM1811 774h2v1h-2zM1831 775h7v1h-7zM1836 774h1v1h-1zM1839 775h6v1h-6zM1840 774h1v1h-1zM1802 777h6v1h-6zM1803 776h1v1h-1zM1809 777h9v1h-9zM1810 776h3v1h-3zM1814 776h1v1h-1zM1816 776h1v1h-1zM1802 779h14v1h-14zM1806 778h1v1h-1zM1808 778h1v1h-1zM1810 778h1v1h-1zM1812 778h1v1h-1zM1822 779h7v1h-7zM1824 778h2v1h-2zM1802 781h7v1h-7zM1808 780h1v1h-1zM1810 781h3v1h-3zM1811 780h1v1h-1zM1806 783h8v1h-8zM1813 782h1v1h-1zM1815 783h5v1h-5zM1815 782h1v1h-1zM1818 782h2v1h-2zM1832 783h1v1h-1zM1806 785h10v1h-10zM1806 784h2v1h-2zM1813 784h1v1h-1zM1815 784h1v1h-1zM1826 785h6v1h-6zM1826 784h2v1h-2zM1829 784h3v1h-3zM1806 787h9v1h-9zM1806 786h2v1h-2zM1812 786h1v1h-1zM1816 787h8v1h-8zM1817 786h7v1h-7zM1842 787h2v1h-2zM1843 786h1v1h-1zM1802 791h13v1h-13zM1802 790h2v1h-2zM1806 790h1v1h-1zM1808 790h2v1h-2zM1811 790h1v1h-1zM1816 791h5v1h-5zM1817 790h1v1h-1zM1819 790h2v1h-2zM1802 793h12v1h-12zM1805 792h3v1h-3zM1813 792h1v1h-1zM1815 793h10v1h-10zM1815 792h1v1h-1zM1817 792h1v1h-1zM1820 792h3v1h-3zM1826 793h7v1h-7zM1826 792h1v1h-1zM1830 792h1v1h-1zM1832 792h1v1h-1zM1833 799h5v1h-5zM1834 798h1v1h-1zM1836 798h2v1h-2zM1839 799h11v1h-11zM1844 798h1v1h-1zM1847 798h3v1h-3zM1851 799h4v1h-4zM1812 809h5v1h-5zM1813 808h1v1h-1zM1815 808h1v1h-1zM1818 809h5v1h-5zM1818 808h2v1h-2zM1821 811h5v1h-5zM1821 810h1v1h-1zM1809 813h7v1h-7zM1809 812h1v1h-1zM1813 812h1v1h-1zM1817 813h4v1h-4zM1818 812h1v1h-1zM1826 813h10v1h-10zM1828 812h1v1h-1zM1830 812h1v1h-1zM1832 812h2v1h-2zM1837 813h2v1h-2zM1810 815h6v1h-6zM1811 814h2v1h-2zM1815 814h1v1h-1zM1837 815h6v1h-6zM1837 814h1v1h-1zM1840 814h2v1h-2zM1844 815h5v1h-5zM1844 814h1v1h-1zM1846 814h2v1h-2zM1850 815h4v1h-4zM1852 814h1v1h-1zM1811 817h4v1h-4zM1812 816h1v1h-1zM1816 817h3v1h-3zM1820 817h5v1h-5zM1826 817h9v1h-9zM1828 816h1v1h-1zM1834 816h1v1h-1zM1836 817h6v1h-6zM1837 816h1v1h-1zM1840 816h2v1h-2zM1843 817h6v1h-6zM1843 816h1v1h-1zM1846 816h1v1h-1zM1850 817h7v1h-7zM1850 816h1v1h-1zM1853 816h2v1h-2zM1856 816h1v1h-1zM1858 817h3v1h-3zM1859 816h1v1h-1zM1842 827h10v1h-10zM1845 826h2v1h-2zM1850 826h2v1h-2zM1853 827h2v1h-2zM1853 826h1v1h-1zM1856 827h5v1h-5zM1856 826h2v1h-2zM1859 826h1v1h-1zM1862 827h7v1h-7zM1864 826h3v1h-3zM1806 829h10v1h-10zM1808 828h2v1h-2zM1813 828h1v1h-1zM1817 829h7v1h-7zM1821 828h1v1h-1zM1806 831h13v1h-13zM1807 830h1v1h-1zM1811 830h1v1h-1zM1814 830h2v1h-2zM1820 831h3v1h-3zM1821 830h2v1h-2zM1833 831h7v1h-7zM1833 830h2v1h-2zM1837 830h1v1h-1zM1841 831h7v1h-7zM1842 830h1v1h-1zM1844 830h1v1h-1zM1849 831h2v1h-2zM1849 830h1v1h-1zM1806 833h9v1h-9zM1812 832h2v1h-2zM1828 839h11v1h-11zM1828 838h1v1h-1zM1834 838h1v1h-1zM1840 839h4v1h-4zM1842 838h1v1h-1zM1845 839h10v1h-10zM1845 838h1v1h-1zM1851 838h2v1h-2zM1798 849h10v1h-10zM1802 848h1v1h-1zM1823 849h7v1h-7zM1824 848h1v1h-1zM1827 848h3v1h-3zM1831 849h5v1h-5zM1831 848h1v1h-1zM1833 848h3v1h-3zM1814 851h8v1h-8zM1817 850h1v1h-1zM1813 853h11v1h-11zM1813 852h1v1h-1zM1816 852h1v1h-1zM1821 852h1v1h-1zM1823 852h1v1h-1zM1812 855h4v1h-4zM1813 854h3v1h-3zM1817 855h4v1h-4zM1822 855h6v1h-6zM1822 854h1v1h-1zM1824 854h1v1h-1zM1815 857h5v1h-5zM1816 856h1v1h-1zM1818 856h1v1h-1zM1821 857h4v1h-4zM1824 856h1v1h-1zM1826 857h6v1h-6zM1828 856h1v1h-1zM1830 856h2v1h-2zM1814 859h9v1h-9zM1815 858h1v1h-1zM1818 858h1v1h-1zM1809 865h3v1h-3zM1810 864h1v1h-1zM1813 865h4v1h-4zM1815 864h2v1h-2zM1819 865h9v1h-9zM1819 864h1v1h-1zM1821 864h1v1h-1zM1825 864h1v1h-1zM1827 864h1v1h-1zM1829 865h9v1h-9zM1835 864h1v1h-1zM1851 865h11v1h-11zM1852 864h1v1h-1zM1854 864h1v1h-1zM1857 864h1v1h-1zM1809 871h10v1h-10zM1810 870h1v1h-1zM1814 870h1v1h-1zM1816 870h1v1h-1zM1821 871h3v1h-3zM1822 870h1v1h-1zM1834 871h10v1h-10zM1835 870h1v1h-1zM1837 870h2v1h-2zM1842 870h2v1h-2zM1845 871h7v1h-7zM1847 870h1v1h-1zM1862 871h5v1h-5zM1866 870h1v1h-1zM1809 877h4v1h-4zM1810 876h3v1h-3zM1814 877h3v1h-3zM1817 877h1v1h-1zM1817 876h1v1h-1zM1820 877h11v1h-11zM1820 876h1v1h-1zM1822 876h2v1h-2zM1825 876h1v1h-1zM1840 877h3v1h-3zM1841 876h1v1h-1zM1844 877h7v1h-7zM1846 876h1v1h-1zM1849 876h1v1h-1zM1852 877h8v1h-8zM1855 876h2v1h-2zM1858 876h1v1h-1zM1819 881h3v1h-3zM1823 881h7v1h-7zM1823 880h1v1h-1zM1825 880h3v1h-3zM1809 885h4v1h-4zM1812 884h1v1h-1zM1814 885h3v1h-3zM1815 884h2v1h-2zM1818 885h1v1h-1zM1821 885h3v1h-3zM1821 884h1v1h-1zM1823 884h1v1h-1zM1825 885h6v1h-6zM1825 884h1v1h-1zM1827 884h1v1h-1zM1829 884h2v1h-2zM1832 885h4v1h-4zM1833 884h1v1h-1zM1837 885h12v1h-12zM1837 884h3v1h-3zM1841 884h2v1h-2zM1845 884h1v1h-1zM1847 884h1v1h-1zM1850 885h12v1h-12zM1852 884h1v1h-1zM1854 884h2v1h-2zM1857 884h1v1h-1zM1874 885h6v1h-6zM1875 884h1v1h-1zM1879 884h1v1h-1zM1881 885h1v1h-1zM1805 889h9v1h-9zM1806 888h1v1h-1zM1808 888h3v1h-3zM1813 888h1v1h-1zM1816 889h5v1h-5zM1816 888h1v1h-1zM1819 888h2v1h-2zM1798 897h8v1h-8zM1800 896h1v1h-1zM1803 896h2v1h-2zM1807 897h5v1h-5zM1811 896h1v1h-1zM1813 897h10v1h-10zM1815 896h1v1h-1zM1818 896h1v1h-1zM1824 897h7v1h-7zM1826 896h1v1h-1zM1841 897h8v1h-8zM1842 896h1v1h-1zM1846 896h2v1h-2zM1870 897h1v1h-1zM1823 903h3v1h-3zM1827 903h3v1h-3zM1827 902h1v1h-1zM1831 903h5v1h-5zM1833 902h2v1h-2zM1809 905h5v1h-5zM1809 904h2v1h-2zM1813 904h1v1h-1zM1815 905h5v1h-5zM1817 904h1v1h-1zM1819 904h1v1h-1zM1835 905h4v1h-4zM1836 904h2v1h-2zM1840 905h7v1h-7zM1840 904h2v1h-2zM1843 904h2v1h-2zM1846 904h1v1h-1zM1848 905h4v1h-4zM1848 904h1v1h-1zM1850 904h2v1h-2zM1825 911h6v1h-6zM1826 910h2v1h-2zM1829 910h1v1h-1zM1832 911h10v1h-10zM1834 910h3v1h-3zM1838 910h1v1h-1zM1843 915h6v1h-6zM1843 914h1v1h-1zM1848 914h1v1h-1zM1850 915h7v1h-7zM1853 914h1v1h-1zM1855 914h1v1h-1zM1858 915h3v1h-3zM1858 914h3v1h-3zM1862 915h8v1h-8zM1862 914h2v1h-2zM1865 914h1v1h-1zM1867 914h1v1h-1zM1802 925h11v1h-11zM1803 924h1v1h-1zM1805 924h1v1h-1zM1809 924h1v1h-1zM1811 924h2v1h-2zM1802 927h6v1h-6zM1805 926h1v1h-1zM1807 926h1v1h-1zM1809 927h9v1h-9zM1812 926h1v1h-1zM1817 926h1v1h-1zM1802 929h7v1h-7zM1802 928h1v1h-1zM1810 929h3v1h-3zM1809 937h9v1h-9zM1810 936h1v1h-1zM1817 936h1v1h-1zM1820 937h8v1h-8zM1821 936h1v1h-1zM1827 936h1v1h-1zM1829 937h11v1h-11zM1836 936h2v1h-2zM1839 936h1v1h-1zM1846 937h12v1h-12zM1846 936h1v1h-1zM1849 936h1v1h-1zM1855 936h1v1h-1zM1859 937h1v1h-1zM1839 949h7v1h-7zM1842 948h1v1h-1zM1844 948h2v1h-2zM1847 949h5v1h-5zM1853 949h5v1h-5zM1855 948h1v1h-1zM1857 948h1v1h-1zM1859 949h6v1h-6zM1860 948h1v1h-1zM1864 948h1v1h-1zM1825 951h5v1h-5zM1826 950h3v1h-3zM1842 951h4v1h-4zM1843 950h1v1h-1zM1859 951h6v1h-6zM1861 950h4v1h-4zM1810 961h8v1h-8zM1812 960h1v1h-1zM1815 960h2v1h-2zM1827 961h3v1h-3zM1828 960h1v1h-1zM1831 961h10v1h-10zM1833 960h1v1h-1zM1836 960h1v1h-1zM1842 961h2v1h-2zM1842 960h1v1h-1zM1810 963h10v1h-10zM1810 962h1v1h-1zM1815 962h1v1h-1zM1819 962h1v1h-1zM1821 963h4v1h-4zM1831 963h9v1h-9zM1833 962h1v1h-1zM1841 963h5v1h-5zM1843 962h3v1h-3zM1810 965h14v1h-14zM1811 964h2v1h-2zM1821 964h1v1h-1zM1810 967h3v1h-3zM1812 966h1v1h-1zM1843 971h9v1h-9zM1845 970h1v1h-1zM1849 970h2v1h-2zM1880 971h11v1h-11zM1880 970h4v1h-4zM1889 970h1v1h-1zM1892 971h8v1h-8zM1892 970h3v1h-3zM1901 971h5v1h-5zM1905 970h1v1h-1zM1826 977h5v1h-5zM1826 976h1v1h-1zM1832 977h6v1h-6zM1832 976h1v1h-1zM1834 976h4v1h-4zM1847 981h8v1h-8zM1849 980h1v1h-1zM1851 980h2v1h-2zM1856 981h8v1h-8zM1857 980h1v1h-1zM1860 980h1v1h-1zM1862 980h1v1h-1zM1865 981h6v1h-6zM1865 980h1v1h-1zM1867 980h1v1h-1zM1885 981h5v1h-5zM1885 980h1v1h-1zM1887 980h1v1h-1zM1891 981h11v1h-11zM1892 980h2v1h-2zM1895 980h1v1h-1zM1844 987h7v1h-7zM1844 986h1v1h-1zM1847 986h1v1h-1zM1857 987h6v1h-6zM1858 986h1v1h-1zM1873 987h5v1h-5zM1874 986h1v1h-1zM1879 987h7v1h-7zM1882 986h1v1h-1zM1887 987h3v1h-3zM1887 986h2v1h-2zM1839 995h4v1h-4zM1840 994h1v1h-1zM1844 995h5v1h-5zM1845 994h2v1h-2zM1848 994h1v1h-1zM1850 995h10v1h-10zM1852 994h1v1h-1zM1861 995h4v1h-4zM1866 995h3v1h-3zM1866 994h1v1h-1zM1844 999h8v1h-8zM1845 998h1v1h-1zM1847 998h1v1h-1zM1858 999h7v1h-7zM1858 998h1v1h-1zM1862 998h1v1h-1zM1866 999h3v1h-3zM1866 998h1v1h-1zM1868 998h1v1h-1zM1880 999h10v1h-10zM1880 998h1v1h-1zM1883 998h1v1h-1zM1885 998h1v1h-1zM1891 999h9v1h-9zM1891 998h1v1h-1zM1893 998h3v1h-3zM1898 998h1v1h-1zM1810 1009h14v1h-14zM1817 1008h3v1h-3zM1822 1008h2v1h-2zM1835 1009h10v1h-10zM1835 1008h1v1h-1zM1839 1008h1v1h-1z"/><path fill="#b8846a" fill-opacity="0.26" d="M1818 98h8v2h-8zM1852 98h4v2h-4zM1868 98h8v2h-8zM1818 100h10v2h-10zM1829 100h10v2h-10zM1845 100h7v2h-7zM1867 100h7v2h-7zM1875 100h1v2h-1zM1833 104h2v2h-2zM1836 104h9v2h-9zM1845 104h1v2h-1zM1878 106h9v2h-9zM1898 106h8v2h-8zM1871 114h9v2h-9zM1881 114h12v2h-12zM1833 116h3v2h-3zM1837 116h3v2h-3zM1841 116h3v2h-3zM1845 116h1v2h-1zM1851 118h12v2h-12zM1864 118h12v2h-12zM1905 118h1v2h-1zM1810 132h10v2h-10zM1827 132h4v2h-4zM1843 132h4v2h-4zM1842 134h11v2h-11zM1860 134h5v2h-5zM1866 134h8v2h-8zM1875 134h3v2h-3zM1810 136h8v2h-8zM1851 136h3v2h-3zM1810 138h3v2h-3zM1832 140h7v2h-7zM1840 140h3v2h-3zM1844 140h2v2h-2zM1857 142h9v2h-9zM1867 142h3v2h-3zM1876 142h4v2h-4zM1881 142h9v2h-9zM1891 142h9v2h-9zM1901 142h3v2h-3zM1830 156h12v2h-12zM1854 156h3v2h-3zM1858 156h5v2h-5zM1864 156h6v2h-6zM1871 156h8v2h-8zM1880 156h2v2h-2zM1813 164h5v2h-5zM1819 164h4v2h-4zM1825 164h5v2h-5zM1831 164h3v2h-3zM1835 164h7v2h-7zM1843 164h4v2h-4zM1848 164h7v2h-7zM1856 164h9v2h-9zM1866 164h11v2h-11zM1878 164h8v2h-8zM1887 164h4v2h-4zM1828 166h3v2h-3zM1832 166h7v2h-7zM1840 166h7v2h-7zM1861 166h5v2h-5zM1846 172h3v2h-3zM1850 172h11v2h-11zM1868 172h8v2h-8zM1877 172h7v2h-7zM1841 178h5v2h-5zM1847 178h6v2h-6zM1854 178h3v2h-3zM1858 178h12v2h-12zM1871 178h4v2h-4zM1839 184h7v2h-7zM1847 184h6v2h-6zM1854 184h2v2h-2zM1857 184h5v2h-5zM1827 188h9v2h-9zM1837 188h10v2h-10zM1848 188h6v2h-6zM1855 188h4v2h-4zM1864 188h8v2h-8zM1873 188h1v2h-1zM1798 198h3v2h-3zM1798 200h10v2h-10zM1817 200h6v2h-6zM1838 200h6v2h-6zM1850 200h9v2h-9zM1798 202h12v2h-12zM1816 202h5v2h-5zM1822 202h10v2h-10zM1833 202h9v2h-9zM1798 204h3v2h-3zM1856 214h11v2h-11zM1868 214h6v2h-6zM1820 230h4v2h-4zM1825 230h9v2h-9zM1806 242h8v2h-8zM1815 242h4v2h-4zM1820 246h10v2h-10zM1831 246h8v2h-8zM1840 246h10v2h-10zM1825 248h10v2h-10zM1836 248h8v2h-8zM1845 248h6v2h-6zM1852 248h4v2h-4zM1835 252h5v2h-5zM1841 252h11v2h-11zM1853 252h9v2h-9zM1816 256h2v2h-2zM1819 256h5v2h-5zM1825 256h2v2h-2zM1806 262h14v2h-14zM1837 262h3v2h-3zM1806 264h7v2h-7zM1814 264h6v2h-6zM1838 264h1v2h-1zM1825 270h11v2h-11zM1837 270h7v2h-7zM1832 272h3v2h-3zM1836 272h5v2h-5zM1842 272h5v2h-5zM1848 272h9v2h-9zM1820 276h7v2h-7zM1853 276h7v2h-7zM1861 276h7v2h-7zM1809 282h8v2h-8zM1818 282h2v2h-2zM1822 282h8v2h-8zM1831 282h3v2h-3zM1844 282h6v2h-6zM1851 282h10v2h-10zM1869 282h2v2h-2zM1806 292h12v2h-12zM1819 292h8v2h-8zM1806 294h6v2h-6zM1822 294h4v2h-4zM1806 296h13v2h-13zM1828 296h5v2h-5zM1830 304h11v2h-11zM1842 304h7v2h-7zM1840 306h7v2h-7zM1848 306h6v2h-6zM1855 306h11v2h-11zM1867 306h4v2h-4zM1824 314h8v2h-8zM1841 314h1v2h-1zM1834 322h5v2h-5zM1840 322h8v2h-8zM1849 322h10v2h-10zM1859 322h1v2h-1zM1817 328h6v2h-6zM1842 346h3v2h-3zM1846 346h9v2h-9zM1856 346h6v2h-6zM1863 346h8v2h-8zM1813 348h4v2h-4zM1818 348h3v2h-3zM1821 348h1v2h-1zM1824 348h7v2h-7zM1832 348h6v2h-6zM1851 348h7v2h-7zM1869 348h11v2h-11zM1824 352h4v2h-4zM1839 352h6v2h-6zM1858 352h10v2h-10zM1869 352h8v2h-8zM1878 352h4v2h-4zM1832 364h3v2h-3zM1836 364h3v2h-3zM1840 364h9v2h-9zM1856 364h5v2h-5zM1862 364h3v2h-3zM1809 366h5v2h-5zM1815 366h4v2h-4zM1821 366h9v2h-9zM1831 366h7v2h-7zM1839 366h3v2h-3zM1843 366h4v2h-4zM1848 366h5v2h-5zM1854 366h5v2h-5zM1871 366h9v2h-9zM1806 376h9v2h-9zM1816 376h9v2h-9zM1806 378h10v2h-10zM1817 378h1v2h-1zM1806 380h10v2h-10zM1824 384h4v2h-4zM1829 384h6v2h-6zM1836 384h6v2h-6zM1843 384h9v2h-9zM1853 384h8v2h-8zM1806 392h8v2h-8zM1815 392h9v2h-9zM1824 392h1v2h-1zM1806 394h12v2h-12zM1806 396h8v2h-8zM1823 396h3v2h-3zM1827 396h5v2h-5zM1839 396h2v2h-2zM1806 398h14v2h-14zM1825 398h1v2h-1zM1806 400h14v2h-14zM1821 400h5v2h-5zM1806 402h9v2h-9zM1816 402h2v2h-2zM1832 406h9v2h-9zM1842 406h5v2h-5zM1866 406h5v2h-5zM1802 414h12v2h-12zM1815 414h10v2h-10zM1802 416h6v2h-6zM1816 416h5v2h-5zM1802 418h10v2h-10zM1822 418h4v2h-4zM1827 418h6v2h-6zM1834 418h3v2h-3zM1802 420h10v2h-10zM1824 420h6v2h-6zM1802 422h12v2h-12zM1815 422h4v2h-4zM1820 422h4v2h-4zM1802 424h8v2h-8zM1811 424h4v2h-4zM1802 426h6v2h-6zM1820 426h4v2h-4zM1825 426h3v2h-3zM1828 426h1v2h-1zM1802 428h7v2h-7zM1806 430h8v2h-8zM1806 432h12v2h-12zM1806 434h6v2h-6zM1839 434h3v2h-3zM1843 434h1v2h-1zM1802 438h13v2h-13zM1802 440h10v2h-10zM1818 440h5v2h-5zM1822 450h10v2h-10zM1850 450h1v2h-1zM1853 452h8v2h-8zM1862 452h4v2h-4zM1833 456h3v2h-3zM1837 456h9v2h-9zM1847 456h2v2h-2zM1850 456h5v2h-5zM1808 466h9v2h-9zM1818 466h5v2h-5zM1812 468h8v2h-8zM1825 468h5v2h-5zM1811 470h4v2h-4zM1821 472h4v2h-4zM1826 472h8v2h-8zM1835 472h9v2h-9zM1845 472h3v2h-3zM1849 472h3v2h-3zM1829 474h4v2h-4zM1834 474h10v2h-10zM1806 486h7v2h-7zM1814 486h4v2h-4zM1819 486h5v2h-5zM1825 486h5v2h-5zM1806 488h9v2h-9zM1816 488h7v2h-7zM1824 488h5v2h-5zM1841 488h9v2h-9zM1850 488h1v2h-1zM1806 490h6v2h-6zM1832 496h8v2h-8zM1798 508h3v2h-3zM1798 510h14v2h-14zM1848 510h7v2h-7zM1860 510h1v2h-1zM1798 512h14v2h-14zM1818 512h3v2h-3zM1798 514h3v2h-3zM1826 518h11v2h-11zM1838 518h5v2h-5zM1802 520h6v2h-6zM1809 520h10v2h-10zM1825 520h1v2h-1zM1802 522h13v2h-13zM1802 524h8v2h-8zM1809 532h9v2h-9zM1818 532h1v2h-1zM1821 532h6v2h-6zM1828 532h12v2h-12zM1845 532h3v2h-3zM1849 532h5v2h-5zM1813 536h10v2h-10zM1828 536h5v2h-5zM1834 536h2v2h-2zM1839 552h9v2h-9zM1867 552h9v2h-9zM1876 552h1v2h-1zM1828 556h4v2h-4zM1833 556h6v2h-6zM1840 556h4v2h-4zM1831 566h5v2h-5zM1837 566h5v2h-5zM1853 566h10v2h-10zM1864 566h2v2h-2zM1812 578h9v2h-9zM1822 578h6v2h-6zM1829 578h1v2h-1zM1816 580h4v2h-4zM1830 580h9v2h-9zM1811 582h8v2h-8zM1820 582h3v2h-3zM1824 582h6v2h-6zM1831 582h6v2h-6zM1838 582h5v2h-5zM1844 582h7v2h-7zM1852 582h4v2h-4zM1809 584h7v2h-7zM1834 584h3v2h-3zM1841 594h2v2h-2zM1844 594h2v2h-2zM1847 594h9v2h-9zM1857 594h11v2h-11zM1868 594h1v2h-1zM1806 596h10v2h-10zM1806 598h11v2h-11zM1825 598h7v2h-7zM1833 598h9v2h-9zM1843 598h10v2h-10zM1830 604h5v2h-5zM1836 604h6v2h-6zM1843 604h8v2h-8zM1852 604h5v2h-5zM1857 604h1v2h-1zM1805 608h2v2h-2zM1808 608h7v2h-7zM1817 608h4v2h-4zM1822 608h4v2h-4zM1835 608h10v2h-10zM1846 608h7v2h-7zM1854 608h8v2h-8zM1798 616h2v2h-2zM1800 616h6v2h-6zM1807 616h1v2h-1zM1809 616h7v2h-7zM1817 616h3v2h-3zM1821 616h4v2h-4zM1826 616h7v2h-7zM1834 616h2v2h-2zM1837 616h8v2h-8zM1846 616h9v2h-9zM1856 616h5v2h-5zM1862 616h2v2h-2zM1865 616h7v2h-7zM1873 616h6v2h-6zM1879 616h2v2h-2zM1810 624h7v2h-7zM1820 624h8v2h-8zM1829 624h8v2h-8zM1850 624h1v2h-1zM1852 624h5v2h-5zM1858 624h9v2h-9zM1869 624h2v2h-2zM1872 624h1v2h-1zM1903 624h1v2h-1zM1814 636h7v2h-7zM1823 636h9v2h-9zM1833 636h4v2h-4zM1838 636h2v2h-2zM1841 636h12v2h-12zM1854 636h10v2h-10zM1865 636h5v2h-5zM1814 640h7v2h-7zM1823 640h9v2h-9zM1833 640h4v2h-4zM1838 640h2v2h-2zM1841 640h2v2h-2zM1844 640h10v2h-10zM1855 640h2v2h-2zM1858 640h5v2h-5zM1814 648h7v2h-7zM1823 648h9v2h-9zM1833 648h4v2h-4zM1838 648h2v2h-2zM1841 648h2v2h-2zM1844 648h5v2h-5zM1850 648h1v2h-1zM1852 648h11v2h-11zM1814 652h7v2h-7zM1823 652h9v2h-9zM1833 652h4v2h-4zM1838 652h2v2h-2zM1841 652h3v2h-3zM1845 652h10v2h-10zM1856 652h2v2h-2zM1859 652h5v2h-5zM1840 656h3v2h-3zM1846 656h3v2h-3zM1850 656h1v2h-1zM1853 656h2v2h-2zM1856 656h1v2h-1zM1858 656h2v2h-2zM1861 656h1v2h-1zM1863 656h5v2h-5zM1814 658h7v2h-7zM1823 658h9v2h-9zM1833 658h6v2h-6zM1840 658h7v2h-7zM1848 658h7v2h-7zM1856 658h12v2h-12zM1869 658h11v2h-11zM1881 658h2v2h-2zM1884 658h10v2h-10zM1802 666h12v2h-12zM1802 668h9v2h-9zM1802 670h8v2h-8zM1812 670h9v2h-9zM1806 680h7v2h-7zM1816 680h4v2h-4zM1821 680h7v2h-7zM1829 680h4v2h-4zM1847 680h8v2h-8zM1856 680h4v2h-4zM1861 680h2v2h-2zM1864 680h5v2h-5zM1870 680h6v2h-6zM1877 680h8v2h-8zM1886 680h1v2h-1zM1888 680h3v2h-3zM1892 680h5v2h-5zM1806 682h18v2h-18zM1810 704h7v2h-7zM1820 704h7v2h-7zM1828 704h2v2h-2zM1831 704h5v2h-5zM1837 704h6v2h-6zM1857 704h10v2h-10zM1866 716h6v2h-6zM1884 716h1v2h-1zM1811 722h12v2h-12zM1824 722h3v2h-3zM1840 722h1v2h-1zM1842 722h8v2h-8zM1859 722h1v2h-1zM1861 722h9v2h-9zM1887 722h4v2h-4zM1892 722h7v2h-7zM1816 728h7v2h-7zM1825 728h12v2h-12zM1839 728h9v2h-9zM1850 728h13v2h-13zM1815 732h21v2h-21zM1837 732h9v2h-9zM1856 732h1v2h-1zM1814 736h7v2h-7zM1824 736h7v2h-7zM1832 736h2v2h-2zM1835 736h6v2h-6zM1842 736h4v2h-4zM1847 736h8v2h-8zM1856 736h2v2h-2zM1871 736h1v2h-1zM1802 744h6v2h-6zM1810 744h11v2h-11zM1802 746h6v2h-6zM1817 746h6v2h-6zM1802 748h10v2h-10zM1802 750h10v2h-10zM1802 752h10v2h-10zM1802 768h14v2h-14zM1802 770h7v2h-7zM1810 770h7v2h-7zM1802 772h12v2h-12zM1815 772h9v2h-9zM1831 772h5v2h-5zM1802 774h11v2h-11zM1831 774h7v2h-7zM1839 774h6v2h-6zM1802 776h6v2h-6zM1809 776h9v2h-9zM1802 778h14v2h-14zM1822 778h7v2h-7zM1802 780h7v2h-7zM1810 780h3v2h-3zM1806 782h8v2h-8zM1815 782h5v2h-5zM1832 782h1v2h-1zM1806 784h10v2h-10zM1826 784h6v2h-6zM1806 786h9v2h-9zM1816 786h8v2h-8zM1842 786h2v2h-2zM1802 790h13v2h-13zM1816 790h5v2h-5zM1802 792h12v2h-12zM1815 792h10v2h-10zM1826 792h7v2h-7zM1833 798h5v2h-5zM1839 798h11v2h-11zM1851 798h4v2h-4zM1812 808h5v2h-5zM1818 808h5v2h-5zM1821 810h5v2h-5zM1809 812h7v2h-7zM1817 812h4v2h-4zM1826 812h10v2h-10zM1837 812h2v2h-2zM1810 814h6v2h-6zM1837 814h6v2h-6zM1844 814h5v2h-5zM1850 814h4v2h-4zM1811 816h4v2h-4zM1816 816h3v2h-3zM1820 816h5v2h-5zM1826 816h9v2h-9zM1836 816h6v2h-6zM1843 816h6v2h-6zM1850 816h7v2h-7zM1858 816h3v2h-3zM1842 826h10v2h-10zM1853 826h2v2h-2zM1856 826h5v2h-5zM1862 826h7v2h-7zM1806 828h10v2h-10zM1817 828h7v2h-7zM1806 830h13v2h-13zM1820 830h3v2h-3zM1833 830h7v2h-7zM1841 830h7v2h-7zM1849 830h2v2h-2zM1806 832h9v2h-9zM1828 838h11v2h-11zM1840 838h4v2h-4zM1845 838h10v2h-10zM1798 848h10v2h-10zM1823 848h7v2h-7zM1831 848h5v2h-5zM1814 850h8v2h-8zM1813 852h11v2h-11zM1812 854h4v2h-4zM1817 854h4v2h-4zM1822 854h6v2h-6zM1815 856h5v2h-5zM1821 856h4v2h-4zM1826 856h6v2h-6zM1814 858h9v2h-9zM1809 864h3v2h-3zM1813 864h4v2h-4zM1819 864h9v2h-9zM1829 864h9v2h-9zM1851 864h11v2h-11zM1809 870h10v2h-10zM1821 870h3v2h-3zM1834 870h10v2h-10zM1845 870h7v2h-7zM1862 870h5v2h-5zM1809 876h4v2h-4zM1814 876h3v2h-3zM1817 876h1v2h-1zM1820 876h11v2h-11zM1840 876h3v2h-3zM1844 876h7v2h-7zM1852 876h8v2h-8zM1819 880h3v2h-3zM1823 880h7v2h-7zM1809 884h4v2h-4zM1814 884h3v2h-3zM1818 884h1v2h-1zM1821 884h3v2h-3zM1825 884h6v2h-6zM1832 884h4v2h-4zM1837 884h12v2h-12zM1850 884h12v2h-12zM1874 884h6v2h-6zM1881 884h1v2h-1zM1805 888h9v2h-9zM1816 888h5v2h-5zM1798 896h8v2h-8zM1807 896h5v2h-5zM1813 896h10v2h-10zM1824 896h7v2h-7zM1841 896h8v2h-8zM1870 896h1v2h-1zM1823 902h3v2h-3zM1827 902h3v2h-3zM1831 902h5v2h-5zM1809 904h5v2h-5zM1815 904h5v2h-5zM1835 904h4v2h-4zM1840 904h7v2h-7zM1848 904h4v2h-4zM1825 910h6v2h-6zM1832 910h10v2h-10zM1843 914h6v2h-6zM1850 914h7v2h-7zM1858 914h3v2h-3zM1862 914h8v2h-8zM1802 924h11v2h-11zM1802 926h6v2h-6zM1809 926h9v2h-9zM1802 928h7v2h-7zM1810 928h3v2h-3zM1809 936h9v2h-9zM1820 936h8v2h-8zM1829 936h11v2h-11zM1846 936h12v2h-12zM1859 936h1v2h-1zM1839 948h7v2h-7zM1847 948h5v2h-5zM1853 948h5v2h-5zM1859 948h6v2h-6zM1825 950h5v2h-5zM1842 950h4v2h-4zM1859 950h6v2h-6zM1810 960h8v2h-8zM1827 960h3v2h-3zM1831 960h10v2h-10zM1842 960h2v2h-2zM1810 962h10v2h-10zM1821 962h4v2h-4zM1831 962h9v2h-9zM1841 962h5v2h-5zM1810 964h14v2h-14zM1810 966h3v2h-3zM1843 970h9v2h-9zM1880 970h11v2h-11zM1892 970h8v2h-8zM1901 970h5v2h-5zM1826 976h5v2h-5zM1832 976h6v2h-6zM1847 980h8v2h-8zM1856 980h8v2h-8zM1865 980h6v2h-6zM1885 980h5v2h-5zM1891 980h11v2h-11zM1844 986h7v2h-7zM1857 986h6v2h-6zM1873 986h5v2h-5zM1879 986h7v2h-7zM1887 986h3v2h-3zM1839 994h4v2h-4zM1844 994h5v2h-5zM1850 994h10v2h-10zM1861 994h4v2h-4zM1866 994h3v2h-3zM1844 998h8v2h-8zM1858 998h7v2h-7zM1866 998h3v2h-3zM1880 998h10v2h-10zM1891 998h9v2h-9zM1810 1008h14v2h-14zM1835 1008h10v2h-10z"/><path fill="#4d86c4" fill-opacity="0.3" d="M1860 107h8v1h-8zM1863 106h1v1h-1zM1866 106h1v1h-1zM1869 107h8v1h-8zM1869 106h1v1h-1zM1872 106h1v1h-1zM1875 106h1v1h-1zM1888 107h4v1h-4zM1893 107h4v1h-4zM1893 106h1v1h-1zM1895 106h1v1h-1zM1847 115h6v1h-6zM1847 114h2v1h-2zM1850 114h2v1h-2zM1894 115h4v1h-4zM1895 114h1v1h-1zM1897 114h1v1h-1zM1905 115h1v1h-1zM1905 114h1v1h-1zM1877 119h12v1h-12zM1877 118h1v1h-1zM1882 118h2v1h-2zM1887 118h2v1h-2zM1829 135h6v1h-6zM1830 134h1v1h-1zM1854 135h5v1h-5zM1857 134h1v1h-1zM1871 143h4v1h-4zM1872 142h1v1h-1zM1824 165h1v1h-1zM1848 167h12v1h-12zM1852 166h2v1h-2zM1855 166h1v1h-1zM1859 166h1v1h-1zM1867 167h6v1h-6zM1867 166h1v1h-1zM1794 197h5v1h-5zM1794 196h1v1h-1zM1800 197h3v1h-3zM1832 197h10v1h-10zM1832 196h1v1h-1zM1835 196h1v1h-1zM1837 196h1v1h-1zM1839 196h1v1h-1zM1854 197h4v1h-4zM1855 196h1v1h-1zM1870 197h7v1h-7zM1870 196h1v1h-1zM1873 196h2v1h-2zM1876 196h1v1h-1zM1832 215h10v1h-10zM1834 214h1v1h-1zM1836 214h1v1h-1zM1839 214h2v1h-2zM1843 215h12v1h-12zM1875 215h3v1h-3zM1875 214h1v1h-1zM1841 231h2v1h-2zM1841 230h1v1h-1zM1873 253h5v1h-5zM1869 277h1v1h-1zM1821 283h1v1h-1zM1821 282h1v1h-1zM1835 283h8v1h-8zM1835 282h1v1h-1zM1837 282h1v1h-1zM1862 283h6v1h-6zM1863 282h1v1h-1zM1866 282h2v1h-2zM1813 329h3v1h-3zM1813 328h3v1h-3zM1824 329h5v1h-5zM1824 328h1v1h-1zM1823 349h1v1h-1zM1839 349h11v1h-11zM1840 348h4v1h-4zM1859 349h9v1h-9zM1881 349h10v1h-10zM1881 348h1v1h-1zM1887 348h1v1h-1zM1889 348h1v1h-1zM1820 367h1v1h-1zM1860 367h10v1h-10zM1863 366h2v1h-2zM1856 407h9v1h-9zM1856 406h3v1h-3zM1833 453h11v1h-11zM1837 452h2v1h-2zM1840 452h3v1h-3zM1794 507h5v1h-5zM1800 507h3v1h-3zM1801 506h1v1h-1zM1826 507h9v1h-9zM1826 506h2v1h-2zM1820 533h1v1h-1zM1841 533h3v1h-3zM1843 532h1v1h-1zM1855 533h5v1h-5zM1857 532h1v1h-1zM1824 537h3v1h-3zM1824 536h2v1h-2zM1835 553h3v1h-3zM1836 552h2v1h-2zM1849 553h5v1h-5zM1850 552h1v1h-1zM1816 609h1v1h-1zM1816 608h1v1h-1zM1827 609h7v1h-7zM1829 608h1v1h-1zM1831 608h1v1h-1zM1794 615h5v1h-5zM1800 615h3v1h-3zM1800 614h1v1h-1zM1802 614h1v1h-1zM1875 615h4v1h-4zM1875 614h1v1h-1zM1904 615h2v1h-2zM1904 614h1v1h-1zM1812 623h3v1h-3zM1814 622h1v1h-1zM1816 623h2v1h-2zM1819 625h1v1h-1zM1819 624h1v1h-1zM1805 635h3v1h-3zM1807 634h1v1h-1zM1811 657h2v1h-2zM1836 657h2v1h-2zM1815 681h1v1h-1zM1815 680h1v1h-1zM1812 691h2v1h-2zM1801 703h3v1h-3zM1803 702h1v1h-1zM1819 705h1v1h-1zM1819 704h1v1h-1zM1865 717h1v1h-1zM1865 716h1v1h-1zM1810 723h1v1h-1zM1810 722h1v1h-1zM1812 729h2v1h-2zM1814 733h1v1h-1zM1814 732h1v1h-1zM1805 735h3v1h-3zM1807 734h1v1h-1zM1823 737h1v1h-1zM1823 736h1v1h-1zM1794 847h5v1h-5zM1796 846h2v1h-2zM1800 847h3v1h-3zM1802 846h1v1h-1zM1840 847h7v1h-7zM1844 846h1v1h-1zM1846 846h1v1h-1zM1823 851h1v1h-1zM1818 865h1v1h-1zM1818 864h1v1h-1zM1839 865h11v1h-11zM1841 864h2v1h-2zM1847 864h1v1h-1zM1820 871h1v1h-1zM1820 870h1v1h-1zM1825 871h8v1h-8zM1825 870h1v1h-1zM1827 870h1v1h-1zM1829 870h3v1h-3zM1853 871h8v1h-8zM1856 870h3v1h-3zM1819 877h1v1h-1zM1832 877h7v1h-7zM1835 876h4v1h-4zM1861 877h3v1h-3zM1861 876h1v1h-1zM1863 876h1v1h-1zM1820 885h1v1h-1zM1863 885h10v1h-10zM1864 884h2v1h-2zM1869 884h2v1h-2zM1872 884h1v1h-1zM1815 889h1v1h-1zM1794 895h5v1h-5zM1794 894h1v1h-1zM1796 894h1v1h-1zM1800 895h3v1h-3zM1800 894h1v1h-1zM1827 895h8v1h-8zM1830 894h1v1h-1zM1833 894h1v1h-1zM1821 905h1v1h-1zM1822 905h12v1h-12zM1822 904h2v1h-2zM1825 904h2v1h-2zM1828 904h1v1h-1zM1830 904h2v1h-2zM1819 937h1v1h-1zM1819 936h1v1h-1zM1841 937h4v1h-4zM1841 936h2v1h-2zM1831 951h10v1h-10zM1831 950h1v1h-1zM1833 950h1v1h-1zM1835 950h1v1h-1zM1863 971h4v1h-4zM1863 970h1v1h-1zM1866 970h1v1h-1zM1868 971h11v1h-11zM1870 970h2v1h-2zM1874 970h1v1h-1zM1876 970h2v1h-2zM1872 981h12v1h-12zM1876 980h2v1h-2zM1881 980h1v1h-1zM1903 981h3v1h-3zM1903 980h1v1h-1zM1852 987h4v1h-4zM1864 987h8v1h-8zM1864 986h3v1h-3zM1868 986h2v1h-2zM1871 986h1v1h-1zM1891 987h10v1h-10zM1891 986h3v1h-3zM1902 987h4v1h-4zM1903 986h1v1h-1zM1901 999h4v1h-4zM1902 998h1v1h-1zM1904 998h1v1h-1z"/><path fill="#4d86c4" fill-opacity="0.26" d="M1860 106h8v2h-8zM1869 106h8v2h-8zM1888 106h4v2h-4zM1893 106h4v2h-4zM1847 114h6v2h-6zM1894 114h4v2h-4zM1905 114h1v2h-1zM1877 118h12v2h-12zM1829 134h6v2h-6zM1854 134h5v2h-5zM1871 142h4v2h-4zM1824 164h1v2h-1zM1848 166h12v2h-12zM1867 166h6v2h-6zM1794 196h5v2h-5zM1800 196h3v2h-3zM1832 196h10v2h-10zM1854 196h4v2h-4zM1870 196h7v2h-7zM1832 214h10v2h-10zM1843 214h12v2h-12zM1875 214h3v2h-3zM1841 230h2v2h-2zM1873 252h5v2h-5zM1869 276h1v2h-1zM1821 282h1v2h-1zM1835 282h8v2h-8zM1862 282h6v2h-6zM1813 328h3v2h-3zM1824 328h5v2h-5zM1823 348h1v2h-1zM1839 348h11v2h-11zM1859 348h9v2h-9zM1881 348h10v2h-10zM1820 366h1v2h-1zM1860 366h10v2h-10zM1856 406h9v2h-9zM1833 452h11v2h-11zM1794 506h5v2h-5zM1800 506h3v2h-3zM1826 506h9v2h-9zM1820 532h1v2h-1zM1841 532h3v2h-3zM1855 532h5v2h-5zM1824 536h3v2h-3zM1835 552h3v2h-3zM1849 552h5v2h-5zM1816 608h1v2h-1zM1827 608h7v2h-7zM1794 614h5v2h-5zM1800 614h3v2h-3zM1875 614h4v2h-4zM1904 614h2v2h-2zM1812 622h3v2h-3zM1816 622h2v2h-2zM1819 624h1v2h-1zM1805 634h3v2h-3zM1811 656h2v2h-2zM1836 656h2v2h-2zM1815 680h1v2h-1zM1812 690h2v2h-2zM1801 702h3v2h-3zM1819 704h1v2h-1zM1865 716h1v2h-1zM1810 722h1v2h-1zM1812 728h2v2h-2zM1814 732h1v2h-1zM1805 734h3v2h-3zM1823 736h1v2h-1zM1794 846h5v2h-5zM1800 846h3v2h-3zM1840 846h7v2h-7zM1823 850h1v2h-1zM1818 864h1v2h-1zM1839 864h11v2h-11zM1820 870h1v2h-1zM1825 870h8v2h-8zM1853 870h8v2h-8zM1819 876h1v2h-1zM1832 876h7v2h-7zM1861 876h3v2h-3zM1820 884h1v2h-1zM1863 884h10v2h-10zM1815 888h1v2h-1zM1794 894h5v2h-5zM1800 894h3v2h-3zM1827 894h8v2h-8zM1821 904h1v2h-1zM1822 904h12v2h-12zM1819 936h1v2h-1zM1841 936h4v2h-4zM1831 950h10v2h-10zM1863 970h4v2h-4zM1868 970h11v2h-11zM1872 980h12v2h-12zM1903 980h3v2h-3zM1852 986h4v2h-4zM1864 986h8v2h-8zM1891 986h10v2h-10zM1902 986h4v2h-4zM1901 998h4v2h-4z"/><path fill="#4eaa98" fill-opacity="0.3" d="M1809 177h9v1h-9zM1805 363h9v1h-9zM1805 362h2v1h-2zM1808 362h1v1h-1zM1812 362h1v1h-1zM1805 495h9v1h-9zM1805 494h2v1h-2zM1809 494h1v1h-1zM1853 507h5v1h-5zM1856 506h2v1h-2zM1859 507h7v1h-7zM1859 506h1v1h-1zM1863 506h3v1h-3zM1805 555h9v1h-9zM1806 554h2v1h-2zM1805 603h9v1h-9zM1805 602h1v1h-1zM1809 602h1v1h-1zM1811 602h1v1h-1zM1830 615h3v1h-3zM1831 614h1v1h-1zM1847 615h3v1h-3zM1848 614h1v1h-1zM1869 615h3v1h-3zM1870 614h1v1h-1zM1898 615h3v1h-3zM1899 614h1v1h-1zM1900 723h4v1h-4zM1900 722h1v1h-1zM1903 722h1v1h-1zM1805 837h9v1h-9zM1806 836h1v1h-1zM1809 836h2v1h-2zM1812 836h1v1h-1z"/><path fill="#4eaa98" fill-opacity="0.26" d="M1809 176h9v2h-9zM1805 362h9v2h-9zM1805 494h9v2h-9zM1853 506h5v2h-5zM1859 506h7v2h-7zM1805 554h9v2h-9zM1805 602h9v2h-9zM1830 614h3v2h-3zM1847 614h3v2h-3zM1869 614h3v2h-3zM1898 614h3v2h-3zM1900 722h4v2h-4zM1805 836h9v2h-9z"/><path fill="#c8c8a0" fill-opacity="0.3" d="M1804 197h28v1h-28zM1805 196h3v1h-3zM1809 196h3v1h-3zM1818 196h1v1h-1zM1820 196h1v1h-1zM1824 196h3v1h-3zM1828 196h4v1h-4zM1804 507h22v1h-22zM1813 506h1v1h-1zM1815 506h1v1h-1zM1817 506h2v1h-2zM1820 506h2v1h-2zM1825 506h1v1h-1zM1804 847h20v1h-20zM1806 846h1v1h-1zM1808 846h2v1h-2zM1811 846h1v1h-1zM1816 846h1v1h-1zM1820 846h1v1h-1zM1823 846h1v1h-1zM1804 895h23v1h-23zM1805 894h3v1h-3zM1811 894h2v1h-2zM1820 894h3v1h-3zM1825 894h1v1h-1z"/><path fill="#c8c8a0" fill-opacity="0.26" d="M1804 196h28v2h-28zM1804 506h22v2h-22zM1804 846h20v2h-20zM1804 894h23v2h-23z"/><path fill="#8cc4e4" fill-opacity="0.3" d="M1843 197h10v1h-10zM1848 196h2v1h-2zM1852 196h1v1h-1zM1859 197h10v1h-10zM1860 196h1v1h-1zM1864 196h2v1h-2zM1878 197h11v1h-11zM1879 196h4v1h-4zM1885 196h1v1h-1zM1890 197h9v1h-9zM1890 196h3v1h-3zM1895 196h1v1h-1zM1898 196h1v1h-1zM1802 467h6v1h-6zM1806 466h1v1h-1zM1802 469h10v1h-10zM1802 468h2v1h-2zM1806 468h3v1h-3zM1811 468h1v1h-1zM1802 471h9v1h-9zM1802 470h1v1h-1zM1807 470h3v1h-3zM1802 473h9v1h-9zM1803 472h2v1h-2zM1802 475h10v1h-10zM1803 474h2v1h-2zM1807 474h1v1h-1zM1836 507h5v1h-5zM1838 506h2v1h-2zM1842 507h10v1h-10zM1842 506h1v1h-1zM1844 506h1v1h-1zM1847 506h1v1h-1zM1850 506h2v1h-2zM1867 507h2v1h-2zM1868 506h1v1h-1zM1802 577h8v1h-8zM1803 576h1v1h-1zM1807 576h3v1h-3zM1802 579h10v1h-10zM1803 578h1v1h-1zM1806 578h2v1h-2zM1809 578h2v1h-2zM1802 581h8v1h-8zM1803 580h2v1h-2zM1806 580h1v1h-1zM1802 583h9v1h-9zM1806 582h1v1h-1zM1802 585h7v1h-7zM1803 584h3v1h-3zM1802 809h10v1h-10zM1805 808h1v1h-1zM1810 808h2v1h-2zM1802 811h9v1h-9zM1806 810h1v1h-1zM1808 810h3v1h-3zM1802 813h7v1h-7zM1802 815h8v1h-8zM1802 814h1v1h-1zM1805 814h2v1h-2zM1802 817h9v1h-9zM1802 816h1v1h-1zM1808 816h3v1h-3zM1824 847h6v1h-6zM1827 846h1v1h-1zM1831 847h8v1h-8zM1832 846h1v1h-1zM1836 846h1v1h-1zM1848 847h8v1h-8zM1852 846h2v1h-2zM1855 846h1v1h-1zM1857 847h8v1h-8zM1857 846h2v1h-2zM1836 895h7v1h-7zM1842 894h1v1h-1zM1844 895h6v1h-6zM1847 894h1v1h-1z"/><path fill="#8cc4e4" fill-opacity="0.26" d="M1843 196h10v2h-10zM1859 196h10v2h-10zM1878 196h11v2h-11zM1890 196h9v2h-9zM1802 466h6v2h-6zM1802 468h10v2h-10zM1802 470h9v2h-9zM1802 472h9v2h-9zM1802 474h10v2h-10zM1836 506h5v2h-5zM1842 506h10v2h-10zM1867 506h2v2h-2zM1802 576h8v2h-8zM1802 578h10v2h-10zM1802 580h8v2h-8zM1802 582h9v2h-9zM1802 584h7v2h-7zM1802 808h10v2h-10zM1802 810h9v2h-9zM1802 812h7v2h-7zM1802 814h8v2h-8zM1802 816h9v2h-9zM1824 846h6v2h-6zM1831 846h8v2h-8zM1848 846h8v2h-8zM1857 846h8v2h-8zM1836 894h7v2h-7zM1844 894h6v2h-6z"/><path fill="#a8bca0" fill-opacity="0.3" d="M1828 639h2v1h-2zM1828 638h2v1h-2zM1828 647h1v1h-1zM1828 646h1v1h-1zM1828 651h3v1h-3zM1828 650h3v1h-3zM1884 723h1v1h-1zM1884 722h1v1h-1z"/><path fill="#a8bca0" fill-opacity="0.26" d="M1828 638h2v2h-2zM1828 646h1v2h-1zM1828 650h3v2h-3zM1884 722h1v2h-1z"/></svg>
<div class="a" style="left:1779px;top:92px;width:6px;height:918px;background:linear-gradient(to right,rgba(0,0,0,0),rgba(0,0,0,0.3))"></div>
<div class="a" style="left:1785px;top:92px;width:1px;height:918px;background:#121212"></div>
<div class="a" style="left:1906px;top:92px;width:1px;height:918px;background:#151515"></div>
<div class="a" style="left:1907px;top:687px;width:12px;height:51px;background:#3e3e3e"></div>
<div class="a" style="left:1907px;top:92px;width:12px;height:2px;background:#a0a0a0"></div>
<div class="a" style="left:348px;top:92px;width:1438px;height:19px;background:#1f1f1f;box-shadow:0 3px 3px -1px #000"></div>
<div class="lnum" style="top:93px">542</div>
<div class="ln" style="left:416px;top:93px;font-family:'Liberation Mono',monospace;font-size:12.83px;white-space:pre;color:#d4d4d4"><i class="st">async</i> <i class="st">def</i> <i class="fn">start_service</i><b style="color:#ffd700">(</b><i class="par">user_email</i>: <i class="ty">str</i>, <i class="par">service_id</i>: <i class="ty">str</i>, <i class="par">custom_username</i>: <i class="ty">str</i> = <i class="st">None</i>, <i class="par">custom_password</i>: <i class="ty">str</i> = <i class="st">None</i><b style="color:#ffd700">)</b>:</div>
<div class="a" style="left:0;top:1010px;width:1919px;height:1px;background:#2b2b2b"></div>
<div class="a" style="left:0;top:1011px;width:1919px;height:21px;background:#181818"></div>
<div class="a" style="left:0;top:1032px;width:1919px;height:1px;background:#3a3a3a"></div>
<div class="a" style="left:0;top:1033px;width:1919px;height:46px;background:#1c1c1c"></div>
<div class="a" style="left:68px;top:43px;height:20px;line-height:20px;font-size:11px;color:#cccccc;letter-spacing:-1.3px">EXPLORER</div>
<svg style="left:315px;top:45px" width="16" height="16" viewBox="0 0 16 16"><circle cx="5" cy="8" r="1.05" fill="#cccccc"/><circle cx="9.4" cy="8" r="1.05" fill="#cccccc"/><circle cx="13.8" cy="8" r="1.05" fill="#cccccc"/></svg>
<svg style="left:52px;top:77px" width="12" height="8" viewBox="0 0 12 8"><path d="M1.2 2L6 6.5L10.8 2" fill="none" stroke="#cccccc" stroke-width="1.25"/></svg>
<div class="a" style="left:68px;top:70px;height:22px;line-height:22px;font-size:11px;font-weight:bold;color:#cccccc">LABS-MAIN</div>
<svg style="left:246px;top:73px" width="16" height="16" viewBox="0 0 16 16"><path d="M9.5 14.5H2.5V1.5H8L11.5 5V8" fill="none" stroke="#cccccc" stroke-width="1"/><path d="M8 1.5V5H11.5" fill="none" stroke="#cccccc" stroke-width="1"/><circle cx="11.5" cy="11.5" r="3.6" fill="#cccccc"/><path d="M11.5 9.5V13.5M9.5 11.5H13.5" stroke="#181818" stroke-width="1.1"/></svg>
<svg style="left:269px;top:73px" width="16" height="16" viewBox="0 0 16 16"><path d="M8 13.5H1.5V2.5H6L7.5 4H14.5V8" fill="none" stroke="#cccccc" stroke-width="1"/><path d="M1.5 6H7.5L9 4" fill="none" stroke="#cccccc" stroke-width="1"/><circle cx="11.5" cy="11.5" r="3.6" fill="#cccccc"/><path d="M11.5 9.5V13.5M9.5 11.5H13.5" stroke="#181818" stroke-width="1.1"/></svg>
<svg style="left:293px;top:73px" width="16" height="16" viewBox="0 0 16 16"><path d="M13 8A5 5 0 1 1 11 4" fill="none" stroke="#cccccc" stroke-width="1" stroke-width="1.2"/><path d="M12.5 1.5V5H9" fill="none" stroke="#cccccc" stroke-width="1" stroke-width="1.2"/></svg>
<svg style="left:317px;top:73px" width="16" height="16" viewBox="0 0 16 16"><rect x="1.5" y="1.5" width="11.5" height="11" rx="1" fill="none" stroke="#cccccc" stroke-width="1"/><path d="M4.5 6.5H10" stroke="#cccccc" stroke-width="1.2"/><path d="M3 14.5H13.5Q14.5 14.5 14.5 13.5V3" fill="none" stroke="#cccccc" stroke-width="1"/></svg>
<div class="a" style="left:48px;top:92px;width:299px;height:874px;overflow:hidden">
<svg style="left:13px;top:7px" width="12" height="8" viewBox="0 0 12 8"><path d="M1.2 2L6 6.5L10.8 2" fill="none" stroke="#cccccc" stroke-width="1.25"/></svg><div class="a" style="left:30px;top:1px;height:22px;line-height:22px;color:#e2c08d;white-space:pre">backend</div><div class="a" style="left:274px;top:7px;width:8px;height:8px;border-radius:50%;background:#756650"></div><svg style="left:23px;top:27px" width="8" height="12" viewBox="0 0 8 12"><path d="M2.2 1.2L6.5 6L2.2 10.8" fill="none" stroke="#cccccc" stroke-width="1.25"/></svg><div class="a" style="left:38px;top:23px;height:22px;line-height:22px;color:#8c8c8c;white-space:pre"><span class="us">_</span><span class="us">_</span>pycache<span class="us">_</span><span class="us">_</span></div><svg style="left:21px;top:51px" width="12" height="8" viewBox="0 0 12 8"><path d="M1.2 2L6 6.5L10.8 2" fill="none" stroke="#cccccc" stroke-width="1.25"/></svg><div class="a" style="left:38px;top:45px;height:22px;line-height:22px;color:#e2c08d;white-space:pre">controllers</div><div class="a" style="left:274px;top:51px;width:8px;height:8px;border-radius:50%;background:#756650"></div><svg style="left:31px;top:71px" width="8" height="12" viewBox="0 0 8 12"><path d="M2.2 1.2L6.5 6L2.2 10.8" fill="none" stroke="#cccccc" stroke-width="1.25"/></svg><div class="a" style="left:46px;top:67px;height:22px;line-height:22px;color:#8c8c8c;white-space:pre"><span class="us">_</span><span class="us">_</span>pycache<span class="us">_</span><span class="us">_</span></div><svg style="left:28px;top:93px" width="12" height="12" viewBox="0 0 12 12"><rect x="2.7" y="0" width="6.3" height="11.5" rx="2.2" fill="#519aba"/><rect x="0" y="2.9" width="11.5" height="5.8" rx="2" fill="#519aba"/><path d="M2.8 6.2H5.8V8.7M8.9 5.3H5.8V2.8" fill="none" stroke="#181818" stroke-width="0.7"/><circle cx="4.5" cy="1.5" r="0.6" fill="#181818"/><circle cx="7.1" cy="10" r="0.6" fill="#181818"/></svg><div class="a" style="left:46px;top:89px;height:22px;line-height:22px;color:#cccccc;white-space:pre"><span class="us">_</span><span class="us">_</span>init<span class="us">_</span><span class="us">_</span>.py</div><svg style="left:28px;top:115px" width="12" height="12" viewBox="0 0 12 12"><rect x="2.7" y="0" width="6.3" height="11.5" rx="2.2" fill="#519aba"/><rect x="0" y="2.9" width="11.5" height="5.8" rx="2" fill="#519aba"/><path d="M2.8 6.2H5.8V8.7M8.9 5.3H5.8V2.8" fill="none" stroke="#181818" stroke-width="0.7"/><circle cx="4.5" cy="1.5" r="0.6" fill="#181818"/><circle cx="7.1" cy="10" r="0.6" fill="#181818"/></svg><div class="a" style="left:46px;top:111px;height:22px;line-height:22px;color:#cccccc;white-space:pre">app<span class="us">_</span>controller.py</div><svg style="left:28px;top:137px" width="12" height="12" viewBox="0 0 12 12"><rect x="2.7" y="0" width="6.3" height="11.5" rx="2.2" fill="#519aba"/><rect x="0" y="2.9" width="11.5" height="5.8" rx="2" fill="#519aba"/><path d="M2.8 6.2H5.8V8.7M8.9 5.3H5.8V2.8" fill="none" stroke="#181818" stroke-width="0.7"/><circle cx="4.5" cy="1.5" r="0.6" fill="#181818"/><circle cx="7.1" cy="10" r="0.6" fill="#181818"/></svg><div class="a" style="left:46px;top:133px;height:22px;line-height:22px;color:#cccccc;white-space:pre">filebrowser<span class="us">_</span>controller.py</div><svg style="left:28px;top:159px" width="12" height="12" viewBox="0 0 12 12"><rect x="2.7" y="0" width="6.3" height="11.5" rx="2.2" fill="#519aba"/><rect x="0" y="2.9" width="11.5" height="5.8" rx="2" fill="#519aba"/><path d="M2.8 6.2H5.8V8.7M8.9 5.3H5.8V2.8" fill="none" stroke="#181818" stroke-width="0.7"/><circle cx="4.5" cy="1.5" r="0.6" fill="#181818"/><circle cx="7.1" cy="10" r="0.6" fill="#181818"/></svg><div class="a" style="left:46px;top:155px;height:22px;line-height:22px;color:#e2c08d;white-space:pre">lab<span class="us">_</span>controller.py</div><div class="a" style="left:273px;top:154px;height:22px;line-height:22px;font-size:12px;font-weight:bold;color:#b89c70">M</div><svg style="left:28px;top:181px" width="12" height="12" viewBox="0 0 12 12"><rect x="2.7" y="0" width="6.3" height="11.5" rx="2.2" fill="#519aba"/><rect x="0" y="2.9" width="11.5" height="5.8" rx="2" fill="#519aba"/><path d="M2.8 6.2H5.8V8.7M8.9 5.3H5.8V2.8" fill="none" stroke="#181818" stroke-width="0.7"/><circle cx="4.5" cy="1.5" r="0.6" fill="#181818"/><circle cx="7.1" cy="10" r="0.6" fill="#181818"/></svg><div class="a" style="left:46px;top:177px;height:22px;line-height:22px;color:#cccccc;white-space:pre">marketplace<span class="us">_</span>controller.py</div><div class="a" style="left:0;top:198px;width:299px;height:22px;background:#04395e;border:1px solid #0078d4"></div><svg style="left:28px;top:203px" width="12" height="12" viewBox="0 0 12 12"><rect x="2.7" y="0" width="6.3" height="11.5" rx="2.2" fill="#519aba"/><rect x="0" y="2.9" width="11.5" height="5.8" rx="2" fill="#519aba"/><path d="M2.8 6.2H5.8V8.7M8.9 5.3H5.8V2.8" fill="none" stroke="#181818" stroke-width="0.7"/><circle cx="4.5" cy="1.5" r="0.6" fill="#181818"/><circle cx="7.1" cy="10" r="0.6" fill="#181818"/></svg><div class="a" style="left:46px;top:199px;height:22px;line-height:22px;color:#ffffff;white-space:pre">service<span class="us">_</span>controller.py</div><svg style="left:23px;top:225px" width="8" height="12" viewBox="0 0 8 12"><path d="M2.2 1.2L6.5 6L2.2 10.8" fill="none" stroke="#cccccc" stroke-width="1.25"/></svg><div class="a" style="left:38px;top:221px;height:22px;line-height:22px;color:#e2c08d;white-space:pre">core</div><div class="a" style="left:274px;top:227px;width:8px;height:8px;border-radius:50%;background:#756650"></div><svg style="left:23px;top:247px" width="8" height="12" viewBox="0 0 8 12"><path d="M2.2 1.2L6.5 6L2.2 10.8" fill="none" stroke="#cccccc" stroke-width="1.25"/></svg><div class="a" style="left:38px;top:243px;height:22px;line-height:22px;color:#8c8c8c;white-space:pre">logs</div><svg style="left:23px;top:269px" width="8" height="12" viewBox="0 0 8 12"><path d="M2.2 1.2L6.5 6L2.2 10.8" fill="none" stroke="#cccccc" stroke-width="1.25"/></svg><div class="a" style="left:38px;top:265px;height:22px;line-height:22px;color:#cccccc;white-space:pre">services</div><svg style="left:20px;top:291px" width="12" height="12" viewBox="0 0 12 12"><rect x="2.7" y="0" width="6.3" height="11.5" rx="2.2" fill="#519aba"/><rect x="0" y="2.9" width="11.5" height="5.8" rx="2" fill="#519aba"/><path d="M2.8 6.2H5.8V8.7M8.9 5.3H5.8V2.8" fill="none" stroke="#181818" stroke-width="0.7"/><circle cx="4.5" cy="1.5" r="0.6" fill="#181818"/><circle cx="7.1" cy="10" r="0.6" fill="#181818"/></svg><div class="a" style="left:38px;top:287px;height:22px;line-height:22px;color:#cccccc;white-space:pre"><span class="us">_</span><span class="us">_</span>init<span class="us">_</span><span class="us">_</span>.py</div><svg style="left:20px;top:313px" width="12" height="12" viewBox="0 0 12 12"><rect x="2.7" y="0" width="6.3" height="11.5" rx="2.2" fill="#519aba"/><rect x="0" y="2.9" width="11.5" height="5.8" rx="2" fill="#519aba"/><path d="M2.8 6.2H5.8V8.7M8.9 5.3H5.8V2.8" fill="none" stroke="#181818" stroke-width="0.7"/><circle cx="4.5" cy="1.5" r="0.6" fill="#181818"/><circle cx="7.1" cy="10" r="0.6" fill="#181818"/></svg><div class="a" style="left:38px;top:309px;height:22px;line-height:22px;color:#cccccc;white-space:pre">main.py</div><svg style="left:13px;top:337px" width="12" height="8" viewBox="0 0 12 8"><path d="M1.2 2L6 6.5L10.8 2" fill="none" stroke="#cccccc" stroke-width="1.25"/></svg><div class="a" style="left:30px;top:331px;height:22px;line-height:22px;color:#cccccc;white-space:pre">deploy</div><svg style="left:23px;top:357px" width="8" height="12" viewBox="0 0 8 12"><path d="M2.2 1.2L6.5 6L2.2 10.8" fill="none" stroke="#cccccc" stroke-width="1.25"/></svg><div class="a" style="left:38px;top:353px;height:22px;line-height:22px;color:#cccccc;white-space:pre">go</div><svg style="left:23px;top:379px" width="8" height="12" viewBox="0 0 8 12"><path d="M2.2 1.2L6.5 6L2.2 10.8" fill="none" stroke="#cccccc" stroke-width="1.25"/></svg><div class="a" style="left:38px;top:375px;height:22px;line-height:22px;color:#cccccc;white-space:pre">node</div><svg style="left:23px;top:401px" width="8" height="12" viewBox="0 0 8 12"><path d="M2.2 1.2L6.5 6L2.2 10.8" fill="none" stroke="#cccccc" stroke-width="1.25"/></svg><div class="a" style="left:38px;top:397px;height:22px;line-height:22px;color:#cccccc;white-space:pre">python</div><svg style="left:23px;top:423px" width="8" height="12" viewBox="0 0 8 12"><path d="M2.2 1.2L6.5 6L2.2 10.8" fill="none" stroke="#cccccc" stroke-width="1.25"/></svg><div class="a" style="left:38px;top:419px;height:22px;line-height:22px;color:#cccccc;white-space:pre">static</div><svg style="left:19.5px;top:444.5px" width="13" height="13" viewBox="0 0 13 13"><circle cx="6.5" cy="6.5" r="5.6" fill="none" stroke="#519aba" stroke-width="1.3"/><rect x="5.8" y="5.2" width="1.5" height="4.6" fill="#519aba"/><circle cx="6.55" cy="3.6" r="0.9" fill="#519aba"/></svg><div class="a" style="left:38px;top:441px;height:22px;line-height:22px;color:#cccccc;white-space:pre">README.md</div><svg style="left:13px;top:469px" width="12" height="8" viewBox="0 0 12 8"><path d="M1.2 2L6 6.5L10.8 2" fill="none" stroke="#cccccc" stroke-width="1.25"/></svg><div class="a" style="left:30px;top:463px;height:22px;line-height:22px;color:#73c991;white-space:pre">frontend</div><div class="a" style="left:274px;top:469px;width:8px;height:8px;border-radius:50%;background:#477a59"></div><svg style="left:23px;top:489px" width="8" height="12" viewBox="0 0 8 12"><path d="M2.2 1.2L6.5 6L2.2 10.8" fill="none" stroke="#cccccc" stroke-width="1.25"/></svg><div class="a" style="left:38px;top:485px;height:22px;line-height:22px;color:#8c8c8c;white-space:pre">node<span class="us">_</span>modules</div><svg style="left:23px;top:511px" width="8" height="12" viewBox="0 0 8 12"><path d="M2.2 1.2L6.5 6L2.2 10.8" fill="none" stroke="#cccccc" stroke-width="1.25"/></svg><div class="a" style="left:38px;top:507px;height:22px;line-height:22px;color:#73c991;white-space:pre">public</div><div class="a" style="left:274px;top:513px;width:8px;height:8px;border-radius:50%;background:#477a59"></div><svg style="left:23px;top:533px" width="8" height="12" viewBox="0 0 8 12"><path d="M2.2 1.2L6.5 6L2.2 10.8" fill="none" stroke="#cccccc" stroke-width="1.25"/></svg><div class="a" style="left:38px;top:529px;height:22px;line-height:22px;color:#cccccc;white-space:pre">src</div><svg style="left:20px;top:555px" width="12" height="12" viewBox="0 0 12 12"><path d="M6 0.5L11.5 6L6 11.5L0.5 6Z" fill="#41535b"/><path d="M4.5 3.5L7.5 6.5M6 5V9" stroke="#181818" stroke-width="1"/></svg><div class="a" style="left:38px;top:551px;height:22px;line-height:22px;color:#cccccc;white-space:pre">.gitignore</div><svg style="left:19.5px;top:576.5px" width="13" height="13" viewBox="0 0 13 13"><path d="M3.5 0.5H9.5L13 6.5L9.5 12.5H3.5L0 6.5Z" fill="#a074c4"/><circle cx="6.5" cy="6.5" r="3.3" fill="none" stroke="#2a1f33" stroke-width="1.2"/></svg><div class="a" style="left:38px;top:573px;height:22px;line-height:22px;color:#cccccc;white-space:pre">eslint.config.js</div><svg style="left:19.5px;top:598.5px" width="13" height="13" viewBox="0 0 13 13"><path d="M4.5 2L1 6.5L4.5 11M8.5 2L12 6.5L8.5 11" fill="none" stroke="#e37933" stroke-width="1.8"/></svg><div class="a" style="left:38px;top:595px;height:22px;line-height:22px;color:#cccccc;white-space:pre">index.html</div><svg style="left:19.5px;top:620px" width="13" height="13" viewBox="0 0 13 13"><text x="6.5" y="10.5" text-anchor="middle" font-family="Liberation Mono" font-weight="bold" font-size="12" fill="#cbcb41">{}</text></svg><div class="a" style="left:38px;top:617px;height:22px;line-height:22px;color:#cccccc;white-space:pre">package-lock.json</div><svg style="left:19.5px;top:642px" width="13" height="13" viewBox="0 0 13 13"><text x="6.5" y="10.5" text-anchor="middle" font-family="Liberation Mono" font-weight="bold" font-size="12" fill="#cbcb41">{}</text></svg><div class="a" style="left:38px;top:639px;height:22px;line-height:22px;color:#cccccc;white-space:pre">package.json</div><svg style="left:19.5px;top:664.5px" width="13" height="13" viewBox="0 0 13 13"><circle cx="6.5" cy="6.5" r="5.6" fill="none" stroke="#519aba" stroke-width="1.3"/><rect x="5.8" y="5.2" width="1.5" height="4.6" fill="#519aba"/><circle cx="6.55" cy="3.6" r="0.9" fill="#519aba"/></svg><div class="a" style="left:38px;top:661px;height:22px;line-height:22px;color:#cccccc;white-space:pre">README.md</div><svg style="left:21px;top:686.5px" width="10" height="13" viewBox="0 0 10 13"><path d="M4 0.5H8.5L6.5 5H9L3.5 12.5L5 6.5H2.5Z" fill="#cbcb41"/></svg><div class="a" style="left:38px;top:683px;height:22px;line-height:22px;color:#cccccc;white-space:pre">vite.config.js</div><svg style="left:13px;top:711px" width="12" height="8" viewBox="0 0 12 8"><path d="M1.2 2L6 6.5L10.8 2" fill="none" stroke="#cccccc" stroke-width="1.25"/></svg><div class="a" style="left:30px;top:705px;height:22px;line-height:22px;color:#73c991;white-space:pre">labs</div><div class="a" style="left:274px;top:711px;width:8px;height:8px;border-radius:50%;background:#477a59"></div><svg style="left:23px;top:731px" width="8" height="12" viewBox="0 0 8 12"><path d="M2.2 1.2L6.5 6L2.2 10.8" fill="none" stroke="#cccccc" stroke-width="1.25"/></svg><div class="a" style="left:38px;top:727px;height:22px;line-height:22px;color:#8c8c8c;white-space:pre">.vscode</div><svg style="left:21px;top:755px" width="12" height="8" viewBox="0 0 12 8"><path d="M1.2 2L6 6.5L10.8 2" fill="none" stroke="#cccccc" stroke-width="1.25"/></svg><div class="a" style="left:38px;top:749px;height:22px;line-height:22px;color:#cccccc;white-space:pre">airflow</div><svg style="left:27px;top:775px" width="15" height="12" viewBox="0 0 15 12"><path fill="#519aba" d="M0.5 6.5H12.2Q13 5.3 14.5 5.6Q14.2 6.8 13.2 7.2Q12 11.5 6 11.5Q1.5 11.5 0.5 6.5Z"/><rect x="2" y="4.3" width="1.8" height="1.6" fill="#519aba"/><rect x="4.2" y="4.3" width="1.8" height="1.6" fill="#519aba"/><rect x="6.4" y="4.3" width="1.8" height="1.6" fill="#519aba"/><rect x="8.6" y="4.3" width="1.8" height="1.6" fill="#519aba"/><rect x="4.2" y="2.1" width="1.8" height="1.6" fill="#519aba"/><rect x="6.4" y="2.1" width="1.8" height="1.6" fill="#519aba"/><rect x="6.4" y="0" width="1.8" height="1.6" fill="#519aba"/></svg><div class="a" style="left:46px;top:771px;height:22px;line-height:22px;color:#cccccc;white-space:pre">Dockerfile</div><svg style="left:29px;top:796px" width="10" height="13" viewBox="0 0 10 13"><text x="5" y="11.5" text-anchor="middle" font-family="Liberation Sans" font-weight="bold" font-size="14" fill="#8dc149">$</text></svg><div class="a" style="left:46px;top:793px;height:22px;line-height:22px;color:#cccccc;white-space:pre">entrypoint.sh</div><svg style="left:27.5px;top:818.5px" width="13" height="13" viewBox="0 0 13 13"><circle cx="6.5" cy="6.5" r="5.6" fill="none" stroke="#519aba" stroke-width="1.3"/><rect x="5.8" y="5.2" width="1.5" height="4.6" fill="#519aba"/><circle cx="6.55" cy="3.6" r="0.9" fill="#519aba"/></svg><div class="a" style="left:46px;top:815px;height:22px;line-height:22px;color:#cccccc;white-space:pre">README.md</div><svg style="left:23px;top:841px" width="8" height="12" viewBox="0 0 8 12"><path d="M2.2 1.2L6.5 6L2.2 10.8" fill="none" stroke="#cccccc" stroke-width="1.25"/></svg><div class="a" style="left:38px;top:837px;height:22px;line-height:22px;color:#cccccc;white-space:pre">buildroot</div><svg style="left:23px;top:863px" width="8" height="12" viewBox="0 0 8 12"><path d="M2.2 1.2L6.5 6L2.2 10.8" fill="none" stroke="#cccccc" stroke-width="1.25"/></svg><div class="a" style="left:38px;top:859px;height:22px;line-height:22px;color:#cccccc;white-space:pre">datascience</div><div class="a" style="left:24px;top:66px;width:1px;height:154px;background:#585858"></div>
</div>
<div class="a" style="left:48px;top:966px;width:299px;height:1px;background:#2b2b2b"></div>
<svg style="left:54px;top:971px" width="8" height="12" viewBox="0 0 8 12"><path d="M2.2 1.2L6.5 6L2.2 10.8" fill="none" stroke="#cccccc" stroke-width="1.25"/></svg>
<div class="a" style="left:68px;top:967px;height:22px;line-height:22px;font-size:11px;font-weight:bold;color:#cccccc">OUTLINE</div>
<div class="a" style="left:48px;top:988px;width:299px;height:1px;background:#2b2b2b"></div>
<svg style="left:54px;top:993px" width="8" height="12" viewBox="0 0 8 12"><path d="M2.2 1.2L6.5 6L2.2 10.8" fill="none" stroke="#cccccc" stroke-width="1.25"/></svg>
<div class="a" style="left:68px;top:989px;height:22px;line-height:22px;font-size:11px;font-weight:bold;color:#cccccc">TIMELINE</div>
<svg style="left:10px;top:9px" width="16" height="16" viewBox="0 0 100 100"><path fill="#0a84d8" d="M96.46 10.8L75.86.87a6.23 6.23 0 0 0-7.1 1.2L29.35 38.04 12.19 25.01a4.16 4.16 0 0 0-5.32.24L1.36 30.26a4.16 4.16 0 0 0 0 6.16L16.25 50 1.36 63.58a4.16 4.16 0 0 0 0 6.16l5.51 5.01a4.16 4.16 0 0 0 5.32.24l17.16-13.03 39.41 35.96a6.23 6.23 0 0 0 7.1 1.2l20.6-9.92a6.25 6.25 0 0 0 3.54-5.63V16.43a6.25 6.25 0 0 0-3.54-5.63zM75.02 72.7L45.11 50l29.91-22.7z"/><path fill="#27a6f5" d="M75 0.5L96.5 10.8V89.2L75 99.5Z"/></svg>
<div class="a" style="left:43px;top:1px;height:34px;line-height:34px;color:#cccccc;letter-spacing:-0.15px">File</div>
<div class="a" style="left:78px;top:1px;height:34px;line-height:34px;color:#cccccc;letter-spacing:-0.15px">Edit</div>
<div class="a" style="left:116px;top:1px;height:34px;line-height:34px;color:#cccccc;letter-spacing:-0.15px">Selection</div>
<div class="a" style="left:184px;top:1px;height:34px;line-height:34px;color:#cccccc;letter-spacing:-0.15px">View</div>
<div class="a" style="left:228px;top:1px;height:34px;line-height:34px;color:#cccccc;letter-spacing:-0.15px">Go</div>
<div class="a" style="left:260px;top:1px;height:34px;line-height:34px;color:#cccccc;letter-spacing:-0.15px">Run</div>
<div class="a" style="left:298px;top:1px;height:34px;line-height:34px;color:#cccccc;letter-spacing:-0.15px">Terminal</div>
<div class="a" style="left:363px;top:1px;height:34px;line-height:34px;color:#cccccc;letter-spacing:-0.15px">Help</div>
<svg style="left:603px;top:10px" width="16" height="14" viewBox="0 0 16 14"><path d="M7 2L2 7L7 12M2 7H14.5" fill="none" stroke="#cccccc" stroke-width="1.2"/></svg>
<svg style="left:629px;top:10px" width="16" height="14" viewBox="0 0 16 14"><path d="M9 2L14 7L9 12M14 7H1.5" fill="none" stroke="#8a8a8a" stroke-width="1.2"/></svg>
<div class="a" style="left:658px;top:5px;width:602px;height:24px;border-radius:6px;background:#222222;border:1px solid #3e3e3e"></div>
<svg style="left:925px;top:10px" width="14" height="14" viewBox="0 0 14 14"><circle cx="6" cy="6" r="4.8" fill="none" stroke="#cccccc" stroke-width="1.2"/><path d="M9.5 9.5L12.8 12.8" stroke="#cccccc" stroke-width="1.3"/></svg>
<div class="a" style="left:944px;top:5px;height:24px;line-height:24px;font-size:12px;color:#cccccc">labs-main</div>
<div class="a" style="left:1270px;top:5px;width:50px;height:24px;border-radius:6px;background:#1e1e1e;border:1px solid #3e3e3e"></div>
<svg style="left:1277px;top:8px" width="18" height="18" viewBox="0 0 18 18"><path d="M2.5 3.5H10.5M2.5 3.5V12.5H4V15L7 12.5H12V10" fill="none" stroke="#cccccc" stroke-width="1.2" stroke-linejoin="round"/><path d="M12.5 0.8L13.3 2.7L15.2 3.5L13.3 4.3L12.5 6.2L11.7 4.3L9.8 3.5L11.7 2.7Z" fill="#cccccc"/><circle cx="14.5" cy="7.5" r="1.1" fill="#cccccc"/></svg>
<svg style="left:1303px;top:13px" width="11" height="8" viewBox="0 0 11 8"><path d="M1 1.5L5.5 6L10 1.5" fill="none" stroke="#cccccc" stroke-width="1.1"/></svg>
<svg style="left:1681px;top:10px" width="16" height="15" viewBox="0 0 16 15"><rect x="0.5" y="0.5" width="6" height="13.5" rx="1" fill="none" stroke="#cccccc" stroke-width="1"/><rect x="9" y="0.5" width="6" height="5.5" rx="1" fill="none" stroke="#cccccc" stroke-width="1"/><rect x="9" y="8.5" width="6" height="5.5" rx="1" fill="none" stroke="#cccccc" stroke-width="1"/></svg>
<svg style="left:1707px;top:10px" width="16" height="15" viewBox="0 0 16 15"><rect x="0.5" y="0.5" width="14.5" height="13.5" rx="2" fill="none" stroke="#cccccc" stroke-width="1"/><path d="M1 2Q1 1 2 1H7V13.5H2Q1 13.5 1 12.5Z" fill="#cccccc"/></svg>
<svg style="left:1733px;top:10px" width="16" height="15" viewBox="0 0 16 15"><rect x="0.5" y="0.5" width="14.5" height="13.5" rx="2" fill="none" stroke="#cccccc" stroke-width="1"/><path d="M1 9.5H15" fill="none" stroke="#cccccc" stroke-width="1"/></svg>
<svg style="left:1759px;top:10px" width="16" height="15" viewBox="0 0 16 15"><rect x="0.5" y="0.5" width="14.5" height="13.5" rx="2" fill="none" stroke="#cccccc" stroke-width="1"/><path d="M10 1V14" fill="none" stroke="#cccccc" stroke-width="1"/></svg>
<div class="a" style="left:1800px;top:16px;width:10px;height:1px;background:#cccccc"></div>
<svg style="left:1845px;top:11px" width="12" height="12" viewBox="0 0 12 12"><rect x="0.5" y="3" width="8" height="8" rx="1" fill="none" stroke="#cccccc" stroke-width="1"/><path d="M3 2.8V2Q3 0.5 4.5 0.5H9.5Q11 0.5 11 2V7Q11 8.5 9.5 8.5H8.8" fill="none" stroke="#cccccc" stroke-width="1"/></svg>
<svg style="left:1891px;top:11px" width="12" height="12" viewBox="0 0 12 12"><path d="M0.8 0.8L11 11M11 0.8L0.8 11" stroke="#cccccc" stroke-width="1"/></svg>
<svg style="left:1811px;top:45px" width="16" height="16" viewBox="0 0 16 16"><path d="M8 8L15.06 9.43" stroke="#d97757" stroke-width="1.6" stroke-linecap="round"/><path d="M8 8L13.40 12.77" stroke="#d97757" stroke-width="1.6" stroke-linecap="round"/><path d="M8 8L10.29 14.83" stroke="#d97757" stroke-width="1.6" stroke-linecap="round"/><path d="M8 8L6.57 15.06" stroke="#d97757" stroke-width="1.6" stroke-linecap="round"/><path d="M8 8L3.23 13.40" stroke="#d97757" stroke-width="1.6" stroke-linecap="round"/><path d="M8 8L1.17 10.29" stroke="#d97757" stroke-width="1.6" stroke-linecap="round"/><path d="M8 8L0.94 6.57" stroke="#d97757" stroke-width="1.6" stroke-linecap="round"/><path d="M8 8L2.60 3.23" stroke="#d97757" stroke-width="1.6" stroke-linecap="round"/><path d="M8 8L5.71 1.17" stroke="#d97757" stroke-width="1.6" stroke-linecap="round"/><path d="M8 8L9.43 0.94" stroke="#d97757" stroke-width="1.6" stroke-linecap="round"/><path d="M8 8L12.77 2.60" stroke="#d97757" stroke-width="1.6" stroke-linecap="round"/><path d="M8 8L14.83 5.71" stroke="#d97757" stroke-width="1.6" stroke-linecap="round"/><circle cx="8" cy="8" r="2.5" fill="#d97757"/></svg>
<svg style="left:1838px;top:46px" width="15" height="15" viewBox="0 0 15 15"><path d="M1 1V6.5M1 4H3L5 1.5M3 4L5 6.5M8 2H10V6.5M8 6.5H12M1 8.5V13.5H5M8.5 8.5H12.5V13.5H8.5Z M10.5 10V12" fill="none" stroke="#f3f074" stroke-width="1.5"/></svg>
<svg style="left:1864px;top:46px" width="15" height="15" viewBox="0 0 15 15"><rect x="0.5" y="0.5" width="13.5" height="13.5" rx="1.5" fill="none" stroke="#cccccc" stroke-width="1"/><path d="M7.25 1V14" fill="none" stroke="#cccccc" stroke-width="1"/></svg>
<svg style="left:1889px;top:45px" width="16" height="16" viewBox="0 0 16 16"><circle cx="3" cy="8" r="1.1" fill="#cccccc"/><circle cx="8" cy="8" r="1.1" fill="#cccccc"/><circle cx="13" cy="8" r="1.1" fill="#cccccc"/></svg>
<svg style="left:12px;top:46px" width="24" height="26" viewBox="0 0 24 26"><path d="M5.5 2.5H14.5L20.5 8.5V19Q20.5 20.5 19 20.5H7Q5.5 20.5 5.5 19V4Q5.5 2.5 7 2.5Z M14 2.8V9H20.2" fill="none" stroke="#d7d7d7" stroke-width="1.6" stroke-linejoin="round"/><path d="M2 6.5V21.5Q2 24.5 5 24.5H17" fill="none" stroke="#d7d7d7" stroke-width="1.6"/></svg>
<svg style="left:12px;top:95px" width="24" height="24" viewBox="0 0 24 24"><circle cx="10" cy="10" r="7" fill="none" stroke="#868686" stroke-width="1.5"/><path d="M15 15L22 22" fill="none" stroke="#868686" stroke-width="1.5"/></svg>
<svg style="left:12px;top:143px" width="24" height="24" viewBox="0 0 24 24"><circle cx="5.5" cy="3.5" r="2.5" fill="none" stroke="#868686" stroke-width="1.4"/><circle cx="5.5" cy="20.5" r="2.5" fill="none" stroke="#868686" stroke-width="1.4"/><circle cx="17" cy="8.5" r="2.5" fill="none" stroke="#868686" stroke-width="1.4"/><path d="M5.5 6V18M5.5 17Q5.5 11 12 11H15" fill="none" stroke="#868686" stroke-width="1.4"/></svg>
<div class="a" style="left:24px;top:155px;width:16px;height:16px;border-radius:50%;background:#0078d4;color:#fff;font-size:10px;font-weight:bold;line-height:16px;text-align:center">7</div>
<svg style="left:10px;top:191px" width="26" height="26" viewBox="0 0 26 26"><path d="M12 3.5V14L23 8.8Z" fill="none" stroke="#868686" stroke-width="1.4" stroke-linejoin="round"/><path d="M3.5 22Q3.5 15 7.5 15Q11.5 15 11.5 22Q11.5 24.5 7.5 24.5Q3.5 24.5 3.5 22Z M2 18.5H4M11 18.5H13M2 22.5H4M11 22.5H13M5.5 15L4.5 13M9.5 15L10.5 13" fill="none" stroke="#868686" stroke-width="1.4"/></svg>
<svg style="left:12px;top:239px" width="24" height="24" viewBox="0 0 24 24"><path d="M10 17.5H2.5Q1.5 17.5 1.5 16.5V2.5Q1.5 1.5 2.5 1.5H18Q19 1.5 19 2.5V11" fill="none" stroke="#868686" stroke-width="1.4"/><path d="M7 21.5H11M9 17.5V21.5" fill="none" stroke="#868686" stroke-width="1.4"/><circle cx="17.5" cy="19" r="5.8" fill="#868686"/><path d="M15 16.5L17 18.5L15 20.5M20.5 16.5L18.5 18.5L20.5 20.5" fill="none" stroke="#181818" stroke-width="1.3"/></svg>
<svg style="left:12px;top:287px" width="24" height="24" viewBox="0 0 24 24"><path d="M1.5 7.5H9.5V15.5H1.5Z M1.5 15.5H9.5V22.5H1.5Z M9.5 15.5H16.5V22.5H9.5Z" fill="none" stroke="#868686" stroke-width="1.4" stroke-linejoin="round"/><path d="M16.5 1.5L22.5 7.5L16.5 13.5L10.5 7.5Z" fill="none" stroke="#868686" stroke-width="1.4" stroke-linejoin="round"/></svg>
<svg style="left:12px;top:335px" width="24" height="24" viewBox="0 0 24 24"><path d="M1.5 7.5L10 4L22.5 7.5V17.5L10 21.5L1.5 17.5Z M1.5 7.5L10 11L22.5 7.5 M10 11V21.5 M4.5 9V19 M13 10.5V19.5M15.5 10V19M18 9.3V18.3M20.5 8.6V17.6" fill="none" stroke="#868686" stroke-width="1.3" stroke-linejoin="round"/></svg>
<div class="a" style="left:12px;top:383px;width:24px;height:24px;background:#9d9d9d"></div>
<svg style="left:12px;top:383px" width="24" height="24" viewBox="0 0 24 24"><path d="M5 5V11M5 8H7.5L10 5.5M7.5 8L10 11M13 6H15.5V11M13 11H19M5 13.5V19H10M13.5 13.5H19V19H13.5Z M16.2 15.5V17" fill="none" stroke="#1e1e1e" stroke-width="1.6"/></svg>
<svg style="left:12px;top:926px" width="24" height="24" viewBox="0 0 24 24"><circle cx="12" cy="12" r="10" fill="none" stroke="#868686" stroke-width="1.4"/><circle cx="12" cy="8.5" r="3.3" fill="#868686"/><path d="M6.2 13.2H17.8Q17.8 18.5 12 18.5Q6.2 18.5 6.2 13.2Z" fill="#868686"/></svg>
<svg style="left:12px;top:974px" width="24" height="24" viewBox="0 0 24 24"><path d="M22.29 9.91L22.29 14.09L19.21 14.39L18.79 15.41L20.75 17.80L17.80 20.75L15.41 18.79L14.39 19.21L14.09 22.29L9.91 22.29L9.61 19.21L8.59 18.79L6.20 20.75L3.25 17.80L5.21 15.41L4.79 14.39L1.71 14.09L1.71 9.91L4.79 9.61L5.21 8.59L3.25 6.20L6.20 3.25L8.59 5.21L9.61 4.79L9.91 1.71L14.09 1.71L14.39 4.79L15.41 5.21L17.80 3.25L20.75 6.20L18.79 8.59L19.21 9.61Z" fill="none" stroke="#868686" stroke-width="1.4" stroke-linejoin="round"/><circle cx="12" cy="12" r="3" fill="none" stroke="#868686" stroke-width="1.4"/></svg>
<svg style="left:10px;top:1014px" width="13" height="14" viewBox="0 0 13 14"><path d="M1.5 12.5L5.5 8.5L1.5 4.5M11.5 1.5L7.5 5.5L11.5 9.5" fill="none" stroke="#cccccc" stroke-width="1.2"/></svg>
<svg style="left:41px;top:1013px" width="17" height="16" viewBox="0 0 17 16"><circle cx="3" cy="2.5" r="1.8" fill="none" stroke="#cccccc" stroke-width="1.1"/><circle cx="3" cy="13.5" r="1.8" fill="none" stroke="#cccccc" stroke-width="1.1"/><path d="M3 4.3V11.7M3 9Q3 6 7 6" fill="none" stroke="#cccccc" stroke-width="1.1"/><circle cx="9.5" cy="4.5" r="1.8" fill="none" stroke="#cccccc" stroke-width="1.1"/><circle cx="10" cy="11" r="4" fill="#cccccc"/><path d="M10 8.8V13.2M8.1 9.9L11.9 12.1M8.1 12.1L11.9 9.9" stroke="#181818" stroke-width="0.9"/></svg>
<div class="a" style="left:60px;top:1012px;height:21px;line-height:21px;font-size:12px;color:#cccccc;white-space:pre;letter-spacing:-0.25px">main*</div>
<svg style="left:97px;top:1013px" width="15" height="16" viewBox="0 0 15 16"><path d="M12 6.5A5 5 0 0 0 3.5 4M3 9.5A5 5 0 0 0 11.5 12" fill="none" stroke="#cccccc" stroke-width="1.2"/><path d="M3.2 1.5V4.5H6.2M11.8 14.5V11.5H8.8" fill="none" stroke="#cccccc" stroke-width="1.2"/></svg>
<svg style="left:128px;top:1013px" width="16" height="16" viewBox="0 0 16 16"><circle cx="8" cy="8" r="6.6" fill="none" stroke="#cccccc" stroke-width="1.2"/><path d="M5.3 5.3L10.7 10.7M10.7 5.3L5.3 10.7" fill="none" stroke="#cccccc" stroke-width="1.2"/></svg>
<div class="a" style="left:147px;top:1012px;height:21px;line-height:21px;font-size:12px;color:#cccccc;white-space:pre;letter-spacing:-0.25px">0</div>
<svg style="left:157px;top:1013px" width="16" height="16" viewBox="0 0 16 16"><path d="M8 1.8L14.8 14H1.2Z" fill="none" stroke="#cccccc" stroke-width="1.2" stroke-linejoin="round"/><path d="M8 6V10.5M8 11.8V12.8" fill="none" stroke="#cccccc" stroke-width="1.2"/></svg>
<div class="a" style="left:176px;top:1012px;height:21px;line-height:21px;font-size:12px;color:#cccccc;white-space:pre;letter-spacing:-0.25px">0</div>
<div class="a" style="left:1287px;top:1012px;height:21px;line-height:21px;font-size:12px;color:#cccccc;white-space:pre;letter-spacing:-0.35px">Ln 1, Col 1</div>
<div class="a" style="left:1358px;top:1012px;height:21px;line-height:21px;font-size:12px;color:#cccccc;white-space:pre;letter-spacing:-0.4px">Spaces: 4</div>
<div class="a" style="left:1423px;top:1012px;height:21px;line-height:21px;font-size:12px;color:#cccccc;white-space:pre;letter-spacing:-0.25px">UTF-8</div>
<div class="a" style="left:1470px;top:1012px;height:21px;line-height:21px;font-size:12px;color:#cccccc;white-space:pre;letter-spacing:-0.25px">CRLF</div>
<div class="a" style="left:1514px;top:1012px;height:21px;line-height:21px;font-size:13px;color:#cccccc;white-space:pre;letter-spacing:0.5px">{ }</div>
<div class="a" style="left:1535px;top:1012px;height:21px;line-height:21px;font-size:12px;color:#cccccc;white-space:pre;letter-spacing:-0.25px">Python</div>
<svg style="left:1588px;top:1013px" width="17" height="16" viewBox="0 0 17 16"><path d="M3 6Q3 2 8.5 2Q14 2 14 6V7.5Q15.5 8 15.5 10V12Q13 15 8.5 15Q4 15 1.5 12V10Q1.5 8 3 7.5Z" fill="none" stroke="#cccccc" stroke-width="1.3"/><rect x="4.5" y="4.5" width="3" height="3" rx="1" fill="none" stroke="#cccccc" stroke-width="1.1"/><rect x="9.5" y="4.5" width="3" height="3" rx="1" fill="none" stroke="#cccccc" stroke-width="1.1"/><path d="M6.5 10V12.5M10.5 10V12.5" fill="none" stroke="#cccccc" stroke-width="1.4"/></svg>
<svg style="left:1620px;top:1014px" width="15" height="15" viewBox="0 0 15 15"><path d="M1 1V6M1 3.5H2.8L4.5 1.3M2.8 3.5L4.5 6M7.5 1.8H9.5V6M7.5 6H11.5M1 8.5V13.5H4.5M8 8.5H12V13.5H8Z" fill="none" stroke="#cccccc" stroke-width="1.3"/></svg>
<div class="a" style="left:1640px;top:1012px;height:21px;line-height:21px;font-size:12px;color:#cccccc;white-space:pre;letter-spacing:0px">Autocomplete (0)</div>
<svg style="left:1747px;top:1014px" width="17" height="14" viewBox="0 0 17 14"><path d="M3.5 1.5Q0.8 7 3.5 12.5M13.5 1.5Q16.2 7 13.5 12.5M5.8 3.8Q4.3 7 5.8 10.2M11.2 3.8Q12.7 7 11.2 10.2" fill="none" stroke="#cccccc" stroke-width="1.1"/><circle cx="8.5" cy="7" r="1.3" fill="#cccccc"/></svg>
<div class="a" style="left:1767px;top:1012px;height:21px;line-height:21px;font-size:12px;color:#cccccc;white-space:pre;letter-spacing:-0.25px">Go Live</div>
<svg style="left:1822px;top:1013px" width="16" height="16" viewBox="0 0 16 16"><circle cx="8" cy="8" r="6.5" fill="none" stroke="#cccccc" stroke-width="1.2"/><path d="M3.5 12.5L12.5 3.5" fill="none" stroke="#cccccc" stroke-width="1.2"/></svg>
<div class="a" style="left:1842px;top:1012px;height:21px;line-height:21px;font-size:12px;color:#cccccc;white-space:pre;letter-spacing:-0.25px">Prettier</div>
<svg style="left:1897px;top:1013px" width="14" height="16" viewBox="0 0 14 16"><path d="M2 12V7Q2 2 7 2Q12 2 12 7V12H13.2H0.8M5.5 14H8.5" fill="none" stroke="#cccccc" stroke-width="1.2" stroke-linejoin="round"/></svg>
<div class="a" style="left:1623px;top:1035px;width:292px;height:40px;background:#181818"></div>
<svg style="left:617px;top:1045px" width="23" height="23" viewBox="0 0 23 23"><defs><linearGradient id="wg" x1="0" y1="0" x2="1" y2="1"><stop offset="0" stop-color="#6ad0f8"/><stop offset="1" stop-color="#0f8be0"/></linearGradient></defs><rect x="0" y="0" width="11" height="11" fill="url(#wg)"/><rect x="12" y="0" width="11" height="11" fill="url(#wg)"/><rect x="0" y="12" width="11" height="11" fill="url(#wg)"/><rect x="12" y="12" width="11" height="11" fill="url(#wg)"/></svg>
<div class="a" style="left:654px;top:1040px;width:219px;height:32px;border-radius:16px;background:#2f2f2f;border:1px solid #3a3a3a"></div>
<svg style="left:664px;top:1046px" width="18" height="18" viewBox="0 0 18 18"><circle cx="7.5" cy="7.5" r="5.8" fill="none" stroke="#d0d0d0" stroke-width="1.6"/><path d="M11.7 11.7L16 16" fill="none" stroke="#d0d0d0" stroke-width="1.8" stroke-linecap="round"/></svg>
<div class="a" style="left:690px;top:1040px;height:32px;line-height:32px;font-size:14px;color:#d6d6d6">Search</div>
<svg style="left:823px;top:1044px" width="46" height="26" viewBox="0 0 46 26"><path d="M2 24H30L28 22H4Z" fill="#9a9ab0"/><path d="M6 11V15L2 22H11L7 15V11Z" fill="#7ad06a"/><path d="M3 18H10L11 22H2Z" fill="#2aa84a"/><path d="M16 21L22 16" stroke="#3fa3ff" stroke-width="1.5"/><circle cx="24" cy="12" r="4" fill="#c9b8e8"/><path d="M30 2Q35 1 36 6Q37 10 34 12Q40 14 40 22V24H24Q25 18 30 14Q29 10 30 8Z" fill="#7f6ea8"/><circle cx="33" cy="5" r="3.5" fill="#8f7fb5"/></svg>
<svg style="left:885px;top:1044px" width="25" height="24" viewBox="0 0 25 24"><rect x="1" y="6" width="17" height="17" rx="2" fill="#6e6e6e"/><rect x="7" y="1" width="17" height="16" rx="2" fill="#f0f0f0"/><rect x="7" y="6" width="11" height="11" fill="#b9b9b9"/></svg>
<svg style="left:930px;top:1045px" width="23" height="21" viewBox="0 0 23 21"><defs><linearGradient id="cpa" x1="0" y1="0" x2="0" y2="1"><stop offset="0" stop-color="#1aa0f5"/><stop offset="0.5" stop-color="#4fbf6a"/><stop offset="1" stop-color="#f5c400"/></linearGradient><linearGradient id="cpb" x1="0" y1="0" x2="0" y2="1"><stop offset="0" stop-color="#b85ce8"/><stop offset="0.55" stop-color="#f0508a"/><stop offset="1" stop-color="#ffae5a"/></linearGradient></defs><path d="M6 0H14.5Q16.5 0 17 2L18 5.5H13Q11.5 5.5 11 7.5L9 13Q8.3 15 6.5 15H2Q-0.5 15 0.2 12.5L3 2.5Q3.6 0 6 0Z" fill="url(#cpa)"/><path d="M16.5 5.5H20Q23 5.5 22.3 8.2L19.3 18Q18.6 20.5 16.2 20.5H7.8Q6 20.5 5.6 18.6L4.8 15H9.5Q11 15 11.6 13.2L13.6 7.5Q14.2 5.5 16.5 5.5Z" fill="url(#cpb)"/></svg>
<svg style="left:972px;top:1044px" width="25" height="25" viewBox="0 0 25 25"><path d="M24.32 14.56L22.32 19.40L18.92 18.52L18.52 18.92L19.40 22.32L14.56 24.32L12.79 21.30L12.21 21.30L10.44 24.32L5.60 22.32L6.48 18.92L6.08 18.52L2.68 19.40L0.68 14.56L3.70 12.79L3.70 12.21L0.68 10.44L2.68 5.60L6.08 6.48L6.48 6.08L5.60 2.68L10.44 0.68L12.21 3.70L12.79 3.70L14.56 0.68L19.40 2.68L18.52 6.08L18.92 6.48L22.32 5.60L24.32 10.44L21.30 12.21L21.30 12.79Z" fill="#a7adb5"/><circle cx="12.5" cy="12.5" r="5.5" fill="#1c3d7a"/><circle cx="12.5" cy="12.5" r="4.3" fill="#2f6fdc"/></svg>
<svg style="left:1016px;top:1045px" width="25" height="22" viewBox="0 0 25 22"><path d="M0 2Q0 0 2 0H8L10 2H23Q25 2 25 4V20Q25 22 23 22H2Q0 22 0 20Z" fill="#f5c03c"/><path d="M0 5H25V20Q25 22 23 22H2Q0 22 0 20Z" fill="#fdd75a"/><rect x="5" y="15" width="15" height="7" rx="1.5" fill="#1e7fd8"/></svg>
<svg style="left:1061px;top:1046px" width="24" height="19" viewBox="0 0 24 19"><rect x="0" y="0" width="24" height="19" rx="1.5" fill="#3a3a3a"/><rect x="0" y="0" width="24" height="3" fill="#6b6b6b"/><path d="M3.5 7L8 10.5L3.5 14" fill="none" stroke="#c0c0c0" stroke-width="1.8"/><path d="M10 15H15" stroke="#e0e0e0" stroke-width="1.5"/></svg>
<svg style="left:1105px;top:1044px" width="24" height="24" viewBox="0 0 24 24"><circle cx="12" cy="12" r="12" fill="#db3236"/><path d="M12 12L1.6 6A12 12 0 0 0 12 24Z" fill="#3cba54"/><path d="M12 12H24A12 12 0 0 1 12 24Z" fill="#f4c20d"/><path d="M12 12L22.4 6A12 12 0 0 1 24 12Z" fill="#f4c20d"/><path d="M12 12L12 24L6 13.5Z" fill="#3cba54"/><circle cx="12" cy="12" r="5.5" fill="#ffffff"/><circle cx="12" cy="12" r="4.3" fill="#4a89f3"/></svg>
<div class="a" style="left:1114px;top:1072px;width:6px;height:3px;border-radius:2px;background:#9a9a9a"></div>
<div class="a" style="left:1141px;top:1036px;width:35px;height:39px;border-radius:5px;background:#2a2a2a;border:1px solid #333"></div>
<svg style="left:1148px;top:1044px" width="25" height="24" viewBox="0 0 100 100"><path fill="#0a6fc2" d="M96.46 10.8L75.86.87a6.23 6.23 0 0 0-7.1 1.2L29.35 38.04 12.19 25.01a4.16 4.16 0 0 0-5.32.24L1.36 30.26a4.16 4.16 0 0 0 0 6.16L16.25 50 1.36 63.58a4.16 4.16 0 0 0 0 6.16l5.51 5.01a4.16 4.16 0 0 0 5.32.24l17.16-13.03 39.41 35.96a6.23 6.23 0 0 0 7.1 1.2l20.6-9.92a6.25 6.25 0 0 0 3.54-5.63V16.43a6.25 6.25 0 0 0-3.54-5.63zM75.02 72.7L45.11 50l29.91-22.7z"/><path fill="#24a0f0" d="M75 0.5L96.5 10.8V89.2L75 99.5Z"/></svg>
<div class="a" style="left:1153px;top:1072px;width:16px;height:3px;border-radius:2px;background:#4cc2ff"></div>
<svg style="left:1193px;top:1044px" width="24" height="24" viewBox="0 0 24 24"><circle cx="12" cy="12" r="12" fill="#1d91e6"/><path d="M4 12H17Q18 10.5 19.8 11Q19.5 12.5 18.3 13Q16.5 18 10 18Q5 18 4 12Z" fill="#ffffff"/><rect x="6" y="9.5" width="2.2" height="2" fill="#fff"/><rect x="8.7" y="9.5" width="2.2" height="2" fill="#fff"/><rect x="11.4" y="9.5" width="2.2" height="2" fill="#fff"/><rect x="8.7" y="7" width="2.2" height="2" fill="#fff"/><rect x="11.4" y="7" width="2.2" height="2" fill="#fff"/><rect x="11.4" y="4.5" width="2.2" height="2" fill="#fff"/></svg>
<div class="a" style="left:1202px;top:1072px;width:6px;height:3px;border-radius:2px;background:#9a9a9a"></div>
<svg style="left:1237px;top:1044px" width="25" height="25" viewBox="0 0 25 25"><path d="M12.5 12.5L24.50 12.50 L20.01 15.24 Z" fill="#e8d04a"/><path d="M12.5 12.5L22.89 18.50 L17.64 18.63 Z" fill="#e8d04a"/><path d="M12.5 12.5L18.50 22.89 L13.88 20.38 Z" fill="#e8d04a"/><path d="M12.5 12.5L12.50 24.50 L9.76 20.01 Z" fill="#e8d04a"/><path d="M12.5 12.5L6.50 22.89 L6.37 17.64 Z" fill="#e8d04a"/><path d="M12.5 12.5L2.11 18.50 L4.62 13.88 Z" fill="#e8d04a"/><path d="M12.5 12.5L0.50 12.50 L4.99 9.76 Z" fill="#e8d04a"/><path d="M12.5 12.5L2.11 6.50 L7.36 6.37 Z" fill="#e8d04a"/><path d="M12.5 12.5L6.50 2.11 L11.12 4.62 Z" fill="#e8d04a"/><path d="M12.5 12.5L12.50 0.50 L15.24 4.99 Z" fill="#e8d04a"/><path d="M12.5 12.5L18.50 2.11 L18.63 7.36 Z" fill="#e8d04a"/><path d="M12.5 12.5L22.89 6.50 L20.38 11.12 Z" fill="#e8d04a"/><circle cx="12.5" cy="12.5" r="7" fill="#e7761d"/></svg>
<svg style="left:1281px;top:1044px" width="24" height="24" viewBox="0 0 24 24"><rect x="0" y="0" width="24" height="24" rx="4" fill="#d9714f"/><path d="M12 12L19.46 12.75" stroke="#fff" stroke-width="1.3" stroke-linecap="round"/><path d="M12 12L18.40 15.91" stroke="#fff" stroke-width="1.3" stroke-linecap="round"/><path d="M12 12L16.07 18.30" stroke="#fff" stroke-width="1.3" stroke-linecap="round"/><path d="M12 12L12.93 19.44" stroke="#fff" stroke-width="1.3" stroke-linecap="round"/><path d="M12 12L9.61 19.11" stroke="#fff" stroke-width="1.3" stroke-linecap="round"/><path d="M12 12L6.76 17.37" stroke="#fff" stroke-width="1.3" stroke-linecap="round"/><path d="M12 12L4.95 14.56" stroke="#fff" stroke-width="1.3" stroke-linecap="round"/><path d="M12 12L4.54 11.25" stroke="#fff" stroke-width="1.3" stroke-linecap="round"/><path d="M12 12L5.60 8.09" stroke="#fff" stroke-width="1.3" stroke-linecap="round"/><path d="M12 12L7.93 5.70" stroke="#fff" stroke-width="1.3" stroke-linecap="round"/><path d="M12 12L11.07 4.56" stroke="#fff" stroke-width="1.3" stroke-linecap="round"/><path d="M12 12L14.39 4.89" stroke="#fff" stroke-width="1.3" stroke-linecap="round"/><path d="M12 12L17.24 6.63" stroke="#fff" stroke-width="1.3" stroke-linecap="round"/><path d="M12 12L19.05 9.44" stroke="#fff" stroke-width="1.3" stroke-linecap="round"/></svg>
<div class="a" style="left:1633px;top:1045px;height:22px;line-height:22px;font-size:14px;color:#e6e6e6">FPS</div>
<div class="a" style="left:1664px;top:1045px;height:22px;line-height:22px;font-size:14px;font-weight:bold;color:#e6e6e6">N/A</div>
<div class="a" style="left:1695px;top:1040px;height:16px;line-height:16px;font-size:11px;color:#e6e6e6">ENG</div>
<div class="a" style="left:1700px;top:1057px;height:16px;line-height:16px;font-size:11px;color:#e6e6e6">IN</div>
<div class="a" style="left:1701px;top:1053px;width:1px;height:16px;background:#e6e6e6"></div>
<div class="a" style="left:1717px;top:1045px;height:22px;line-height:22px;font-size:14px;color:#e6e6e6">GPU</div>
<svg style="left:1737px;top:1047px" width="22" height="16" viewBox="0 0 22 16"><path d="M2 7Q11 -1 20 7M5 10Q11 4 17 10M8 13Q11 10 14 13" fill="none" stroke="#e6e6e6" stroke-width="1.6"/></svg>
<div class="a" style="left:1753px;top:1045px;height:22px;line-height:22px;font-size:14px;font-weight:bold;color:#e6e6e6">0</div>
<div class="a" style="left:1762px;top:1047px;height:20px;line-height:20px;font-size:10px;color:#e6e6e6">%</div>
<svg style="left:1760px;top:1048px" width="18" height="16" viewBox="0 0 18 16"><path d="M2 5H5L9 1V15L5 11H2Z" fill="none" stroke="#e6e6e6" stroke-width="1.2"/><path d="M12 4Q14 8 12 12M14.5 2Q17.5 8 14.5 14" fill="none" stroke="#e6e6e6" stroke-width="1.2"/></svg>
<div class="a" style="left:1785px;top:1045px;height:22px;line-height:22px;font-size:14px;font-weight:bold;color:#7fc77f">45</div>
<div class="a" style="left:1801px;top:1045px;height:22px;line-height:22px;font-size:14px;font-weight:bold;color:#e6e6e6">°c</div>
<div class="a" style="left:1828px;top:1043px;width:1px;height:26px;background:#e6e6e6;transform:rotate(12deg)"></div>
<div class="a" style="left:1834px;top:1040px;height:16px;line-height:16px;font-size:12px;color:#e6e6e6">6:46 PM</div>
<div class="a" style="left:1822px;top:1056px;height:16px;line-height:16px;font-size:12px;color:#e6e6e6">2/11/2026</div>
<div class="a" style="left:1843px;top:1045px;height:22px;line-height:22px;font-size:14px;color:#e6e6e6">CPU</div>
<div class="a" style="left:1880px;top:1045px;height:22px;line-height:22px;font-size:14px;font-weight:bold;color:#e6e6e6">9%</div>
<!--EXTRA-->
</body></html>
